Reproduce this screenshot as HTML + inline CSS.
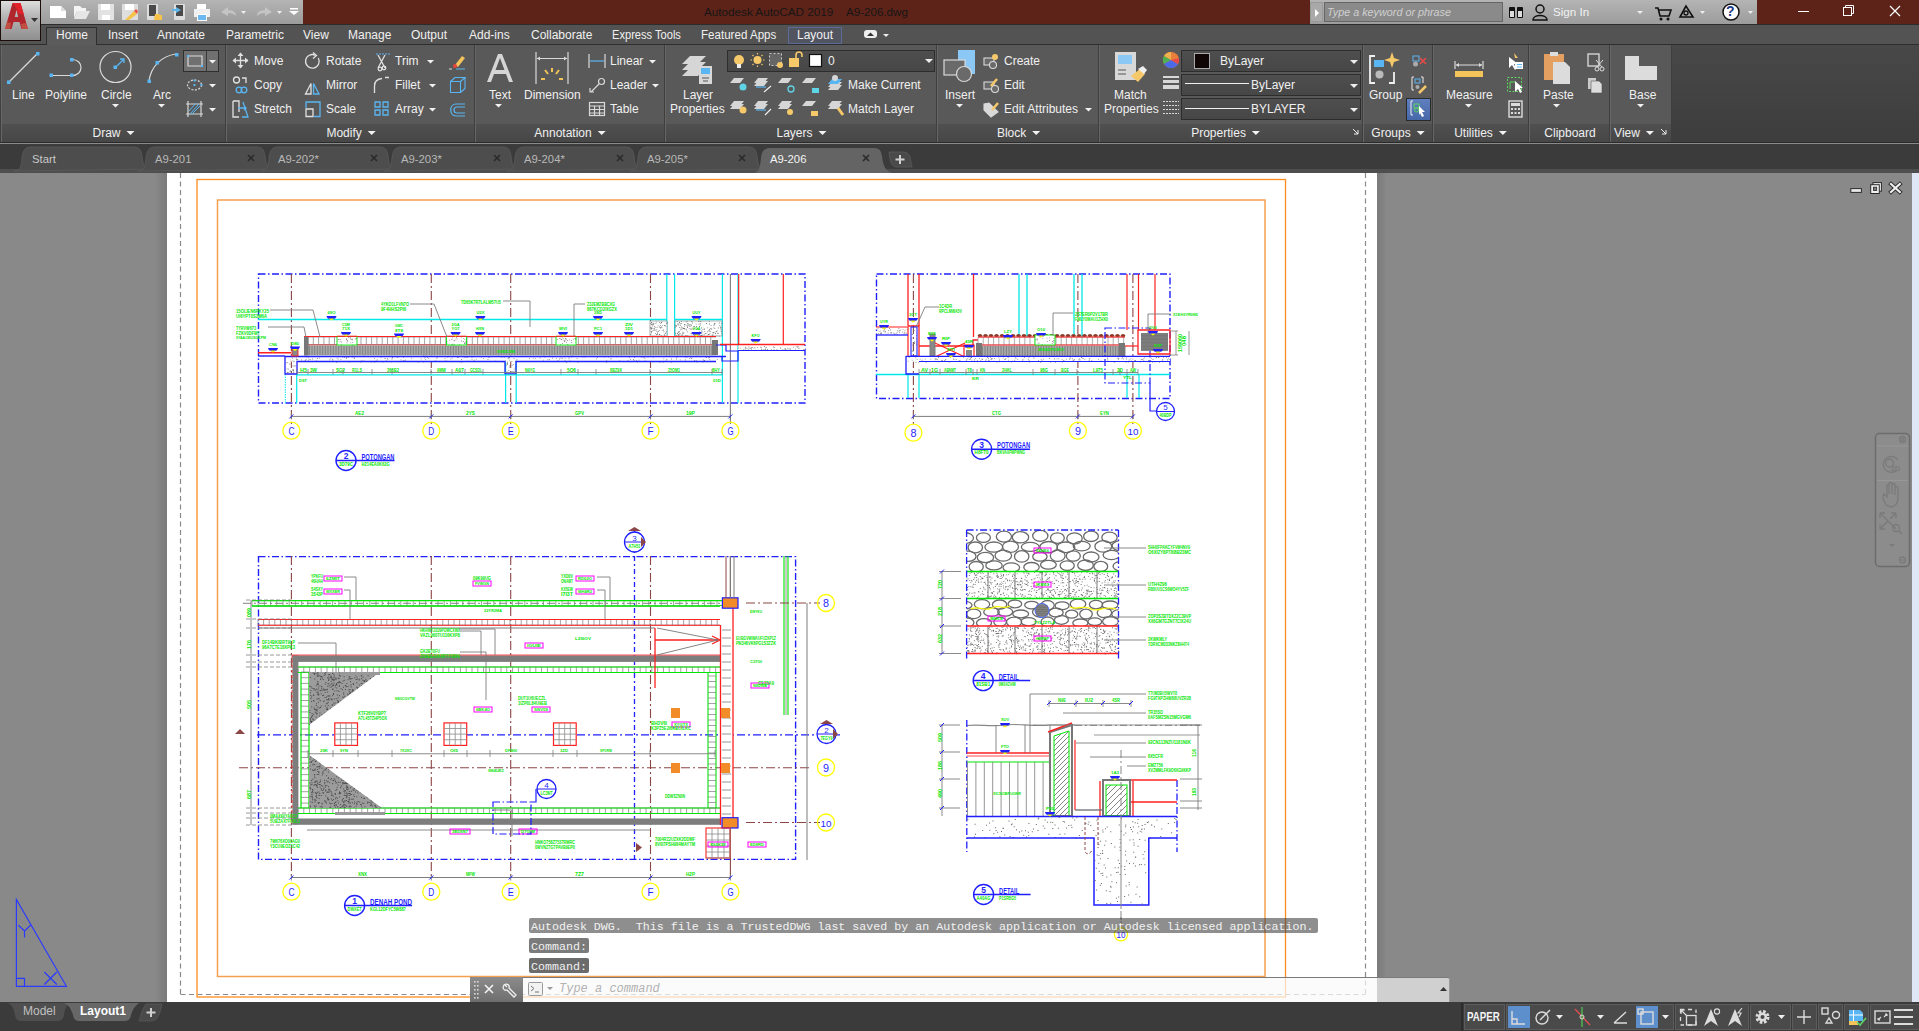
<!DOCTYPE html>
<html><head><meta charset="utf-8">
<style>
*{margin:0;padding:0;box-sizing:border-box}
html,body{width:1919px;height:1031px;overflow:hidden;background:#898989;font-family:"Liberation Sans",sans-serif}
.a{position:absolute}
.t{position:absolute;white-space:nowrap;color:#f0f0f0;font-size:12.5px;line-height:14px}
#logo{z-index:5}
#title{left:0;top:0;width:1919px;height:24px;background:#5e2318}
#qat{left:41px;top:0;width:262px;height:24px;background:linear-gradient(#b4b4b4,#9c9c9c)}
#srch{left:1310px;top:0;width:447px;height:24px;background:linear-gradient(#b4b4b4,#9c9c9c)}
#tabbar{left:0;top:24px;width:1919px;height:21px;background:#535353;border-top:1px solid #2c2c2c}
#ribbon{left:0;top:45px;width:1919px;height:99px;background:linear-gradient(#484848,#3d3d3d)}
#ribline{left:0;top:142px;width:1919px;height:2px;background:#8a8a8a;border-top:1px solid #2a2a2a}
.pnl{position:absolute;top:45px;height:97px;background:#595959;border-right:1px solid #3e3e3e;border-left:1px solid #666}
.pt{position:absolute;left:0;right:0;bottom:0;height:18px;background:linear-gradient(#505050,#474747);text-align:center;color:#f0f0f0;font-size:12.5px;line-height:18px}
#ftabs{left:0;top:144px;width:1919px;height:29px;background:#3b3b3b}
#draw{left:0;top:173px;width:1919px;height:830px;background:#898989}
#paper{left:167px;top:173px;width:1210px;height:829px;background:#fff}
#status{left:0;top:1002px;width:1919px;height:29px;background:#3b3b3b}
</style></head><body>

<div class="a" id="title"></div>
<div class="a" id="qat"></div>
<div class="a" id="srch"></div>
<!-- logo -->
<div class="a" style="left:0;top:0;width:41px;height:41px;background:#1a0d0b;z-index:5"></div>
<div class="a" style="left:1px;top:1px;width:39px;height:39px;background:linear-gradient(#dedede,#b5b5b5 40%,#8f8f8f);z-index:5"></div>
<svg class="a" style="left:0;top:0;z-index:6" width="42" height="42">
<path d="M5 29 L12.5 3 H20.5 L28 29 H21.5 L19.5 22 H13.5 L11.5 29 Z M14.8 17 H18.2 L16.5 10 Z" fill="#b0262c"/>
<path d="M12.5 3 H20.5 L24 15 L18 13 L16.5 8 Z" fill="#e3232b"/>
<path d="M5 29 L7 22 L11 23 L10 29 Z M21 24 L26 23 L28 29 H22 Z" fill="#c8604a" opacity="0.7"/>
<path d="M31 18 L38 18 L34.5 22 Z" fill="#333"/>
</svg>
<svg class="a" style="left:41px;top:0" width="262" height="24">
<!-- new -->
<path d="M9 6 H20 L25 11 V18 H9 Z" fill="#fff"/><path d="M20 6 L25 11 H20 Z" fill="#ddd"/>
<!-- open -->
<path d="M33 6 H39 L41 8 H45 V11 H36 L33 18 Z" fill="#f4f4f4"/><path d="M36 11 H49 L45 19 H33 Z" fill="#e6e6e6"/>
<!-- save -->
<path d="M57 4 H73 V20 H57 Z" fill="#e2e2e2"/><rect x="60" y="4" width="9" height="6" fill="#fff"/><rect x="61" y="15" width="8" height="5" fill="#fff"/>
<!-- saveas -->
<path d="M81 4 H97 V20 H81 Z" fill="#dedede"/><rect x="84" y="4" width="9" height="6" fill="#fff"/><path d="M84 20 L93 11 L96 14 L88 20 Z" fill="#f5c24a"/><path d="M93 11 L95 9 L97 11 L96 14 Z" fill="#e8534a"/>
<!-- web open -->
<rect x="106" y="4" width="11" height="16" rx="1" fill="#dcdcdc"/><rect x="108" y="5" width="7" height="11" fill="#4a4a4a"/><path d="M114 14 H118 L119 15 H121 V20 H113 Z" fill="#f5c24a"/>
<!-- web save -->
<rect x="133" y="4" width="11" height="16" rx="1" fill="#dcdcdc"/><rect x="135" y="5" width="7" height="11" fill="#4a4a4a"/><path d="M131 9 H135 V7 L140 10 L135 13 V11 H131 Z" fill="#5fb4e8"/>
<!-- print -->
<rect x="156" y="4" width="9" height="6" fill="#fff"/><rect x="153" y="9" width="16" height="8" fill="#f0f0f0"/><rect x="156" y="14" width="10" height="7" fill="#fff"/><rect x="157" y="15" width="8" height="5" fill="#6cb8f0"/>
<!-- undo redo -->
<path d="M180 12 L187 7 V10 C193 10 195 13 195 16 C193 14 191 13 187 13 V16 Z" fill="#c4c4c4"/>
<path d="M200 11 H205 L202.5 14 Z" fill="#eee"/>
<path d="M231 12 L224 7 V10 C218 10 216 13 216 16 C218 14 220 13 224 13 V16 Z" fill="#c4c4c4"/>
<path d="M236 11 H241 L238.5 14 Z" fill="#eee"/>
<rect x="249" y="8" width="8" height="1.5" fill="#fff"/><path d="M248 11 H258 L253 15 Z" fill="#fff"/>
</svg>
<div class="t" style="left:704px;top:5px;color:#161616;font-size:11.7px">Autodesk AutoCAD 2019</div>
<div class="t" style="left:846px;top:5px;color:#161616;font-size:11.6px">A9-206.dwg</div>
<!-- search -->
<div class="a" style="left:1310px;top:2px;width:13px;height:20px;background:#a9a9a9;border:1px solid #999"></div>
<svg class="a" style="left:1313px;top:8px" width="8" height="10"><path d="M2 1 L6 5 L2 9 Z" fill="#fff"/></svg>
<div class="a" style="left:1324px;top:2px;width:179px;height:20px;background:#8a8a8a;border:1px solid #666"></div>
<div class="t" style="left:1327px;top:5px;font-style:italic;color:#d0d0d0;font-size:10.8px">Type a keyword or phrase</div>
<svg class="a" style="left:1506px;top:2px" width="260" height="22">
<!-- binoculars -->
<rect x="3" y="5" width="6" height="11" rx="1" fill="#111"/><rect x="11" y="5" width="6" height="11" rx="1" fill="#111"/><rect x="4" y="9" width="4" height="6" fill="#ddd"/><rect x="12" y="9" width="4" height="6" fill="#ddd"/>
<!-- user -->
<circle cx="34" cy="7" r="4" fill="none" stroke="#111" stroke-width="1.5"/><path d="M27 18 C27 12 41 12 41 18 Z" fill="none" stroke="#111" stroke-width="1.5"/>
<path d="M131 9 H137 L134 12 Z" fill="#eee"/>
<!-- cart -->
<path d="M149 6 H152 L154 14 H163 L165 8 H153" fill="none" stroke="#111" stroke-width="1.6"/><circle cx="155" cy="17" r="1.5" fill="#111"/><circle cx="162" cy="17" r="1.5" fill="#111"/>
<!-- a360 -->
<path d="M180 4 L174 15 H187 Z" fill="none" stroke="#111" stroke-width="1.6"/><circle cx="180" cy="11" r="2" fill="none" stroke="#111" stroke-width="1.3"/>
<path d="M194 9 H199 L196.5 12 Z" fill="#eee"/>
<!-- help -->
<circle cx="225" cy="10" r="8" fill="#fff" stroke="#111" stroke-width="1.5"/>
<path d="M242 9 H247 L244.5 12 Z" fill="#eee"/>
</svg>
<div class="t" style="left:1553px;top:5px;color:#f2f2f2;font-size:11.6px">Sign In</div>
<div class="t" style="left:1726px;top:4px;color:#1a3a8c;font-size:14px;font-weight:bold">?</div>
<!-- window controls -->
<svg class="a" style="left:1780px;top:0" width="139" height="24">
<rect x="18" y="11" width="11" height="1" fill="#fff"/>
<rect x="63.5" y="7.5" width="8" height="8" fill="none" stroke="#fff"/><path d="M65.5 7.5 V5.5 H73.5 V13.5 H71.5" fill="none" stroke="#fff"/>
<path d="M110 6 L120 16 M120 6 L110 16" stroke="#fff" stroke-width="1.2"/>
</svg>

<div class="a" id="tabbar"></div>
<div class="a" style="left:0;top:44px;width:1919px;height:1px;background:#2e2e2e"></div>
<div class="a" style="left:46px;top:27px;width:51px;height:19px;background:#5b5b5b;border:1px solid #2e2e2e;border-bottom:none"></div>
<div class="a" style="left:788px;top:27px;width:54px;height:17px;background:#525560;border:1px solid #5b6a96"></div>
<div class="t" style="left:56px;top:28px;font-size:12px">Home</div>
<div class="t" style="left:108px;top:28px;font-size:12px">Insert</div>
<div class="t" style="left:157px;top:28px;font-size:12px">Annotate</div>
<div class="t" style="left:226px;top:28px;font-size:12px">Parametric</div>
<div class="t" style="left:303px;top:28px;font-size:12px">View</div>
<div class="t" style="left:348px;top:28px;font-size:12px">Manage</div>
<div class="t" style="left:411px;top:28px;font-size:12px">Output</div>
<div class="t" style="left:469px;top:28px;font-size:12px">Add-ins</div>
<div class="t" style="left:531px;top:28px;font-size:12px">Collaborate</div>
<div class="t" style="left:612px;top:28px;font-size:12px;transform:scaleX(0.925);transform-origin:0 0">Express Tools</div>
<div class="t" style="left:701px;top:28px;font-size:12px;transform:scaleX(0.965);transform-origin:0 0">Featured Apps</div>
<div class="t" style="left:797px;top:28px;font-size:12px">Layout</div>
<svg class="a" style="left:862px;top:28px;font-size:12px" width="30" height="14"><rect x="2" y="2" width="13" height="8" rx="3" fill="#eee"/><path d="M5 8 L8.5 4.5 L12 8 Z" fill="#333"/><path d="M21 6 H27 L24 9 Z" fill="#eee"/></svg>
<div class="a" id="ribbon"></div>
<div class="pnl" style="left:1px;width:225px"><div class="pt"></div></div>
<div class="pnl" style="left:226px;width:249px"><div class="pt"></div></div>
<div class="pnl" style="left:475px;width:190px"><div class="pt"></div></div>
<div class="pnl" style="left:665px;width:272px"><div class="pt"></div></div>
<div class="pnl" style="left:937px;width:162px"><div class="pt"></div></div>
<div class="pnl" style="left:1099px;width:264px"><div class="pt"></div></div>
<div class="pnl" style="left:1363px;width:70px"><div class="pt"></div></div>
<div class="pnl" style="left:1433px;width:96px"><div class="pt"></div></div>
<div class="pnl" style="left:1529px;width:81px"><div class="pt"></div></div>
<div class="pnl" style="left:1610px;width:62px"><div class="pt"></div></div>
<div class="a" id="ribline"></div>
<!-- dropdown boxes -->
<div class="a" style="left:183px;top:50px;width:36px;height:22px;background:#707070;border:1px solid #2f2f2f"></div>
<div class="a" style="left:206px;top:51px;width:1px;height:20px;background:#3a3a3a"></div>
<div class="a" style="left:727px;top:50px;width:208px;height:22px;background:linear-gradient(#4e4e4e,#474747);border:1px solid #2d2d2d"></div>
<div class="a" style="left:1181px;top:50px;width:180px;height:22px;background:linear-gradient(#4e4e4e,#474747);border:1px solid #2d2d2d"></div>
<div class="a" style="left:1181px;top:74px;width:180px;height:22px;background:linear-gradient(#4e4e4e,#474747);border:1px solid #2d2d2d"></div>
<div class="a" style="left:1181px;top:98px;width:180px;height:22px;background:linear-gradient(#4e4e4e,#474747);border:1px solid #2d2d2d"></div>
<div class="a" style="left:1406px;top:98px;width:25px;height:23px;background:linear-gradient(#5f7fbf,#4768a8);border:1px solid #2a2a2a"></div>
<svg class="a" style="left:0;top:0" width="1919" height="150">
<g fill="none" stroke="#d9d9d9" stroke-width="1.2">
<!-- Draw: line -->
<path d="M9 82 L37 54"/>
<!-- polyline -->
<path d="M51 75.5 H71 M72 59.5 C84 59.5 84 75.5 72 75.5"/>
<!-- circle -->
<circle cx="115.5" cy="67" r="15.5"/>
<!-- arc -->
<path d="M149 81 C151 66 162 56 176 54"/>
<!-- rect -->
<path d="M188 56 H202 V66 H188 Z"/>
<!-- ellipse -->
<ellipse cx="194.5" cy="85" rx="7" ry="5" stroke-dasharray="2 1.5"/>
<!-- hatch -->
<path d="M188 101 V117 M201 101 V117 M186 104 H203 M186 114 H203"/>
</g>
<g fill="#5ab6f2">
<rect x="7" y="80.5" width="3.5" height="3.5"/><rect x="36" y="52" width="3.5" height="3.5"/>
<rect x="49.5" y="73.5" width="3.5" height="3.5"/><rect x="70" y="73.5" width="3.5" height="3.5"/><rect x="70" y="58" width="3.5" height="3.5"/>
<rect x="113.5" y="65.5" width="3.5" height="3.5"/>
<rect x="147.5" y="79.5" width="3.5" height="3.5"/><rect x="155.5" y="61" width="3.5" height="3.5"/><rect x="175" y="53" width="3.5" height="3.5"/>
<rect x="187" y="55" width="2" height="2"/><rect x="201" y="65" width="2" height="2"/>
<rect x="193.5" y="84" width="2" height="2"/><rect x="200.5" y="84" width="2" height="2"/><rect x="193.5" y="79.5" width="2" height="2"/>
</g>
<path d="M117 66 L124 59 M120 59 H124 V63" stroke="#5ab6f2" stroke-width="1.3" fill="none"/>
<path d="M190 114 L199 104 M192 114 L200 106 M189 111 L196 103" stroke="#5ab6f2" stroke-width="1"/>
<!-- Modify -->
<g fill="none" stroke="#e0e0e0" stroke-width="1.3">
<path d="M240.5 53 V68 M233 60.5 H248"/>
<path d="M315.5 55.3 A6.8 6.8 0 1 0 318.3 58" /><path d="M313 52.5 L316.5 55.5 L313 58.5" />
<circle cx="236.5" cy="80" r="3"/><path d="M242 78 H246 V83"/>
<path d="M233 101 V117 H239 M233 101 H239 V112"/>
<path d="M305.5 94 L311 83.5 V94 Z"/>
<path d="M306 109 H313 V116.5 H306 Z"/>
<path d="M378 55 L385 68 M385 55 L378 68"/><circle cx="380" cy="69" r="1.8"/><circle cx="384" cy="68" r="1.8"/>
<path d="M374.5 93 V86 C374.5 81 377 79 382 78.5 M385 77.5 H389"/>
</g>
<path d="M376 54 H390" stroke="#5ab6f2" stroke-dasharray="2 1" stroke-width="1"/>
<g fill="none" stroke="#e0e0e0" stroke-width="1.3">
<path d="M240.5 52.5 L237.5 56 H243.5 Z M240.5 68.5 L237.5 65 H243.5 Z M232.5 60.5 L236 57.5 V63.5 Z M248.5 60.5 L245 57.5 V63.5 Z" fill="#e0e0e0" stroke="none"/>
</g>
<g fill="none" stroke="#5ab6f2" stroke-width="1.3">
<circle cx="239" cy="90" r="2.8"/><circle cx="244" cy="90" r="2.8"/>
<path d="M238 108 H246 M244 106 L246 108 L244 110 M243 102 L248 117 H242"/>
<path d="M313.5 83.5 L319 94 H313.5 Z"/>
<path d="M306 108 V102 H320 V116.5 H314"/>
<path d="M375 102 h5 v5 h-5 z M383 102 h5 v5 h-5 z M375 110 h5 v5 h-5 z M383 110 h5 v5 h-5 z"/>
<path d="M450.5 81.5 H460.5 V92.5 H450.5 Z M450.5 81.5 L455 77.5 H465 L460.5 81.5 M465 77.5 V88.5 L460.5 92.5" stroke-width="1.1"/>
<path d="M465 104 H456 C449 104 449 116 456 116 H465 M465 107 H457 C453 107 453 113 457 113 H465" stroke-width="1.2"/>
<path d="M456 69 H465" stroke-width="1"/><path d="M449 69 H452" stroke="#ddd" stroke-width="1"/>
</g>
<path d="M455 65 L462 56 L465 58 L458 67 Z" fill="#f2c45a"/><circle cx="455" cy="66" r="2" fill="#e8443a"/>
<!-- Annotation -->
<path d="M487 82 L498 54 H502 L513 82 H509 L506 74 H494 L491 82 Z M495.5 70 H504.5 L500 58 Z" fill="#d5d5d5"/>
<g stroke="#d9d9d9" stroke-width="1.2" fill="none">
<path d="M536 52 V84 M568 52 V84 M537 58.5 H567"/>
<path d="M589 54 V68 M605 54 V68"/>
<circle cx="601.5" cy="81.5" r="3"/><path d="M599 84 L591 92 M590 88 V92 H594"/>
<rect x="589.5" y="102.5" width="15" height="13"/><path d="M589.5 106 H604.5 M589.5 109.5 H604.5 M589.5 113 H604.5 M594.5 106 V115.5 M599.5 106 V115.5"/>
</g>
<path d="M537 58.5 L540 56.5 V60.5 Z M567 58.5 L564 56.5 V60.5 Z" fill="#d9d9d9"/>
<path d="M590 61 H604" stroke="#5ab6f2" stroke-width="1.2"/>
<g stroke="#f2c45a" stroke-width="2">
<path d="M552 68 V72 M545 70 L548 74 M559 70 L556 74 M541 79 H545 M559 79 H563"/>
</g>
<!-- Layers big icon -->
<g fill="#d6d6d6">
<path d="M690 56 H706 L698 64 H682 Z"/><path d="M690 62 H706 L698 70 H682 Z"/><path d="M690 68 H704 L698 76 H682 Z"/>
</g>
<rect x="699" y="66" width="13" height="18" fill="#d8d8d8"/><rect x="701" y="68" width="9" height="6" fill="#5ab6f2"/>
<path d="M702 78 H709 M703 81 H708" stroke="#555" stroke-width="1"/>
<!-- layer dropdown icons -->
<circle cx="739" cy="60" r="5" fill="#f5c96a"/><rect x="737" y="64" width="4" height="4" fill="#eee"/>
<circle cx="757.5" cy="60" r="4" fill="#f5c96a"/><path d="M757.5 53 V54.5 M757.5 65.5 V67 M750.5 60 H752 M763 60 H764.5 M752.5 55 L753.5 56 M762.5 55 L761.5 56 M752.5 65 L753.5 64 M762.5 65 L761.5 64" stroke="#f5c96a" stroke-width="1.2"/>
<rect x="769.5" y="53.5" width="12" height="12" fill="#666" stroke="#ccc" stroke-dasharray="2 2"/><circle cx="780" cy="65" r="3" fill="#f5c96a"/>
<rect x="789" y="58" width="10" height="9" fill="#f5c96a"/><path d="M796 58 V55 C796 51 802 51 802 55 V57" fill="none" stroke="#f5c96a" stroke-width="1.6"/>
<rect x="809.5" y="54.5" width="12" height="12" fill="#fff" stroke="#111" stroke-width="1.2"/>
<path d="M925 59 H933 L929 63 Z" fill="#eee"/>
<!-- layer row icons -->
<g fill="#d6d6d6">
<path d="M734 78 H744 L740 83 H730 Z"/><path d="M758 78 H768 L764 83 H754 Z"/><path d="M758 81 H768 L764 86 H754 Z"/>
<path d="M782 78 H792 L788 83 H778 Z"/><path d="M806 78 H816 L812 83 H802 Z"/>
<path d="M832 82 H842 L838 87 H828 Z"/><path d="M832 85 H842 L838 90 H828 Z"/>
<path d="M734 101 H744 L740 106 H730 Z"/><path d="M734 104 H744 L740 109 H730 Z"/>
<path d="M758 101 H768 L764 106 H754 Z"/><path d="M758 104 H768 L764 109 H754 Z"/>
<path d="M782 101 H792 L788 106 H778 Z"/><path d="M782 104 H792 L788 109 H778 Z"/>
<path d="M806 101 H816 L812 106 H802 Z"/>
<path d="M832 101 H842 L838 106 H828 Z"/><path d="M832 104 H842 L838 109 H828 Z"/>
</g>
<path d="M832 79 H842 L838 84 H828 Z" fill="#5ab6f2"/><circle cx="835" cy="78" r="3" fill="#d6d6d6"/>
<path d="M756 87 H766" stroke="#5ab6f2" stroke-width="1.2"/><path d="M756 110 H766" stroke="#5ab6f2" stroke-width="1.2"/>
<circle cx="743" cy="87" r="3.5" fill="#5fd4e6"/><circle cx="791" cy="89" r="3" fill="none" stroke="#5fd4e6" stroke-width="1.3"/>
<rect x="812" y="88" width="7" height="5" fill="#5fd4e6"/>
<circle cx="743" cy="110" r="3.5" fill="#f5c96a"/><circle cx="790" cy="112" r="3" fill="#f5c96a"/><rect x="811" y="111" width="7" height="5" fill="#f5c96a"/>
<path d="M838 108 L843 115" stroke="#f5c96a" stroke-width="3"/>
<path d="M764 92 L771 86 M765 115 L771 109" stroke="#eee" stroke-width="1.2"/>
<!-- Block -->
<rect x="958" y="50" width="17" height="24" fill="#8cc8f5"/>
<rect x="944" y="60" width="21" height="15" fill="#6a6a6a" stroke="#d9d9d9" stroke-width="1.2"/>
<circle cx="964" cy="74" r="7.5" fill="#6a6a6a" stroke="#d9d9d9" stroke-width="1.2"/>
<g stroke="#d9d9d9" stroke-width="1.1" fill="#6a6a6a">
<rect x="984" y="58" width="10" height="7"/><circle cx="993" cy="65" r="3.5"/>
<rect x="984" y="82" width="10" height="7"/><circle cx="995" cy="89" r="3.5"/>
<path d="M984 104 L989 103 L998 112 L991 117 L984 110 Z" fill="#d9d9d9"/>
</g>
<circle cx="995" cy="57" r="3" fill="#f5c96a"/>
<path d="M991 86 L997 79" stroke="#f5c96a" stroke-width="2.5"/><path d="M992 110 L998 103" stroke="#f5c96a" stroke-width="2.5"/>
<!-- Properties -->
<rect x="1115" y="52" width="21" height="28" fill="#d8d8d8"/><rect x="1118" y="55" width="14" height="9" fill="#8cc8f5"/>
<path d="M1118 70 H1126 M1118 74 H1126" stroke="#555" stroke-width="1"/>
<path d="M1131 76 L1140 69 L1145 74 L1138 82 Z" fill="#f5c96a"/><path d="M1138 69 L1143 66 L1147 70 L1144 74 Z" fill="#eee"/>
<circle cx="1171" cy="60" r="8" fill="#e8803a"/><path d="M1171 60 L1171 52 A8 8 0 0 0 1164 56 Z" fill="#f0b050"/><path d="M1171 60 L1164 56 A8 8 0 0 0 1164 64 Z" fill="#50b050"/><path d="M1171 60 L1164 64 A8 8 0 0 0 1178 64 Z" fill="#4a6ae8"/><path d="M1171 60 L1178 64 A8 8 0 0 0 1179 58 Z" fill="#e84a4a"/>
<g fill="#d8d8d8"><rect x="1163" y="76" width="16" height="2"/><rect x="1163" y="80" width="16" height="3"/><rect x="1163" y="85" width="16" height="4"/></g>
<g stroke="#d8d8d8" stroke-width="1.2" stroke-dasharray="2 1"><path d="M1163 101.5 H1179 M1163 105.5 H1179 M1163 109.5 H1179 M1163 113.5 H1179"/></g>
<rect x="1194.5" y="53.5" width="15" height="15" fill="#110606" stroke="#aaa" stroke-width="1"/>
<path d="M1185 83.5 H1249 M1185 108.5 H1249" stroke="#f0f0f0" stroke-width="1.2"/>
<path d="M1350 60 H1358 L1354 64 Z M1350 84 H1358 L1354 88 Z M1350 108 H1358 L1354 112 Z" fill="#eee"/>
<!-- Groups -->
<path d="M1375 56 H1370 V83 H1375 M1389 83 H1394 V72" fill="none" stroke="#f0f0f0" stroke-width="1.8"/>
<rect x="1374" y="60" width="10" height="7" fill="#5ab6f2"/><circle cx="1379.5" cy="74.5" r="4" fill="#bbb"/>
<path d="M1392 52 L1394 58 L1400 60 L1394 62 L1392 68 L1390 62 L1384 60 L1390 58 Z" fill="#f5c96a"/>
<rect x="1413" y="56" width="6" height="5" fill="none" stroke="#5ab6f2"/><circle cx="1415.5" cy="64" r="2.5" fill="#aaa"/><path d="M1420 58 L1426 64 M1426 58 L1420 64" stroke="#e84a4a" stroke-width="1.6"/>
<path d="M1414 77 H1412 V90 H1414 M1421 77 H1423 V83" fill="none" stroke="#eee"/><rect x="1415" y="79" width="5" height="4" fill="none" stroke="#5ab6f2"/><circle cx="1417.5" cy="87" r="2" fill="#aaa"/><path d="M1419 93 L1426 86" stroke="#f5c96a" stroke-width="2.5"/>
<path d="M1413 101 H1411 V115 H1413" fill="none" stroke="#eee"/><rect x="1414" y="104" width="5" height="4" fill="none" stroke="#5fd45f"/><circle cx="1416.5" cy="110" r="2" fill="none" stroke="#5fd45f"/><path d="M1419 106 L1425 112 L1422 112 L1424 116 L1422 117 L1420 113 L1419 115 Z" fill="#fff"/>
<!-- Utilities -->
<path d="M1455 61 V69 M1483 61 V69 M1456 65 H1482" stroke="#ddd" stroke-width="1.2"/><path d="M1456 65 L1459 63 V67 Z M1482 65 L1479 63 V67 Z" fill="#ddd"/>
<rect x="1455" y="71" width="28" height="6" fill="#f2c45a"/>
<path d="M1509 57 L1509 68 L1512 65 L1515 70 L1516 69 L1514 64 L1518 64 Z" fill="#fff"/><rect x="1515" y="62" width="8" height="7" fill="#fff"/><path d="M1517 64.5 H1522 M1517 67 H1522" stroke="#5ab6f2"/><path d="M1514 53 L1518 58 L1515 58 Z" fill="#f5c96a"/>
<rect x="1507.5" y="77.5" width="14" height="14" fill="none" stroke="#5fd45f" stroke-dasharray="2 1.5"/><path d="M1510 89 V82 H1516" stroke="#5fd45f" fill="none"/><path d="M1515 81 L1515 92 L1518 89 L1520 93 L1522 92 L1520 88 L1523 88 Z" fill="#fff"/>
<rect x="1509" y="101" width="13" height="16" fill="none" stroke="#ddd" stroke-width="1.4"/><rect x="1511" y="103" width="9" height="3" fill="#ddd"/>
<g fill="#ddd"><rect x="1511" y="108" width="2" height="2"/><rect x="1514.5" y="108" width="2" height="2"/><rect x="1518" y="108" width="2" height="2"/><rect x="1511" y="112" width="2" height="2"/><rect x="1514.5" y="112" width="2" height="2"/><rect x="1518" y="112" width="2" height="2"/></g>
<!-- Clipboard -->
<rect x="1544" y="54" width="20" height="26" fill="#e3a060"/><rect x="1550" y="52" width="8" height="4" fill="#ddd"/>
<path d="M1553 62 H1565 L1570 67 V84 H1553 Z" fill="#dcdcdc"/>
<rect x="1588" y="54" width="11" height="12" fill="none" stroke="#ddd" stroke-width="1.3"/><circle cx="1597" cy="69" r="2" fill="none" stroke="#ddd"/><circle cx="1602" cy="69" r="2" fill="none" stroke="#ddd"/><path d="M1596 60 L1602 67 M1603 60 L1597 67" stroke="#ddd"/>
<rect x="1588" y="78" width="8" height="11" fill="#ccc"/><path d="M1591 81 H1599 L1602 84 V93 H1591 Z" fill="#ddd" stroke="#555" stroke-width="0.6"/>
<!-- View base -->
<path d="M1625 56 H1639 V66 H1657 V80 H1625 Z" fill="#dcdcdc"/>
<!-- dropdown triangles -->
<g fill="#f2f2f2">
<path d="M112 104 H119 L115.5 107.5 Z"/><path d="M158 104 H165 L161.5 107.5 Z"/>
<path d="M209 60 H216 L212.5 63.5 Z"/><path d="M209 84 H216 L212.5 87.5 Z"/><path d="M209 108 H216 L212.5 111.5 Z"/>
<path d="M427 60 H434 L430.5 63.5 Z"/><path d="M429 84 H436 L432.5 87.5 Z"/><path d="M429 108 H436 L432.5 111.5 Z"/>
<path d="M495 104 H502 L498.5 107.5 Z"/><path d="M649 60 H656 L652.5 63.5 Z"/><path d="M652 84 H659 L655.5 87.5 Z"/>
<path d="M956 104 H963 L959.5 107.5 Z"/><path d="M1085 108 H1092 L1088.5 111.5 Z"/>
<path d="M1465 104 H1472 L1468.5 107.5 Z"/><path d="M1553 104 H1560 L1556.5 107.5 Z"/><path d="M1637 104 H1644 L1640.5 107.5 Z"/>
<!-- title arrows -->
<path d="M126.5 131 H134.5 L130.5 135 Z"/><path d="M367.7 131 H375.7 L371.7 135 Z"/><path d="M597.7 131 H605.7 L601.7 135 Z"/><path d="M818.5 131 H826.5 L822.5 135 Z"/><path d="M1032.2 131 H1040.2 L1036.2 135 Z"/><path d="M1251.9 131 H1259.9 L1255.9 135 Z"/><path d="M1416.7 131 H1424.7 L1420.7 135 Z"/><path d="M1498.9 131 H1506.9 L1502.9 135 Z"/><path d="M1645.9 131 H1653.9 L1649.9 135 Z"/>
</g>
<path d="M1353 129 L1358 134 M1358 130 V134 H1354 M1661 129 L1666 134 M1666 130 V134 H1662" stroke="#eee" stroke-width="1" fill="none"/>
</svg>
<!-- ribbon labels -->
<div class="t" style="left:12px;top:88px;font-size:12px">Line</div>
<div class="t" style="left:45px;top:88px;font-size:12px">Polyline</div>
<div class="t" style="left:101px;top:88px;font-size:12px">Circle</div>
<div class="t" style="left:153px;top:88px;font-size:12px">Arc</div>
<div class="t" style="left:254px;top:54px;font-size:12px">Move</div>
<div class="t" style="left:254px;top:78px;font-size:12px">Copy</div>
<div class="t" style="left:254px;top:102px;font-size:12px">Stretch</div>
<div class="t" style="left:326px;top:54px;font-size:12px">Rotate</div>
<div class="t" style="left:326px;top:78px;font-size:12px">Mirror</div>
<div class="t" style="left:326px;top:102px;font-size:12px">Scale</div>
<div class="t" style="left:395px;top:54px;font-size:12px">Trim</div>
<div class="t" style="left:395px;top:78px;font-size:12px">Fillet</div>
<div class="t" style="left:395px;top:102px;font-size:12px">Array</div>
<div class="t" style="left:489px;top:88px;font-size:12px">Text</div>
<div class="t" style="left:524px;top:88px;font-size:12px">Dimension</div>
<div class="t" style="left:610px;top:54px;font-size:12px">Linear</div>
<div class="t" style="left:610px;top:78px;font-size:12px">Leader</div>
<div class="t" style="left:610px;top:102px;font-size:12px">Table</div>
<div class="t" style="left:683px;top:88px;font-size:12px">Layer</div>
<div class="t" style="left:670px;top:102px;font-size:12px">Properties</div>
<div class="t" style="left:828px;top:54px;font-size:12px;color:#eee">0</div>
<div class="t" style="left:848px;top:78px;font-size:12px">Make Current</div>
<div class="t" style="left:848px;top:102px;font-size:12px">Match Layer</div>
<div class="t" style="left:945px;top:88px;font-size:12px">Insert</div>
<div class="t" style="left:1004px;top:54px;font-size:12px">Create</div>
<div class="t" style="left:1004px;top:78px;font-size:12px">Edit</div>
<div class="t" style="left:1004px;top:102px;font-size:12px">Edit Attributes</div>
<div class="t" style="left:1114px;top:88px;font-size:12px">Match</div>
<div class="t" style="left:1104px;top:102px;font-size:12px">Properties</div>
<div class="t" style="left:1220px;top:54px;font-size:12px">ByLayer</div>
<div class="t" style="left:1251px;top:78px;font-size:12px">ByLayer</div>
<div class="t" style="left:1251px;top:102px;font-size:12px">BYLAYER</div>
<div class="t" style="left:1369px;top:88px;font-size:12px">Group</div>
<div class="t" style="left:1446px;top:88px;font-size:12px">Measure</div>
<div class="t" style="left:1543px;top:88px;font-size:12px">Paste</div>
<div class="t" style="left:1629px;top:88px;font-size:12px">Base</div>
<div class="t" style="left:92.5px;top:126px;font-size:12px">Draw</div>
<div class="t" style="left:326.4px;top:126px;font-size:12px">Modify</div>
<div class="t" style="left:534.3px;top:126px;font-size:12px">Annotation</div>
<div class="t" style="left:776.5px;top:126px;font-size:12px">Layers</div>
<div class="t" style="left:996.9px;top:126px;font-size:12px">Block</div>
<div class="t" style="left:1191.2px;top:126px;font-size:12px">Properties</div>
<div class="t" style="left:1371.3px;top:126px;font-size:12px">Groups</div>
<div class="t" style="left:1454.2px;top:126px;font-size:12px">Utilities</div>
<div class="t" style="left:1544.3px;top:126px;font-size:12px">Clipboard</div>
<div class="t" style="left:1614.1px;top:126px;font-size:12px">View</div>
<div class="a" id="ftabs"></div>
<svg class="a" style="left:0;top:144px" width="1919" height="29">
<rect x="0" y="25" width="1919" height="4" fill="#4e4e4e"/>
<g fill="#4d4d4d" stroke="#5a5a5a" stroke-width="0.8">
<path d="M14 27 C20 27 21 24 22 14 C23 5 26 3 32 3 H133 C139 3 141 5 142 12 C143 22 145 25 150 25 Z"/>
<path d="M138 27 C144 27 145 24 146 14 C147 5 150 3 156 3 H256 C262 3 264 5 265 12 C266 22 268 25 273 25 Z"/>
<path d="M261 27 C267 27 268 24 269 14 C270 5 273 3 279 3 H379 C385 3 387 5 388 12 C389 22 391 25 396 25 Z"/>
<path d="M384 27 C390 27 391 24 392 14 C393 5 396 3 402 3 H502 C508 3 510 5 511 12 C512 22 514 25 519 25 Z"/>
<path d="M507 27 C513 27 514 24 515 14 C516 5 519 3 525 3 H625 C631 3 633 5 634 12 C635 22 637 25 642 25 Z"/>
<path d="M630 27 C636 27 637 24 638 14 C639 5 642 3 648 3 H748 C754 3 756 5 757 12 C758 22 760 25 765 25 Z"/>
</g>
<path d="M753 29 C759 29 760 24 761 14 C762 6 765 4 771 4 H873 C879 4 881 6 882 12 C883 22 886 28 893 29 Z" fill="#646464"/>
<path d="M889 8 H903 C907 8 909 10 910 13 C911 18 912 22 912 23 H897 C893 23 891 20 890 15 Z" fill="#4a4a4a" stroke="#5a5a5a" stroke-width="0.8"/>
<path d="M900 11 V20 M895.5 15.5 H904.5" stroke="#d0d0d0" stroke-width="2"/>
<g stroke="#2a2a2a" stroke-width="1.6">
<path d="M248 11 L254 17 M254 11 L248 17"/><path d="M371 11 L377 17 M377 11 L371 17"/><path d="M494 11 L500 17 M500 11 L494 17"/>
<path d="M617 11 L623 17 M623 11 L617 17"/><path d="M739 11 L745 17 M745 11 L739 17"/><path d="M863 11 L869 17 M869 11 L863 17"/>
</g>
</svg>
<div class="t" style="left:32px;top:152px;font-size:11.3px;color:#c8c8c8">Start</div>
<div class="t" style="left:155px;top:152px;font-size:11.3px;color:#b8b8b8">A9-201</div>
<div class="t" style="left:278px;top:152px;font-size:11.3px;color:#b8b8b8">A9-202*</div>
<div class="t" style="left:401px;top:152px;font-size:11.3px;color:#b8b8b8">A9-203*</div>
<div class="t" style="left:524px;top:152px;font-size:11.3px;color:#b8b8b8">A9-204*</div>
<div class="t" style="left:647px;top:152px;font-size:11.3px;color:#b8b8b8">A9-205*</div>
<div class="t" style="left:770px;top:152px;font-size:11.3px;color:#f4f4f4">A9-206</div>
<div class="a" id="draw"></div>
<div class="a" style="left:155px;top:173px;width:12px;height:830px;background:linear-gradient(90deg,#898989,#7a7a7a)"></div>
<div class="a" id="paper"></div>
<div class="a" style="left:1377px;top:173px;width:10px;height:830px;background:linear-gradient(90deg,#7a7a7a,#898989)"></div>
<div class="a" style="left:1912px;top:173px;width:7px;height:830px;background:#dfe6f5"></div>
<svg class="a" style="left:0;top:0" width="1919" height="1031">
<line x1="180.5" y1="173" x2="180.5" y2="994.5" stroke="#8a8a8a" stroke-width="1.2" stroke-dasharray="5 3.5"/>
<line x1="180.5" y1="994.5" x2="1365.5" y2="994.5" stroke="#8a8a8a" stroke-width="1.2" stroke-dasharray="5 3.5"/>
<line x1="1365.5" y1="173" x2="1365.5" y2="994.5" stroke="#8a8a8a" stroke-width="1.2" stroke-dasharray="5 3.5"/>
<rect x="197" y="179.5" width="1088.5" height="817.5" stroke="#ff8c1e" stroke-width="1.3" fill="none"/>
<rect x="217.5" y="200" width="1047.5" height="776.5" stroke="#f5a050" stroke-width="1.5" fill="none"/>
<rect x="258.5" y="274" width="546.5" height="129" stroke="#1f1fff" stroke-width="1.4" fill="none" stroke-dasharray="7 2.5 1.5 2.5"/>
<line x1="291.4" y1="274" x2="291.4" y2="424" stroke="#8c4646" stroke-width="1.1" stroke-dasharray="9 3 2 3"/>
<line x1="431.3" y1="274" x2="431.3" y2="424" stroke="#8c4646" stroke-width="1.1" stroke-dasharray="9 3 2 3"/>
<line x1="510.7" y1="274" x2="510.7" y2="424" stroke="#8c4646" stroke-width="1.1" stroke-dasharray="9 3 2 3"/>
<line x1="650.5" y1="274" x2="650.5" y2="424" stroke="#8c4646" stroke-width="1.1" stroke-dasharray="9 3 2 3"/>
<line x1="730.4" y1="274" x2="730.4" y2="424" stroke="#7d7d7d" stroke-width="1.1"/>
<line x1="258" y1="319.5" x2="667" y2="319.5" stroke="#00e8e8" stroke-width="1.6"/>
<line x1="675" y1="319.5" x2="722" y2="319.5" stroke="#00e8e8" stroke-width="1.6"/>
<line x1="666.8" y1="274" x2="666.8" y2="337" stroke="#00e8e8" stroke-width="1.2"/>
<line x1="674.6" y1="274" x2="674.6" y2="337" stroke="#00e8e8" stroke-width="1.2"/>
<line x1="722.4" y1="274" x2="722.4" y2="403" stroke="#00e8e8" stroke-width="1.2"/>
<line x1="738" y1="274" x2="738" y2="403" stroke="#00e8e8" stroke-width="1.2"/>
<line x1="285.3" y1="374" x2="285.3" y2="403" stroke="#00e8e8" stroke-width="1" stroke-dasharray="1.5 1"/>
<line x1="296.7" y1="374" x2="296.7" y2="403" stroke="#00e8e8" stroke-width="1.2"/>
<line x1="505.6" y1="362" x2="505.6" y2="403" stroke="#00e8e8" stroke-width="1.2"/>
<line x1="516.2" y1="362" x2="516.2" y2="403" stroke="#00e8e8" stroke-width="1.2"/>
<rect x="650" y="321" width="17" height="15" fill="#fff"/>
<path d="M655.5 323.3h0.8v0.8h-0.8z M661.1 322.1h0.8v0.8h-0.8z M659.1 326.5h0.8v0.8h-0.8z M651.0 328.6h0.8v0.8h-0.8z M650.6 327.5h0.8v0.8h-0.8z M651.2 322.4h0.8v0.8h-0.8z M657.2 333.4h0.8v0.8h-0.8z M652.1 324.3h0.8v0.8h-0.8z M660.7 335.2h0.8v0.8h-0.8z M659.8 327.0h0.8v0.8h-0.8z M666.6 321.7h0.8v0.8h-0.8z M664.6 325.3h0.8v0.8h-0.8z M652.5 322.8h0.8v0.8h-0.8z M655.2 333.2h0.8v0.8h-0.8z M653.1 329.7h0.8v0.8h-0.8z M660.9 326.6h0.8v0.8h-0.8z M659.3 321.9h0.8v0.8h-0.8z M651.0 324.1h0.8v0.8h-0.8z M661.6 327.4h0.8v0.8h-0.8z M655.3 329.8h0.8v0.8h-0.8z M657.7 325.5h0.8v0.8h-0.8z M663.5 331.5h0.8v0.8h-0.8z M654.1 329.6h0.8v0.8h-0.8z M658.9 334.1h0.8v0.8h-0.8z M662.4 325.3h0.8v0.8h-0.8z M666.7 322.8h0.8v0.8h-0.8z M657.1 332.4h0.8v0.8h-0.8z M652.6 328.3h0.8v0.8h-0.8z M650.7 331.0h0.8v0.8h-0.8z M663.0 329.6h0.8v0.8h-0.8z M664.9 325.7h0.8v0.8h-0.8z M661.8 329.9h0.8v0.8h-0.8z M659.9 327.8h0.8v0.8h-0.8z M664.3 335.2h0.8v0.8h-0.8z M658.1 331.0h0.8v0.8h-0.8z M651.0 331.5h0.8v0.8h-0.8z M661.0 335.9h0.8v0.8h-0.8z M664.0 325.3h0.8v0.8h-0.8z M656.6 331.0h0.8v0.8h-0.8z M650.4 327.9h0.8v0.8h-0.8z M652.9 322.8h0.8v0.8h-0.8z M651.0 332.5h0.8v0.8h-0.8z M652.2 324.7h0.8v0.8h-0.8z M656.6 334.1h0.8v0.8h-0.8z M651.4 327.7h0.8v0.8h-0.8z M659.3 334.3h0.8v0.8h-0.8z M663.9 334.0h0.8v0.8h-0.8z M654.7 327.2h0.8v0.8h-0.8z M656.1 334.3h0.8v0.8h-0.8z M666.3 323.3h0.8v0.8h-0.8z M653.0 324.5h0.8v0.8h-0.8z M654.0 328.3h0.8v0.8h-0.8z M660.0 324.9h0.8v0.8h-0.8z M650.1 327.3h0.8v0.8h-0.8z M656.3 329.5h0.8v0.8h-0.8z M666.2 331.4h0.8v0.8h-0.8z M658.8 330.3h0.8v0.8h-0.8z M661.5 321.8h0.8v0.8h-0.8z M665.3 332.7h0.8v0.8h-0.8z M664.9 333.0h0.8v0.8h-0.8z M656.7 327.0h0.8v0.8h-0.8z M651.8 330.5h0.8v0.8h-0.8z M651.1 322.0h0.8v0.8h-0.8z M653.5 323.4h0.8v0.8h-0.8z M655.8 321.8h0.8v0.8h-0.8z M650.0 323.3h0.8v0.8h-0.8z M651.7 326.5h0.8v0.8h-0.8z M650.4 334.1h0.8v0.8h-0.8z M660.4 323.2h0.8v0.8h-0.8z M654.3 326.2h0.8v0.8h-0.8z" fill="#666"/>
<rect x="650" y="321" width="17" height="15" stroke="#7d7d7d" stroke-width="0.6" fill="none"/>
<path d="M692.1 322.8h0.8v0.8h-0.8z M714.9 335.9h0.8v0.8h-0.8z M696.9 328.3h0.8v0.8h-0.8z M679.0 322.5h0.8v0.8h-0.8z M691.1 325.0h0.8v0.8h-0.8z M714.0 323.4h0.8v0.8h-0.8z M676.1 335.3h0.8v0.8h-0.8z M699.8 323.2h0.8v0.8h-0.8z M700.5 321.4h0.8v0.8h-0.8z M699.8 335.7h0.8v0.8h-0.8z M715.6 331.4h0.8v0.8h-0.8z M687.3 326.5h0.8v0.8h-0.8z M682.9 332.6h0.8v0.8h-0.8z M700.0 332.7h0.8v0.8h-0.8z M690.5 324.3h0.8v0.8h-0.8z M713.1 335.8h0.8v0.8h-0.8z M715.1 333.1h0.8v0.8h-0.8z M713.5 332.1h0.8v0.8h-0.8z M685.7 328.8h0.8v0.8h-0.8z M691.7 321.4h0.8v0.8h-0.8z M676.3 325.2h0.8v0.8h-0.8z M687.2 331.4h0.8v0.8h-0.8z M720.0 327.7h0.8v0.8h-0.8z M719.0 335.8h0.8v0.8h-0.8z M719.9 326.5h0.8v0.8h-0.8z M685.4 324.4h0.8v0.8h-0.8z M684.2 324.1h0.8v0.8h-0.8z M704.3 334.5h0.8v0.8h-0.8z M714.5 328.2h0.8v0.8h-0.8z M705.7 333.0h0.8v0.8h-0.8z M679.0 330.9h0.8v0.8h-0.8z M717.8 332.7h0.8v0.8h-0.8z M710.3 328.2h0.8v0.8h-0.8z M683.4 332.8h0.8v0.8h-0.8z M690.6 333.0h0.8v0.8h-0.8z M720.7 326.9h0.8v0.8h-0.8z M693.9 335.2h0.8v0.8h-0.8z M709.1 323.6h0.8v0.8h-0.8z M681.0 323.3h0.8v0.8h-0.8z M717.5 333.1h0.8v0.8h-0.8z M681.9 333.4h0.8v0.8h-0.8z M721.1 330.9h0.8v0.8h-0.8z M691.5 329.2h0.8v0.8h-0.8z M681.2 321.2h0.8v0.8h-0.8z M720.6 330.7h0.8v0.8h-0.8z M699.7 335.0h0.8v0.8h-0.8z M695.4 334.1h0.8v0.8h-0.8z M713.8 324.2h0.8v0.8h-0.8z M686.8 325.4h0.8v0.8h-0.8z M686.3 329.8h0.8v0.8h-0.8z M687.2 327.3h0.8v0.8h-0.8z M681.2 334.7h0.8v0.8h-0.8z M691.6 327.9h0.8v0.8h-0.8z M702.4 334.6h0.8v0.8h-0.8z M694.8 334.8h0.8v0.8h-0.8z M698.6 329.0h0.8v0.8h-0.8z M699.6 321.3h0.8v0.8h-0.8z M695.7 323.7h0.8v0.8h-0.8z M675.2 333.0h0.8v0.8h-0.8z M683.1 328.1h0.8v0.8h-0.8z M709.1 329.3h0.8v0.8h-0.8z M690.3 328.8h0.8v0.8h-0.8z M701.1 332.8h0.8v0.8h-0.8z M680.0 329.4h0.8v0.8h-0.8z M686.7 325.2h0.8v0.8h-0.8z M711.3 328.6h0.8v0.8h-0.8z M701.4 332.4h0.8v0.8h-0.8z M717.9 327.6h0.8v0.8h-0.8z M703.8 328.6h0.8v0.8h-0.8z M699.1 331.4h0.8v0.8h-0.8z M696.3 329.0h0.8v0.8h-0.8z M697.5 335.1h0.8v0.8h-0.8z M707.9 334.1h0.8v0.8h-0.8z M719.3 324.9h0.8v0.8h-0.8z M701.3 335.1h0.8v0.8h-0.8z M714.5 323.1h0.8v0.8h-0.8z M680.7 327.6h0.8v0.8h-0.8z M678.4 324.6h0.8v0.8h-0.8z M678.4 331.0h0.8v0.8h-0.8z M711.8 334.5h0.8v0.8h-0.8z M682.3 331.7h0.8v0.8h-0.8z M706.0 323.1h0.8v0.8h-0.8z M716.5 335.5h0.8v0.8h-0.8z M685.3 335.3h0.8v0.8h-0.8z M693.7 328.3h0.8v0.8h-0.8z M721.5 333.5h0.8v0.8h-0.8z M682.6 327.5h0.8v0.8h-0.8z M699.2 326.1h0.8v0.8h-0.8z M684.2 325.8h0.8v0.8h-0.8z M708.9 321.3h0.8v0.8h-0.8z M701.0 327.6h0.8v0.8h-0.8z M675.8 326.0h0.8v0.8h-0.8z M704.3 328.7h0.8v0.8h-0.8z M678.0 335.8h0.8v0.8h-0.8z M712.1 335.6h0.8v0.8h-0.8z M679.9 325.0h0.8v0.8h-0.8z M676.9 332.7h0.8v0.8h-0.8z M687.7 322.9h0.8v0.8h-0.8z M694.8 334.7h0.8v0.8h-0.8z M713.5 324.9h0.8v0.8h-0.8z M682.0 334.8h0.8v0.8h-0.8z M701.8 331.5h0.8v0.8h-0.8z M679.2 321.9h0.8v0.8h-0.8z M707.3 327.4h0.8v0.8h-0.8z M678.4 335.1h0.8v0.8h-0.8z M704.8 333.0h0.8v0.8h-0.8z M678.9 333.8h0.8v0.8h-0.8z M678.1 333.9h0.8v0.8h-0.8z M696.3 326.1h0.8v0.8h-0.8z M701.0 334.9h0.8v0.8h-0.8z M687.6 322.9h0.8v0.8h-0.8z M699.8 324.6h0.8v0.8h-0.8z M680.1 323.4h0.8v0.8h-0.8z M677.4 324.0h0.8v0.8h-0.8z M689.7 325.6h0.8v0.8h-0.8z M710.7 325.3h0.8v0.8h-0.8z M698.5 323.7h0.8v0.8h-0.8z M691.3 321.3h0.8v0.8h-0.8z M686.8 321.2h0.8v0.8h-0.8z M709.5 329.3h0.8v0.8h-0.8z M683.9 328.1h0.8v0.8h-0.8z M718.9 322.6h0.8v0.8h-0.8z M713.5 327.5h0.8v0.8h-0.8z M698.3 333.5h0.8v0.8h-0.8z M693.5 328.6h0.8v0.8h-0.8z M707.3 335.7h0.8v0.8h-0.8z M691.1 333.5h0.8v0.8h-0.8z M708.2 330.5h0.8v0.8h-0.8z M694.0 326.2h0.8v0.8h-0.8z M677.6 322.9h0.8v0.8h-0.8z M678.3 332.1h0.8v0.8h-0.8z M687.0 323.4h0.8v0.8h-0.8z M679.0 333.6h0.8v0.8h-0.8z M715.9 331.1h0.8v0.8h-0.8z M688.3 324.6h0.8v0.8h-0.8z M688.8 327.9h0.8v0.8h-0.8z M682.4 327.7h0.8v0.8h-0.8z M687.4 335.4h0.8v0.8h-0.8z M720.7 329.2h0.8v0.8h-0.8z M686.5 335.5h0.8v0.8h-0.8z M689.5 326.3h0.8v0.8h-0.8z M675.1 326.7h0.8v0.8h-0.8z M697.3 328.5h0.8v0.8h-0.8z M684.4 328.6h0.8v0.8h-0.8z M675.2 325.0h0.8v0.8h-0.8z M679.2 327.0h0.8v0.8h-0.8z M677.0 321.3h0.8v0.8h-0.8z M689.3 324.5h0.8v0.8h-0.8z M702.5 328.9h0.8v0.8h-0.8z M710.3 330.9h0.8v0.8h-0.8z M708.7 334.2h0.8v0.8h-0.8z M693.3 325.9h0.8v0.8h-0.8z M721.3 323.2h0.8v0.8h-0.8z M709.0 330.6h0.8v0.8h-0.8z M677.1 333.5h0.8v0.8h-0.8z M716.9 330.4h0.8v0.8h-0.8z M709.5 333.2h0.8v0.8h-0.8z M681.5 328.9h0.8v0.8h-0.8z M698.7 333.5h0.8v0.8h-0.8z M712.8 333.4h0.8v0.8h-0.8z M702.5 334.4h0.8v0.8h-0.8z M707.1 331.4h0.8v0.8h-0.8z M685.8 321.5h0.8v0.8h-0.8z M681.3 326.4h0.8v0.8h-0.8z M679.9 333.5h0.8v0.8h-0.8z M701.3 330.4h0.8v0.8h-0.8z M704.4 331.2h0.8v0.8h-0.8z M698.0 321.0h0.8v0.8h-0.8z M712.5 332.2h0.8v0.8h-0.8z M698.6 329.0h0.8v0.8h-0.8z" fill="#666"/>
<rect x="675" y="321" width="47" height="15" stroke="#7d7d7d" stroke-width="0.6" fill="none"/>
<rect x="304" y="336.5" width="412" height="9" fill="#fff"/>
<path d="M308 337H716M308 344.5H716M308.0 337V344.5M313.3 337V344.5M318.6 337V344.5M323.9 337V344.5M329.2 337V344.5M334.5 337V344.5M339.8 337V344.5M345.1 337V344.5M350.4 337V344.5M355.7 337V344.5M361.0 337V344.5M366.3 337V344.5M371.6 337V344.5M376.9 337V344.5M382.2 337V344.5M387.5 337V344.5M392.8 337V344.5M398.1 337V344.5M403.4 337V344.5M408.7 337V344.5M414.0 337V344.5M419.3 337V344.5M424.6 337V344.5M429.9 337V344.5M435.2 337V344.5M440.5 337V344.5M445.8 337V344.5M451.1 337V344.5M456.4 337V344.5M461.7 337V344.5M467.0 337V344.5M472.3 337V344.5M477.6 337V344.5M482.9 337V344.5M488.2 337V344.5M493.5 337V344.5M498.8 337V344.5M504.1 337V344.5M509.4 337V344.5M514.7 337V344.5M520.0 337V344.5M525.3 337V344.5M530.6 337V344.5M535.9 337V344.5M541.2 337V344.5M546.5 337V344.5M551.8 337V344.5M557.1 337V344.5M562.4 337V344.5M567.7 337V344.5M573.0 337V344.5M578.3 337V344.5M583.6 337V344.5M588.9 337V344.5M594.2 337V344.5M599.5 337V344.5M604.8 337V344.5M610.1 337V344.5M615.4 337V344.5M620.7 337V344.5M626.0 337V344.5M631.3 337V344.5M636.6 337V344.5M641.9 337V344.5M647.2 337V344.5M652.5 337V344.5M657.8 337V344.5M663.1 337V344.5M668.4 337V344.5M673.7 337V344.5M679.0 337V344.5M684.3 337V344.5M689.6 337V344.5M694.9 337V344.5M700.2 337V344.5M705.5 337V344.5M710.8 337V344.5" stroke="#9a9a9a" stroke-width="0.9" fill="none"/>
<line x1="304" y1="336.5" x2="716" y2="336.5" stroke="#ff2020" stroke-width="1.1"/>
<line x1="304" y1="345" x2="716" y2="345" stroke="#ff2020" stroke-width="0.9"/>
<rect x="304" y="345.5" width="412" height="10" fill="#c6c6c6"/>
<path d="M308.0 345.5V355.5 M309.6 345.5V355.5 M311.2 345.5V355.5 M312.8 345.5V355.5 M314.4 345.5V355.5 M316.0 345.5V355.5 M317.6 345.5V355.5 M319.2 345.5V355.5 M320.8 345.5V355.5 M322.4 345.5V355.5 M324.0 345.5V355.5 M325.6 345.5V355.5 M327.2 345.5V355.5 M328.8 345.5V355.5 M330.4 345.5V355.5 M332.0 345.5V355.5 M333.6 345.5V355.5 M335.2 345.5V355.5 M336.8 345.5V355.5 M338.4 345.5V355.5 M340.0 345.5V355.5 M341.6 345.5V355.5 M343.2 345.5V355.5 M344.8 345.5V355.5 M346.4 345.5V355.5 M348.0 345.5V355.5 M349.6 345.5V355.5 M351.2 345.5V355.5 M352.8 345.5V355.5 M354.4 345.5V355.5 M356.0 345.5V355.5 M357.6 345.5V355.5 M359.2 345.5V355.5 M360.8 345.5V355.5 M362.4 345.5V355.5 M364.0 345.5V355.5 M365.6 345.5V355.5 M367.2 345.5V355.5 M368.8 345.5V355.5 M370.4 345.5V355.5 M372.0 345.5V355.5 M373.6 345.5V355.5 M375.2 345.5V355.5 M376.8 345.5V355.5 M378.4 345.5V355.5 M380.0 345.5V355.5 M381.6 345.5V355.5 M383.2 345.5V355.5 M384.8 345.5V355.5 M386.4 345.5V355.5 M388.0 345.5V355.5 M389.6 345.5V355.5 M391.2 345.5V355.5 M392.8 345.5V355.5 M394.4 345.5V355.5 M396.0 345.5V355.5 M397.6 345.5V355.5 M399.2 345.5V355.5 M400.8 345.5V355.5 M402.4 345.5V355.5 M404.0 345.5V355.5 M405.6 345.5V355.5 M407.2 345.5V355.5 M408.8 345.5V355.5 M410.4 345.5V355.5 M412.0 345.5V355.5 M413.6 345.5V355.5 M415.2 345.5V355.5 M416.8 345.5V355.5 M418.4 345.5V355.5 M420.0 345.5V355.5 M421.6 345.5V355.5 M423.2 345.5V355.5 M424.8 345.5V355.5 M426.4 345.5V355.5 M428.0 345.5V355.5 M429.6 345.5V355.5 M431.2 345.5V355.5 M432.8 345.5V355.5 M434.4 345.5V355.5 M436.0 345.5V355.5 M437.6 345.5V355.5 M439.2 345.5V355.5 M440.8 345.5V355.5 M442.4 345.5V355.5 M444.0 345.5V355.5 M445.6 345.5V355.5 M447.2 345.5V355.5 M448.8 345.5V355.5 M450.4 345.5V355.5 M452.0 345.5V355.5 M453.6 345.5V355.5 M455.2 345.5V355.5 M456.8 345.5V355.5 M458.4 345.5V355.5 M460.0 345.5V355.5 M461.6 345.5V355.5 M463.2 345.5V355.5 M464.8 345.5V355.5 M466.4 345.5V355.5 M468.0 345.5V355.5 M469.6 345.5V355.5 M471.2 345.5V355.5 M472.8 345.5V355.5 M474.4 345.5V355.5 M476.0 345.5V355.5 M477.6 345.5V355.5 M479.2 345.5V355.5 M480.8 345.5V355.5 M482.4 345.5V355.5 M484.0 345.5V355.5 M485.6 345.5V355.5 M487.2 345.5V355.5 M488.8 345.5V355.5 M490.4 345.5V355.5 M492.0 345.5V355.5 M493.6 345.5V355.5 M495.2 345.5V355.5 M496.8 345.5V355.5 M498.4 345.5V355.5 M500.0 345.5V355.5 M501.6 345.5V355.5 M503.2 345.5V355.5 M504.8 345.5V355.5 M506.4 345.5V355.5 M508.0 345.5V355.5 M509.6 345.5V355.5 M511.2 345.5V355.5 M512.8 345.5V355.5 M514.4 345.5V355.5 M516.0 345.5V355.5 M517.6 345.5V355.5 M519.2 345.5V355.5 M520.8 345.5V355.5 M522.4 345.5V355.5 M524.0 345.5V355.5 M525.6 345.5V355.5 M527.2 345.5V355.5 M528.8 345.5V355.5 M530.4 345.5V355.5 M532.0 345.5V355.5 M533.6 345.5V355.5 M535.2 345.5V355.5 M536.8 345.5V355.5 M538.4 345.5V355.5 M540.0 345.5V355.5 M541.6 345.5V355.5 M543.2 345.5V355.5 M544.8 345.5V355.5 M546.4 345.5V355.5 M548.0 345.5V355.5 M549.6 345.5V355.5 M551.2 345.5V355.5 M552.8 345.5V355.5 M554.4 345.5V355.5 M556.0 345.5V355.5 M557.6 345.5V355.5 M559.2 345.5V355.5 M560.8 345.5V355.5 M562.4 345.5V355.5 M564.0 345.5V355.5 M565.6 345.5V355.5 M567.2 345.5V355.5 M568.8 345.5V355.5 M570.4 345.5V355.5 M572.0 345.5V355.5 M573.6 345.5V355.5 M575.2 345.5V355.5 M576.8 345.5V355.5 M578.4 345.5V355.5 M580.0 345.5V355.5 M581.6 345.5V355.5 M583.2 345.5V355.5 M584.8 345.5V355.5 M586.4 345.5V355.5 M588.0 345.5V355.5 M589.6 345.5V355.5 M591.2 345.5V355.5 M592.8 345.5V355.5 M594.4 345.5V355.5 M596.0 345.5V355.5 M597.6 345.5V355.5 M599.2 345.5V355.5 M600.8 345.5V355.5 M602.4 345.5V355.5 M604.0 345.5V355.5 M605.6 345.5V355.5 M607.2 345.5V355.5 M608.8 345.5V355.5 M610.4 345.5V355.5 M612.0 345.5V355.5 M613.6 345.5V355.5 M615.2 345.5V355.5 M616.8 345.5V355.5 M618.4 345.5V355.5 M620.0 345.5V355.5 M621.6 345.5V355.5 M623.2 345.5V355.5 M624.8 345.5V355.5 M626.4 345.5V355.5 M628.0 345.5V355.5 M629.6 345.5V355.5 M631.2 345.5V355.5 M632.8 345.5V355.5 M634.4 345.5V355.5 M636.0 345.5V355.5 M637.6 345.5V355.5 M639.2 345.5V355.5 M640.8 345.5V355.5 M642.4 345.5V355.5 M644.0 345.5V355.5 M645.6 345.5V355.5 M647.2 345.5V355.5 M648.8 345.5V355.5 M650.4 345.5V355.5 M652.0 345.5V355.5 M653.6 345.5V355.5 M655.2 345.5V355.5 M656.8 345.5V355.5 M658.4 345.5V355.5 M660.0 345.5V355.5 M661.6 345.5V355.5 M663.2 345.5V355.5 M664.8 345.5V355.5 M666.4 345.5V355.5 M668.0 345.5V355.5 M669.6 345.5V355.5 M671.2 345.5V355.5 M672.8 345.5V355.5 M674.4 345.5V355.5 M676.0 345.5V355.5 M677.6 345.5V355.5 M679.2 345.5V355.5 M680.8 345.5V355.5 M682.4 345.5V355.5 M684.0 345.5V355.5 M685.6 345.5V355.5 M687.2 345.5V355.5 M688.8 345.5V355.5 M690.4 345.5V355.5 M692.0 345.5V355.5 M693.6 345.5V355.5 M695.2 345.5V355.5 M696.8 345.5V355.5 M698.4 345.5V355.5 M700.0 345.5V355.5 M701.6 345.5V355.5 M703.2 345.5V355.5 M704.8 345.5V355.5 M706.4 345.5V355.5 M708.0 345.5V355.5 M709.6 345.5V355.5 M711.2 345.5V355.5 M712.8 345.5V355.5 M714.4 345.5V355.5 M716.0 345.5V355.5" stroke="#6f6f6f" stroke-width="0.8"/>
<rect x="304" y="337" width="4.5" height="19" fill="#777"/>
<rect x="337" y="336.5" width="20" height="9" fill="#fff"/>
<path d="M350.2 337.5h0.8v0.8h-0.8z M351.7 339.0h0.8v0.8h-0.8z M338.5 339.1h0.8v0.8h-0.8z M351.6 338.6h0.8v0.8h-0.8z M351.8 344.8h0.8v0.8h-0.8z M346.9 340.1h0.8v0.8h-0.8z M346.6 342.5h0.8v0.8h-0.8z M352.3 341.9h0.8v0.8h-0.8z M349.9 337.6h0.8v0.8h-0.8z M339.9 339.0h0.8v0.8h-0.8z M351.9 339.4h0.8v0.8h-0.8z M348.4 337.1h0.8v0.8h-0.8z M338.2 339.2h0.8v0.8h-0.8z M350.4 342.5h0.8v0.8h-0.8z M350.5 339.3h0.8v0.8h-0.8z M347.3 340.7h0.8v0.8h-0.8z M346.3 337.9h0.8v0.8h-0.8z M354.9 338.6h0.8v0.8h-0.8z M356.6 344.5h0.8v0.8h-0.8z M337.4 340.7h0.8v0.8h-0.8z M353.4 344.7h0.8v0.8h-0.8z M346.0 339.1h0.8v0.8h-0.8z M341.2 344.6h0.8v0.8h-0.8z M341.2 341.7h0.8v0.8h-0.8z M339.8 341.2h0.8v0.8h-0.8z M356.1 338.1h0.8v0.8h-0.8z" fill="#777"/>
<rect x="337" y="336.5" width="20" height="8.5" stroke="#00e600" stroke-width="0.9" fill="none"/>
<line x1="337" y1="336.3" x2="357" y2="336.3" stroke="#ff2020" stroke-width="1.2"/>
<rect x="446.5" y="336.5" width="20" height="9" fill="#fff"/>
<path d="M462.9 341.1h0.8v0.8h-0.8z M464.2 342.6h0.8v0.8h-0.8z M451.1 344.2h0.8v0.8h-0.8z M456.2 337.2h0.8v0.8h-0.8z M446.6 340.9h0.8v0.8h-0.8z M455.5 339.4h0.8v0.8h-0.8z M449.3 339.8h0.8v0.8h-0.8z M452.8 343.7h0.8v0.8h-0.8z M446.5 343.0h0.8v0.8h-0.8z M463.3 338.0h0.8v0.8h-0.8z M465.0 342.7h0.8v0.8h-0.8z M464.5 339.3h0.8v0.8h-0.8z M453.9 340.1h0.8v0.8h-0.8z M466.5 341.7h0.8v0.8h-0.8z M453.7 340.4h0.8v0.8h-0.8z M452.0 337.4h0.8v0.8h-0.8z M448.5 343.7h0.8v0.8h-0.8z M452.2 344.5h0.8v0.8h-0.8z M451.5 339.1h0.8v0.8h-0.8z M456.7 338.5h0.8v0.8h-0.8z M454.0 344.6h0.8v0.8h-0.8z M464.2 343.5h0.8v0.8h-0.8z M459.1 344.3h0.8v0.8h-0.8z M465.3 341.4h0.8v0.8h-0.8z M460.9 337.4h0.8v0.8h-0.8z M461.1 340.6h0.8v0.8h-0.8z" fill="#777"/>
<rect x="446.5" y="336.5" width="20" height="8.5" stroke="#00e600" stroke-width="0.9" fill="none"/>
<line x1="446.5" y1="336.3" x2="466.5" y2="336.3" stroke="#ff2020" stroke-width="1.2"/>
<rect x="556" y="336.5" width="20" height="9" fill="#fff"/>
<path d="M571.1 342.2h0.8v0.8h-0.8z M561.7 337.4h0.8v0.8h-0.8z M574.5 338.0h0.8v0.8h-0.8z M565.4 339.7h0.8v0.8h-0.8z M562.0 342.9h0.8v0.8h-0.8z M575.5 339.1h0.8v0.8h-0.8z M569.1 339.4h0.8v0.8h-0.8z M567.1 340.2h0.8v0.8h-0.8z M559.3 338.3h0.8v0.8h-0.8z M560.2 344.2h0.8v0.8h-0.8z M565.9 338.8h0.8v0.8h-0.8z M574.1 345.0h0.8v0.8h-0.8z M565.0 338.1h0.8v0.8h-0.8z M559.8 337.7h0.8v0.8h-0.8z M562.8 337.7h0.8v0.8h-0.8z M560.8 339.1h0.8v0.8h-0.8z M567.4 344.1h0.8v0.8h-0.8z M571.0 340.3h0.8v0.8h-0.8z M564.3 341.2h0.8v0.8h-0.8z M563.5 339.7h0.8v0.8h-0.8z M557.2 339.2h0.8v0.8h-0.8z M575.4 338.0h0.8v0.8h-0.8z M566.1 342.0h0.8v0.8h-0.8z M573.3 338.7h0.8v0.8h-0.8z M561.4 339.0h0.8v0.8h-0.8z M564.0 340.6h0.8v0.8h-0.8z" fill="#777"/>
<rect x="556" y="336.5" width="20" height="8.5" stroke="#00e600" stroke-width="0.9" fill="none"/>
<line x1="556" y1="336.3" x2="576" y2="336.3" stroke="#ff2020" stroke-width="1.2"/>
<line x1="258" y1="352.7" x2="291" y2="352.7" stroke="#ff2020" stroke-width="1.4"/>
<line x1="258" y1="356" x2="285" y2="356" stroke="#1f1fff" stroke-width="1.4"/>
<rect x="291" y="355.5" width="430" height="6" fill="#fff"/>
<path d="M701.2 361.0h0.8v0.8h-0.8z M666.3 355.6h0.8v0.8h-0.8z M304.9 360.1h0.8v0.8h-0.8z M676.1 358.6h0.8v0.8h-0.8z M543.5 355.5h0.8v0.8h-0.8z M459.4 361.5h0.8v0.8h-0.8z M646.0 361.1h0.8v0.8h-0.8z M709.1 357.1h0.8v0.8h-0.8z M337.9 356.5h0.8v0.8h-0.8z M515.6 359.9h0.8v0.8h-0.8z M695.8 360.2h0.8v0.8h-0.8z M569.4 360.5h0.8v0.8h-0.8z M487.6 359.1h0.8v0.8h-0.8z M308.0 360.6h0.8v0.8h-0.8z M391.0 361.5h0.8v0.8h-0.8z M568.6 357.5h0.8v0.8h-0.8z M346.0 357.1h0.8v0.8h-0.8z M564.6 360.0h0.8v0.8h-0.8z M339.2 356.0h0.8v0.8h-0.8z M516.5 359.3h0.8v0.8h-0.8z M457.9 357.0h0.8v0.8h-0.8z M549.5 355.6h0.8v0.8h-0.8z M420.7 358.5h0.8v0.8h-0.8z M703.3 359.7h0.8v0.8h-0.8z M671.0 358.6h0.8v0.8h-0.8z M392.0 357.1h0.8v0.8h-0.8z M704.1 360.1h0.8v0.8h-0.8z M423.2 355.6h0.8v0.8h-0.8z M505.3 359.9h0.8v0.8h-0.8z M471.6 357.2h0.8v0.8h-0.8z M578.0 361.5h0.8v0.8h-0.8z M388.5 355.7h0.8v0.8h-0.8z M436.4 358.2h0.8v0.8h-0.8z M584.5 356.8h0.8v0.8h-0.8z M633.7 360.3h0.8v0.8h-0.8z M508.1 356.8h0.8v0.8h-0.8z M708.0 357.5h0.8v0.8h-0.8z M643.6 357.0h0.8v0.8h-0.8z M386.2 360.4h0.8v0.8h-0.8z M417.8 361.7h0.8v0.8h-0.8z M504.2 356.7h0.8v0.8h-0.8z M387.0 358.2h0.8v0.8h-0.8z M577.1 361.7h0.8v0.8h-0.8z M353.9 358.1h0.8v0.8h-0.8z M382.6 361.8h0.8v0.8h-0.8z M352.0 355.8h0.8v0.8h-0.8z M316.9 358.1h0.8v0.8h-0.8z M677.2 361.2h0.8v0.8h-0.8z M606.1 362.0h0.8v0.8h-0.8z M691.6 357.6h0.8v0.8h-0.8z M370.8 361.6h0.8v0.8h-0.8z M611.9 355.7h0.8v0.8h-0.8z M576.7 358.0h0.8v0.8h-0.8z M451.8 357.7h0.8v0.8h-0.8z M363.8 355.5h0.8v0.8h-0.8z M411.3 357.8h0.8v0.8h-0.8z M701.9 356.3h0.8v0.8h-0.8z M705.6 356.8h0.8v0.8h-0.8z M444.4 360.8h0.8v0.8h-0.8z M644.5 358.3h0.8v0.8h-0.8z M312.2 358.6h0.8v0.8h-0.8z M451.3 361.5h0.8v0.8h-0.8z M374.0 357.9h0.8v0.8h-0.8z M676.7 355.7h0.8v0.8h-0.8z M467.6 360.8h0.8v0.8h-0.8z M620.7 355.8h0.8v0.8h-0.8z M306.0 355.9h0.8v0.8h-0.8z M686.6 357.2h0.8v0.8h-0.8z M612.3 361.3h0.8v0.8h-0.8z M436.8 357.3h0.8v0.8h-0.8z M702.8 359.5h0.8v0.8h-0.8z M403.7 360.2h0.8v0.8h-0.8z M427.1 357.3h0.8v0.8h-0.8z M292.6 360.4h0.8v0.8h-0.8z M685.1 359.6h0.8v0.8h-0.8z M696.6 355.7h0.8v0.8h-0.8z M391.6 358.6h0.8v0.8h-0.8z M702.4 361.7h0.8v0.8h-0.8z M457.2 357.1h0.8v0.8h-0.8z M475.9 358.7h0.8v0.8h-0.8z M690.1 356.7h0.8v0.8h-0.8z M636.1 360.3h0.8v0.8h-0.8z M644.8 360.5h0.8v0.8h-0.8z M552.1 357.6h0.8v0.8h-0.8z M428.4 357.9h0.8v0.8h-0.8z M627.4 356.0h0.8v0.8h-0.8z M375.8 360.4h0.8v0.8h-0.8z M397.3 355.9h0.8v0.8h-0.8z M305.6 359.1h0.8v0.8h-0.8z M431.1 361.9h0.8v0.8h-0.8z M670.9 361.9h0.8v0.8h-0.8z M404.9 356.0h0.8v0.8h-0.8z M332.5 358.7h0.8v0.8h-0.8z M596.2 358.4h0.8v0.8h-0.8z M391.7 358.2h0.8v0.8h-0.8z M557.7 359.9h0.8v0.8h-0.8z M612.6 361.0h0.8v0.8h-0.8z M576.7 356.3h0.8v0.8h-0.8z M652.6 357.4h0.8v0.8h-0.8z M534.8 357.9h0.8v0.8h-0.8z M608.4 356.8h0.8v0.8h-0.8z M397.4 357.1h0.8v0.8h-0.8z M356.9 361.2h0.8v0.8h-0.8z M539.7 357.6h0.8v0.8h-0.8z M461.3 362.0h0.8v0.8h-0.8z M509.1 357.0h0.8v0.8h-0.8z M638.6 359.7h0.8v0.8h-0.8z M717.1 356.2h0.8v0.8h-0.8z M495.1 360.8h0.8v0.8h-0.8z M652.4 361.4h0.8v0.8h-0.8z M308.4 357.4h0.8v0.8h-0.8z M342.3 356.7h0.8v0.8h-0.8z M709.4 359.3h0.8v0.8h-0.8z M691.0 357.9h0.8v0.8h-0.8z M663.4 358.4h0.8v0.8h-0.8z M402.8 360.6h0.8v0.8h-0.8z M697.7 356.2h0.8v0.8h-0.8z M547.3 359.5h0.8v0.8h-0.8z M384.6 357.9h0.8v0.8h-0.8z M351.8 356.8h0.8v0.8h-0.8z M400.6 359.4h0.8v0.8h-0.8z M571.2 356.8h0.8v0.8h-0.8z M295.9 357.6h0.8v0.8h-0.8z M582.7 356.7h0.8v0.8h-0.8z M425.2 356.8h0.8v0.8h-0.8z M633.0 359.1h0.8v0.8h-0.8z M318.2 356.2h0.8v0.8h-0.8z M461.0 359.1h0.8v0.8h-0.8z M565.8 356.1h0.8v0.8h-0.8z M361.4 360.0h0.8v0.8h-0.8z M467.2 357.3h0.8v0.8h-0.8z M423.3 361.7h0.8v0.8h-0.8z M425.3 359.2h0.8v0.8h-0.8z M444.6 358.2h0.8v0.8h-0.8z M662.6 362.0h0.8v0.8h-0.8z M447.4 356.8h0.8v0.8h-0.8z M604.1 356.8h0.8v0.8h-0.8z M293.5 361.4h0.8v0.8h-0.8z M473.2 360.8h0.8v0.8h-0.8z M465.7 361.2h0.8v0.8h-0.8z M489.2 356.6h0.8v0.8h-0.8z M297.4 359.1h0.8v0.8h-0.8z M566.5 361.4h0.8v0.8h-0.8z M329.3 359.5h0.8v0.8h-0.8z M450.5 358.8h0.8v0.8h-0.8z M353.7 357.3h0.8v0.8h-0.8z M515.1 361.5h0.8v0.8h-0.8z M337.8 358.7h0.8v0.8h-0.8z M637.1 361.8h0.8v0.8h-0.8z M375.9 356.3h0.8v0.8h-0.8z M696.5 361.8h0.8v0.8h-0.8z M498.6 355.8h0.8v0.8h-0.8z M689.3 358.0h0.8v0.8h-0.8z M679.8 359.5h0.8v0.8h-0.8z M645.6 356.5h0.8v0.8h-0.8z M628.9 356.9h0.8v0.8h-0.8z M464.9 361.0h0.8v0.8h-0.8z M647.6 356.7h0.8v0.8h-0.8z M384.8 358.1h0.8v0.8h-0.8z M513.7 358.0h0.8v0.8h-0.8z M343.9 357.1h0.8v0.8h-0.8z M602.7 361.3h0.8v0.8h-0.8z M308.7 359.2h0.8v0.8h-0.8z M616.7 355.7h0.8v0.8h-0.8z M651.4 356.3h0.8v0.8h-0.8z M548.8 359.1h0.8v0.8h-0.8z M560.6 357.5h0.8v0.8h-0.8z M471.6 359.3h0.8v0.8h-0.8z M474.1 359.8h0.8v0.8h-0.8z M483.1 358.3h0.8v0.8h-0.8z M301.1 359.5h0.8v0.8h-0.8z M501.5 357.0h0.8v0.8h-0.8z M619.3 360.6h0.8v0.8h-0.8z M488.1 356.7h0.8v0.8h-0.8z M494.5 356.2h0.8v0.8h-0.8z M346.2 358.3h0.8v0.8h-0.8z M330.4 358.4h0.8v0.8h-0.8z M510.4 355.8h0.8v0.8h-0.8z M564.7 356.0h0.8v0.8h-0.8z M606.4 360.6h0.8v0.8h-0.8z M510.9 355.9h0.8v0.8h-0.8z M507.7 358.0h0.8v0.8h-0.8z M699.9 356.4h0.8v0.8h-0.8z M659.5 362.0h0.8v0.8h-0.8z M605.8 360.8h0.8v0.8h-0.8z M374.3 361.9h0.8v0.8h-0.8z M502.5 361.7h0.8v0.8h-0.8z M684.9 356.6h0.8v0.8h-0.8z M630.0 361.5h0.8v0.8h-0.8z M319.2 357.8h0.8v0.8h-0.8z M616.2 356.5h0.8v0.8h-0.8z M676.5 357.3h0.8v0.8h-0.8z M641.7 356.4h0.8v0.8h-0.8z M507.0 361.5h0.8v0.8h-0.8z M380.6 357.2h0.8v0.8h-0.8z M508.6 357.6h0.8v0.8h-0.8z M306.8 356.7h0.8v0.8h-0.8z M360.3 361.6h0.8v0.8h-0.8z M583.3 361.3h0.8v0.8h-0.8z M363.6 360.6h0.8v0.8h-0.8z M340.5 358.9h0.8v0.8h-0.8z M564.6 357.8h0.8v0.8h-0.8z M666.4 359.1h0.8v0.8h-0.8z M540.4 361.2h0.8v0.8h-0.8z M336.0 362.0h0.8v0.8h-0.8z M561.8 358.1h0.8v0.8h-0.8z M634.0 357.2h0.8v0.8h-0.8z M716.9 359.3h0.8v0.8h-0.8z M445.9 360.5h0.8v0.8h-0.8z M481.2 356.6h0.8v0.8h-0.8z M610.7 355.8h0.8v0.8h-0.8z M643.5 357.1h0.8v0.8h-0.8z M565.9 361.9h0.8v0.8h-0.8z M542.9 359.8h0.8v0.8h-0.8z M425.4 355.5h0.8v0.8h-0.8z M305.5 356.5h0.8v0.8h-0.8z M555.9 358.3h0.8v0.8h-0.8z M511.5 361.3h0.8v0.8h-0.8z M347.8 357.0h0.8v0.8h-0.8z M571.8 355.6h0.8v0.8h-0.8z M292.1 357.8h0.8v0.8h-0.8z M336.7 357.8h0.8v0.8h-0.8z M387.4 359.3h0.8v0.8h-0.8z M544.3 356.8h0.8v0.8h-0.8z M559.3 358.6h0.8v0.8h-0.8z M348.9 361.6h0.8v0.8h-0.8z M395.7 356.5h0.8v0.8h-0.8z M332.2 359.6h0.8v0.8h-0.8z M665.7 360.6h0.8v0.8h-0.8z M463.8 357.2h0.8v0.8h-0.8z M295.9 359.7h0.8v0.8h-0.8z M532.8 357.8h0.8v0.8h-0.8z M568.6 358.4h0.8v0.8h-0.8z M694.0 360.3h0.8v0.8h-0.8z M397.9 361.4h0.8v0.8h-0.8z M309.9 359.0h0.8v0.8h-0.8z M465.6 357.0h0.8v0.8h-0.8z M316.1 360.6h0.8v0.8h-0.8z M296.3 359.1h0.8v0.8h-0.8z M695.6 356.4h0.8v0.8h-0.8z M376.8 359.5h0.8v0.8h-0.8z M509.0 359.7h0.8v0.8h-0.8z M640.8 356.6h0.8v0.8h-0.8z M424.0 357.5h0.8v0.8h-0.8z M311.9 361.3h0.8v0.8h-0.8z M627.7 360.2h0.8v0.8h-0.8z M293.7 361.0h0.8v0.8h-0.8z M611.4 358.5h0.8v0.8h-0.8z M610.0 358.4h0.8v0.8h-0.8z M388.2 356.2h0.8v0.8h-0.8z M390.9 355.8h0.8v0.8h-0.8z M435.3 360.4h0.8v0.8h-0.8z M589.9 361.0h0.8v0.8h-0.8z M597.0 357.2h0.8v0.8h-0.8z M529.1 358.3h0.8v0.8h-0.8z M630.0 358.9h0.8v0.8h-0.8z M405.1 359.7h0.8v0.8h-0.8z M706.0 356.9h0.8v0.8h-0.8z M669.4 355.6h0.8v0.8h-0.8z M403.0 357.0h0.8v0.8h-0.8z" fill="#777"/>
<line x1="285" y1="356.5" x2="726" y2="356.5" stroke="#1f1fff" stroke-width="1.3"/>
<line x1="297" y1="361.5" x2="505" y2="361.5" stroke="#1f1fff" stroke-width="1.3"/>
<line x1="516" y1="361.5" x2="716" y2="361.5" stroke="#1f1fff" stroke-width="1.3"/>
<path d="M285 356 V374 H297 V361" stroke="#1f1fff" stroke-width="1.3" fill="none"/>
<path d="M505 361 V374 H516 V361" stroke="#1f1fff" stroke-width="1.3" fill="none"/>
<path d="M293.4 372.4h0.8v0.8h-0.8z M293.5 365.6h0.8v0.8h-0.8z M294.8 365.6h0.8v0.8h-0.8z M288.4 372.0h0.8v0.8h-0.8z M292.3 369.6h0.8v0.8h-0.8z M292.7 372.8h0.8v0.8h-0.8z M290.7 371.2h0.8v0.8h-0.8z M293.0 371.4h0.8v0.8h-0.8z M290.4 370.0h0.8v0.8h-0.8z M291.7 365.4h0.8v0.8h-0.8z M288.1 368.8h0.8v0.8h-0.8z M286.8 372.0h0.8v0.8h-0.8z M287.4 362.3h0.8v0.8h-0.8z M287.1 372.2h0.8v0.8h-0.8z M289.4 363.6h0.8v0.8h-0.8z M286.3 362.5h0.8v0.8h-0.8z M292.9 369.0h0.8v0.8h-0.8z M293.0 370.1h0.8v0.8h-0.8z M286.7 368.5h0.8v0.8h-0.8z M289.6 371.0h0.8v0.8h-0.8z" fill="#666"/>
<path d="M513.4 371.8h0.8v0.8h-0.8z M506.6 371.5h0.8v0.8h-0.8z M514.2 372.4h0.8v0.8h-0.8z M507.0 364.3h0.8v0.8h-0.8z M507.0 362.4h0.8v0.8h-0.8z M513.6 370.9h0.8v0.8h-0.8z M511.7 371.1h0.8v0.8h-0.8z M511.7 365.2h0.8v0.8h-0.8z M506.9 363.1h0.8v0.8h-0.8z M512.8 364.3h0.8v0.8h-0.8z M508.9 366.7h0.8v0.8h-0.8z M506.2 364.8h0.8v0.8h-0.8z M508.5 369.9h0.8v0.8h-0.8z M509.3 365.5h0.8v0.8h-0.8z M514.7 367.5h0.8v0.8h-0.8z M513.7 368.8h0.8v0.8h-0.8z" fill="#666"/>
<rect x="292" y="349" width="6" height="7" stroke="#ff2020" stroke-width="0.9" fill="#888"/>
<rect x="712" y="340" width="6" height="15" fill="#777"/>
<path d="M716 345 H726 V351 H738 V361 H722 V356" stroke="#1f1fff" stroke-width="1.2" fill="none"/>
<line x1="720" y1="344.5" x2="805" y2="344.5" stroke="#ff2020" stroke-width="1.5"/>
<line x1="738.7" y1="274" x2="738.7" y2="344" stroke="#ff2020" stroke-width="1.2"/>
<line x1="783.3" y1="274" x2="783.3" y2="344" stroke="#ff2020" stroke-width="1.2"/>
<rect x="738" y="346" width="67" height="4" fill="#fff"/>
<path d="M740.1 347.7h0.8v0.8h-0.8z M767.2 349.1h0.8v0.8h-0.8z M761.2 348.8h0.8v0.8h-0.8z M774.0 346.9h0.8v0.8h-0.8z M795.8 346.4h0.8v0.8h-0.8z M792.9 346.7h0.8v0.8h-0.8z M738.1 346.8h0.8v0.8h-0.8z M789.1 349.9h0.8v0.8h-0.8z M738.3 348.0h0.8v0.8h-0.8z M770.9 349.2h0.8v0.8h-0.8z M750.4 348.0h0.8v0.8h-0.8z M761.3 349.3h0.8v0.8h-0.8z M755.5 349.8h0.8v0.8h-0.8z M757.0 346.9h0.8v0.8h-0.8z M784.9 348.0h0.8v0.8h-0.8z M745.4 348.5h0.8v0.8h-0.8z M743.4 349.2h0.8v0.8h-0.8z M784.7 349.1h0.8v0.8h-0.8z M780.1 347.4h0.8v0.8h-0.8z M764.9 347.6h0.8v0.8h-0.8z M797.7 346.3h0.8v0.8h-0.8z M797.5 346.1h0.8v0.8h-0.8z M751.8 347.1h0.8v0.8h-0.8z M798.4 348.0h0.8v0.8h-0.8z M763.4 349.5h0.8v0.8h-0.8z M753.6 347.8h0.8v0.8h-0.8z M773.6 349.0h0.8v0.8h-0.8z M788.5 348.6h0.8v0.8h-0.8z M761.3 347.3h0.8v0.8h-0.8z M748.4 349.4h0.8v0.8h-0.8z M782.4 349.0h0.8v0.8h-0.8z M749.4 347.8h0.8v0.8h-0.8z M789.8 348.3h0.8v0.8h-0.8z M746.4 347.8h0.8v0.8h-0.8z M797.3 347.0h0.8v0.8h-0.8z M750.8 347.2h0.8v0.8h-0.8z M785.1 349.4h0.8v0.8h-0.8z M748.4 346.6h0.8v0.8h-0.8z M754.6 347.3h0.8v0.8h-0.8z M773.0 346.6h0.8v0.8h-0.8z M760.0 346.8h0.8v0.8h-0.8z M803.3 348.9h0.8v0.8h-0.8z M744.8 349.8h0.8v0.8h-0.8z M744.8 347.5h0.8v0.8h-0.8z M803.9 349.2h0.8v0.8h-0.8z M787.1 347.7h0.8v0.8h-0.8z M751.1 348.6h0.8v0.8h-0.8z M745.2 346.8h0.8v0.8h-0.8z M764.0 346.1h0.8v0.8h-0.8z M764.7 349.2h0.8v0.8h-0.8z M784.5 348.0h0.8v0.8h-0.8z M780.4 347.9h0.8v0.8h-0.8z M747.5 348.4h0.8v0.8h-0.8z M765.1 349.0h0.8v0.8h-0.8z M798.8 347.7h0.8v0.8h-0.8z M776.5 349.0h0.8v0.8h-0.8z M766.2 346.9h0.8v0.8h-0.8z M786.4 349.5h0.8v0.8h-0.8z M789.9 348.8h0.8v0.8h-0.8z M795.1 348.7h0.8v0.8h-0.8z" fill="#777"/>
<line x1="738" y1="350.5" x2="805" y2="350.5" stroke="#1f1fff" stroke-width="1.2"/>
<line x1="297" y1="372.5" x2="722" y2="372.5" stroke="#7d7d7d" stroke-width="0.9"/>
<line x1="297" y1="369" x2="297" y2="375" stroke="#7d7d7d" stroke-width="0.8"/>
<line x1="308" y1="369" x2="308" y2="375" stroke="#7d7d7d" stroke-width="0.8"/>
<line x1="333" y1="369" x2="333" y2="375" stroke="#7d7d7d" stroke-width="0.8"/>
<line x1="343" y1="369" x2="343" y2="375" stroke="#7d7d7d" stroke-width="0.8"/>
<line x1="372" y1="369" x2="372" y2="375" stroke="#7d7d7d" stroke-width="0.8"/>
<line x1="392" y1="369" x2="392" y2="375" stroke="#7d7d7d" stroke-width="0.8"/>
<line x1="431" y1="369" x2="431" y2="375" stroke="#7d7d7d" stroke-width="0.8"/>
<line x1="452" y1="369" x2="452" y2="375" stroke="#7d7d7d" stroke-width="0.8"/>
<line x1="465" y1="369" x2="465" y2="375" stroke="#7d7d7d" stroke-width="0.8"/>
<line x1="483" y1="369" x2="483" y2="375" stroke="#7d7d7d" stroke-width="0.8"/>
<line x1="516" y1="369" x2="516" y2="375" stroke="#7d7d7d" stroke-width="0.8"/>
<line x1="561" y1="369" x2="561" y2="375" stroke="#7d7d7d" stroke-width="0.8"/>
<line x1="578" y1="369" x2="578" y2="375" stroke="#7d7d7d" stroke-width="0.8"/>
<line x1="596" y1="369" x2="596" y2="375" stroke="#7d7d7d" stroke-width="0.8"/>
<line x1="650" y1="369" x2="650" y2="375" stroke="#7d7d7d" stroke-width="0.8"/>
<line x1="712" y1="369" x2="712" y2="375" stroke="#7d7d7d" stroke-width="0.8"/>
<line x1="722" y1="369" x2="722" y2="375" stroke="#7d7d7d" stroke-width="0.8"/>
<line x1="297" y1="374.8" x2="722" y2="374.8" stroke="#00e8e8" stroke-width="1.2"/>
<text x="300" y="372.2" font-size="4.5" fill="#00e600" font-family="Liberation Sans" font-weight="bold" textLength="7" lengthAdjust="spacingAndGlyphs">H5</text>
<text x="310" y="372.2" font-size="4.5" fill="#00e600" font-family="Liberation Sans" font-weight="bold" textLength="7" lengthAdjust="spacingAndGlyphs">3W</text>
<text x="336" y="372.2" font-size="4.5" fill="#00e600" font-family="Liberation Sans" font-weight="bold" textLength="9" lengthAdjust="spacingAndGlyphs">SG2</text>
<text x="352" y="372.2" font-size="4.5" fill="#00e600" font-family="Liberation Sans" font-weight="bold" textLength="10" lengthAdjust="spacingAndGlyphs">R1LS</text>
<text x="387" y="372.2" font-size="4.5" fill="#00e600" font-family="Liberation Sans" font-weight="bold" textLength="12" lengthAdjust="spacingAndGlyphs">365B2</text>
<text x="437" y="372.2" font-size="4.5" fill="#00e600" font-family="Liberation Sans" font-weight="bold" textLength="9" lengthAdjust="spacingAndGlyphs">9MW</text>
<text x="455" y="372.2" font-size="4.5" fill="#00e600" font-family="Liberation Sans" font-weight="bold" textLength="9" lengthAdjust="spacingAndGlyphs">A07</text>
<text x="470" y="372.2" font-size="4.5" fill="#00e600" font-family="Liberation Sans" font-weight="bold" textLength="12" lengthAdjust="spacingAndGlyphs">GCSOL</text>
<text x="525" y="372.2" font-size="4.5" fill="#00e600" font-family="Liberation Sans" font-weight="bold" textLength="10" lengthAdjust="spacingAndGlyphs">N9YG</text>
<text x="567" y="372.2" font-size="4.5" fill="#00e600" font-family="Liberation Sans" font-weight="bold" textLength="9" lengthAdjust="spacingAndGlyphs">5O6</text>
<text x="610" y="372.2" font-size="4.5" fill="#00e600" font-family="Liberation Sans" font-weight="bold" textLength="12" lengthAdjust="spacingAndGlyphs">8BZ9X</text>
<text x="668" y="372.2" font-size="4.5" fill="#00e600" font-family="Liberation Sans" font-weight="bold" textLength="12" lengthAdjust="spacingAndGlyphs">25OM1</text>
<text x="712" y="372.2" font-size="4.5" fill="#00e600" font-family="Liberation Sans" font-weight="bold" textLength="8" lengthAdjust="spacingAndGlyphs">8HY</text>
<text x="299" y="382.1" font-size="4.4" fill="#00e600" font-family="Liberation Sans" font-weight="bold" textLength="8" lengthAdjust="spacingAndGlyphs">DST</text>
<text x="713" y="382.1" font-size="4.4" fill="#00e600" font-family="Liberation Sans" font-weight="bold" textLength="8" lengthAdjust="spacingAndGlyphs">01D</text>
<line x1="291.4" y1="416.4" x2="730.4" y2="416.4" stroke="#7d7d7d" stroke-width="1"/>
<line x1="291.4" y1="413.4" x2="291.4" y2="419.4" stroke="#7d7d7d" stroke-width="0.9"/>
<path d="M289.4 418.4 L293.4 414.4" stroke="#1f1fff" stroke-width="1"/>
<line x1="431.3" y1="413.4" x2="431.3" y2="419.4" stroke="#7d7d7d" stroke-width="0.9"/>
<path d="M429.3 418.4 L433.3 414.4" stroke="#1f1fff" stroke-width="1"/>
<line x1="510.7" y1="413.4" x2="510.7" y2="419.4" stroke="#7d7d7d" stroke-width="0.9"/>
<path d="M508.7 418.4 L512.7 414.4" stroke="#1f1fff" stroke-width="1"/>
<line x1="650.5" y1="413.4" x2="650.5" y2="419.4" stroke="#7d7d7d" stroke-width="0.9"/>
<path d="M648.5 418.4 L652.5 414.4" stroke="#1f1fff" stroke-width="1"/>
<line x1="730.4" y1="413.4" x2="730.4" y2="419.4" stroke="#7d7d7d" stroke-width="0.9"/>
<path d="M728.4 418.4 L732.4 414.4" stroke="#1f1fff" stroke-width="1"/>
<text x="355" y="414.7" font-size="4.5" fill="#00e600" font-family="Liberation Sans" font-weight="bold" textLength="9" lengthAdjust="spacingAndGlyphs">AE2</text>
<text x="466" y="414.7" font-size="4.5" fill="#00e600" font-family="Liberation Sans" font-weight="bold" textLength="9" lengthAdjust="spacingAndGlyphs">2YS</text>
<text x="575" y="414.7" font-size="4.5" fill="#00e600" font-family="Liberation Sans" font-weight="bold" textLength="9" lengthAdjust="spacingAndGlyphs">GPV</text>
<text x="686" y="414.7" font-size="4.5" fill="#00e600" font-family="Liberation Sans" font-weight="bold" textLength="9" lengthAdjust="spacingAndGlyphs">19P</text>
<circle cx="291.4" cy="430.7" r="8.5" fill="none" stroke="#ffff00" stroke-width="1.3"/>
<text x="291.4" y="434.7" font-size="11" fill="#1f1fff" text-anchor="middle" font-family="Liberation Sans" textLength="6" lengthAdjust="spacingAndGlyphs">C</text>
<circle cx="431.3" cy="430.7" r="8.5" fill="none" stroke="#ffff00" stroke-width="1.3"/>
<text x="431.3" y="434.7" font-size="11" fill="#1f1fff" text-anchor="middle" font-family="Liberation Sans" textLength="6" lengthAdjust="spacingAndGlyphs">D</text>
<circle cx="510.7" cy="430.7" r="8.5" fill="none" stroke="#ffff00" stroke-width="1.3"/>
<text x="510.7" y="434.7" font-size="11" fill="#1f1fff" text-anchor="middle" font-family="Liberation Sans" textLength="6" lengthAdjust="spacingAndGlyphs">E</text>
<circle cx="650.5" cy="430.7" r="8.5" fill="none" stroke="#ffff00" stroke-width="1.3"/>
<text x="650.5" y="434.7" font-size="11" fill="#1f1fff" text-anchor="middle" font-family="Liberation Sans" textLength="6" lengthAdjust="spacingAndGlyphs">F</text>
<circle cx="730.4" cy="430.7" r="8.5" fill="none" stroke="#ffff00" stroke-width="1.3"/>
<text x="730.4" y="434.7" font-size="11" fill="#1f1fff" text-anchor="middle" font-family="Liberation Sans" textLength="6" lengthAdjust="spacingAndGlyphs">G</text>
<text x="236" y="313.2" font-size="4.5" fill="#00e600" font-family="Liberation Sans" font-weight="bold" textLength="33" lengthAdjust="spacingAndGlyphs">15OLIEN6PKY25</text>
<text x="236" y="317.7" font-size="4.5" fill="#00e600" font-family="Liberation Sans" font-weight="bold" textLength="31" lengthAdjust="spacingAndGlyphs">UI6YPT0S3M6A</text>
<path d="M270 310 L313 310 L320 337" stroke="#7d7d7d" stroke-width="0.9" fill="none"/>
<text x="236" y="330.2" font-size="4.5" fill="#00e600" font-family="Liberation Sans" font-weight="bold" textLength="20" lengthAdjust="spacingAndGlyphs">TYRVW673</text>
<text x="236" y="334.7" font-size="4.5" fill="#00e600" font-family="Liberation Sans" font-weight="bold" textLength="23" lengthAdjust="spacingAndGlyphs">FZKV0DFWI</text>
<text x="236" y="339.1" font-size="4.4" fill="#00e600" font-family="Liberation Sans" font-weight="bold" textLength="30" lengthAdjust="spacingAndGlyphs">9YAAOEUSGKPM</text>
<path d="M268 327 L304 327 L306 337" stroke="#7d7d7d" stroke-width="0.9" fill="none"/>
<text x="381" y="306.2" font-size="4.5" fill="#00e600" font-family="Liberation Sans" font-weight="bold" textLength="28" lengthAdjust="spacingAndGlyphs">4YKO1LFVN7O</text>
<text x="381" y="310.7" font-size="4.5" fill="#00e600" font-family="Liberation Sans" font-weight="bold" textLength="25" lengthAdjust="spacingAndGlyphs">9F4HHS2PI6</text>
<path d="M410 304 L434 304 L447 337" stroke="#7d7d7d" stroke-width="0.9" fill="none"/>
<text x="461" y="304.2" font-size="4.5" fill="#00e600" font-family="Liberation Sans" font-weight="bold" textLength="40" lengthAdjust="spacingAndGlyphs">7D65K7R7LALW57U5</text>
<path d="M503 301 L530 301 L530 327" stroke="#7d7d7d" stroke-width="0.9" fill="none"/>
<text x="587" y="306.2" font-size="4.5" fill="#00e600" font-family="Liberation Sans" font-weight="bold" textLength="28" lengthAdjust="spacingAndGlyphs">Z32EMZBBCXG</text>
<text x="587" y="310.7" font-size="4.5" fill="#00e600" font-family="Liberation Sans" font-weight="bold" textLength="30" lengthAdjust="spacingAndGlyphs">867KCO2IXGZX</text>
<path d="M585 304 L574 304 L574 336" stroke="#7d7d7d" stroke-width="0.9" fill="none"/>
<path d="M326.5 316 A5 3.5 0 0 0 336.5 316 Z" fill="#1f1fff"/>
<path d="M328.5 318.5 L331.5 320.5 L334.5 318.5 Z" fill="#ffff00"/>
<text x="327.5" y="314.0" font-size="4.2" fill="#00e600" font-family="Liberation Sans" font-weight="bold" textLength="8" lengthAdjust="spacingAndGlyphs">69O</text>
<path d="M475.4 316 A5 3.5 0 0 0 485.4 316 Z" fill="#1f1fff"/>
<path d="M477.4 318.5 L480.4 320.5 L483.4 318.5 Z" fill="#ffff00"/>
<text x="476.4" y="314.0" font-size="4.2" fill="#00e600" font-family="Liberation Sans" font-weight="bold" textLength="8" lengthAdjust="spacingAndGlyphs">U3X</text>
<path d="M593 316 A5 3.5 0 0 0 603 316 Z" fill="#1f1fff"/>
<path d="M595 318.5 L598 320.5 L601 318.5 Z" fill="#ffff00"/>
<text x="594" y="314.0" font-size="4.2" fill="#00e600" font-family="Liberation Sans" font-weight="bold" textLength="8" lengthAdjust="spacingAndGlyphs">3SD</text>
<path d="M691.5 316 A5 3.5 0 0 0 701.5 316 Z" fill="#1f1fff"/>
<path d="M693.5 318.5 L696.5 320.5 L699.5 318.5 Z" fill="#ffff00"/>
<text x="692.5" y="314.0" font-size="4.2" fill="#00e600" font-family="Liberation Sans" font-weight="bold" textLength="8" lengthAdjust="spacingAndGlyphs">UUY</text>
<path d="M341 332 A5 3.5 0 0 0 351 332 Z" fill="#1f1fff"/>
<path d="M343 334.5 L346 336.5 L349 334.5 Z" fill="#ffff00"/>
<text x="342" y="330.0" font-size="4.2" fill="#00e600" font-family="Liberation Sans" font-weight="bold" textLength="8" lengthAdjust="spacingAndGlyphs">71X</text>
<path d="M394 333.5 A5 3.5 0 0 0 404 333.5 Z" fill="#1f1fff"/>
<path d="M396 336.0 L399 338.0 L402 336.0 Z" fill="#ffff00"/>
<text x="395" y="331.5" font-size="4.2" fill="#00e600" font-family="Liberation Sans" font-weight="bold" textLength="8" lengthAdjust="spacingAndGlyphs">8T8</text>
<path d="M450.6 332 A5 3.5 0 0 0 460.6 332 Z" fill="#1f1fff"/>
<path d="M452.6 334.5 L455.6 336.5 L458.6 334.5 Z" fill="#ffff00"/>
<text x="451.6" y="330.0" font-size="4.2" fill="#00e600" font-family="Liberation Sans" font-weight="bold" textLength="8" lengthAdjust="spacingAndGlyphs">YO7</text>
<path d="M475 332 A5 3.5 0 0 0 485 332 Z" fill="#1f1fff"/>
<path d="M477 334.5 L480 336.5 L483 334.5 Z" fill="#ffff00"/>
<text x="476" y="330.0" font-size="4.2" fill="#00e600" font-family="Liberation Sans" font-weight="bold" textLength="8" lengthAdjust="spacingAndGlyphs">HXN</text>
<path d="M558 332 A5 3.5 0 0 0 568 332 Z" fill="#1f1fff"/>
<path d="M560 334.5 L563 336.5 L566 334.5 Z" fill="#ffff00"/>
<text x="559" y="330.0" font-size="4.2" fill="#00e600" font-family="Liberation Sans" font-weight="bold" textLength="8" lengthAdjust="spacingAndGlyphs">WVI</text>
<path d="M593 332 A5 3.5 0 0 0 603 332 Z" fill="#1f1fff"/>
<path d="M595 334.5 L598 336.5 L601 334.5 Z" fill="#ffff00"/>
<text x="594" y="330.0" font-size="4.2" fill="#00e600" font-family="Liberation Sans" font-weight="bold" textLength="8" lengthAdjust="spacingAndGlyphs">FC1</text>
<path d="M624 332 A5 3.5 0 0 0 634 332 Z" fill="#1f1fff"/>
<path d="M626 334.5 L629 336.5 L632 334.5 Z" fill="#ffff00"/>
<text x="625" y="330.0" font-size="4.2" fill="#00e600" font-family="Liberation Sans" font-weight="bold" textLength="8" lengthAdjust="spacingAndGlyphs">1D1</text>
<path d="M691.5 332 A5 3.5 0 0 0 701.5 332 Z" fill="#1f1fff"/>
<path d="M693.5 334.5 L696.5 336.5 L699.5 334.5 Z" fill="#ffff00"/>
<text x="692.5" y="330.0" font-size="4.2" fill="#00e600" font-family="Liberation Sans" font-weight="bold" textLength="8" lengthAdjust="spacingAndGlyphs">VGA</text>
<path d="M268 348 A5 3.5 0 0 0 278 348 Z" fill="#1f1fff"/>
<path d="M270 350.5 L273 352.5 L276 350.5 Z" fill="#ffff00"/>
<text x="269" y="346.0" font-size="4.2" fill="#00e600" font-family="Liberation Sans" font-weight="bold" textLength="8" lengthAdjust="spacingAndGlyphs">CN6</text>
<path d="M290 346.5 A5 3.5 0 0 0 300 346.5 Z" fill="#1f1fff"/>
<path d="M292 349.0 L295 351.0 L298 349.0 Z" fill="#ffff00"/>
<text x="291" y="344.5" font-size="4.2" fill="#00e600" font-family="Liberation Sans" font-weight="bold" textLength="8" lengthAdjust="spacingAndGlyphs">D80</text>
<path d="M750.6 339 A5 3.5 0 0 0 760.6 339 Z" fill="#1f1fff"/>
<path d="M752.6 341.5 L755.6 343.5 L758.6 341.5 Z" fill="#ffff00"/>
<text x="751.6" y="337.0" font-size="4.2" fill="#00e600" font-family="Liberation Sans" font-weight="bold" textLength="8" lengthAdjust="spacingAndGlyphs">KFO</text>
<text x="342" y="325.5" font-size="4.2" fill="#00e600" font-family="Liberation Sans" font-weight="bold" textLength="8" lengthAdjust="spacingAndGlyphs">C5M</text>
<text x="395" y="327.0" font-size="4.2" fill="#00e600" font-family="Liberation Sans" font-weight="bold" textLength="8" lengthAdjust="spacingAndGlyphs">GMC</text>
<text x="451.6" y="325.5" font-size="4.2" fill="#00e600" font-family="Liberation Sans" font-weight="bold" textLength="8" lengthAdjust="spacingAndGlyphs">2GA</text>
<text x="625" y="325.5" font-size="4.2" fill="#00e600" font-family="Liberation Sans" font-weight="bold" textLength="8" lengthAdjust="spacingAndGlyphs">ZIV</text>
<text x="497" y="353.1" font-size="4.4" fill="#00e600" font-family="Liberation Sans" font-weight="bold" textLength="18" lengthAdjust="spacingAndGlyphs">SVM2CWB</text>
<circle cx="346" cy="460.5" r="10" fill="#fff" stroke="#1f1fff" stroke-width="1.4"/>
<line x1="336" y1="460.5" x2="394.5" y2="460.5" stroke="#1f1fff" stroke-width="1.5"/>
<text x="346" y="459.3" font-size="8.5" fill="#1f1fff" text-anchor="middle" font-family="Liberation Sans" font-weight="bold">2</text>
<text x="339" y="465.7" font-size="5.2" fill="#00e600" font-family="Liberation Sans" font-weight="bold" textLength="14" lengthAdjust="spacingAndGlyphs">3D79C</text>
<text x="361.5" y="459.5" font-size="9" fill="#1f1fff" font-family="Liberation Sans" font-weight="bold" textLength="33" lengthAdjust="spacingAndGlyphs">POTONGAN</text>
<text x="361.5" y="465.7" font-size="4.9" fill="#00e600" font-family="Liberation Sans" font-weight="bold" textLength="28.05" lengthAdjust="spacingAndGlyphs">H214EA0K62G</text>
<rect x="876.5" y="274" width="293.5" height="124.5" stroke="#1f1fff" stroke-width="1.4" fill="none" stroke-dasharray="7 2.5 1.5 2.5"/>
<line x1="913.4" y1="274" x2="913.4" y2="424" stroke="#8c4646" stroke-width="1.1" stroke-dasharray="9 3 2 3"/>
<line x1="1077.9" y1="274" x2="1077.9" y2="424" stroke="#8c4646" stroke-width="1.1" stroke-dasharray="9 3 2 3"/>
<line x1="1132.9" y1="274" x2="1132.9" y2="424" stroke="#8c4646" stroke-width="1.1" stroke-dasharray="9 3 2 3"/>
<line x1="908" y1="274" x2="908" y2="326" stroke="#ff2020" stroke-width="1.3"/>
<line x1="919" y1="274" x2="919" y2="326" stroke="#ff2020" stroke-width="1.3"/>
<line x1="973.5" y1="274" x2="973.5" y2="337" stroke="#ff2020" stroke-width="1.3"/>
<line x1="1127" y1="274" x2="1127" y2="330" stroke="#ff2020" stroke-width="1.2"/>
<line x1="1138.5" y1="274" x2="1138.5" y2="330" stroke="#ff2020" stroke-width="1.2"/>
<line x1="1155" y1="274" x2="1155" y2="330" stroke="#ff2020" stroke-width="1.2"/>
<line x1="1019" y1="274" x2="1019" y2="337" stroke="#00e8e8" stroke-width="1.3"/>
<line x1="1027" y1="274" x2="1027" y2="337" stroke="#00e8e8" stroke-width="1.3"/>
<line x1="1074" y1="274" x2="1074" y2="337" stroke="#00e8e8" stroke-width="1.3"/>
<line x1="1082" y1="274" x2="1082" y2="337" stroke="#00e8e8" stroke-width="1.3"/>
<line x1="908" y1="374" x2="908" y2="398" stroke="#00e8e8" stroke-width="1.2"/>
<line x1="919" y1="374" x2="919" y2="398" stroke="#00e8e8" stroke-width="1.2"/>
<line x1="1127" y1="374" x2="1127" y2="398" stroke="#00e8e8" stroke-width="1.2"/>
<line x1="1139" y1="374" x2="1139" y2="398" stroke="#00e8e8" stroke-width="1.2"/>
<line x1="876" y1="374.5" x2="1170" y2="374.5" stroke="#00e8e8" stroke-width="1.3"/>
<path d="M876 327 H908 V359" stroke="#ff2020" stroke-width="1.2" fill="none"/>
<path d="M878.6 330.8h0.8v0.8h-0.8z M903.8 331.8h0.8v0.8h-0.8z M889.2 328.1h0.8v0.8h-0.8z M896.8 333.9h0.8v0.8h-0.8z M902.6 329.3h0.8v0.8h-0.8z M879.8 330.8h0.8v0.8h-0.8z M884.5 331.4h0.8v0.8h-0.8z M890.0 332.5h0.8v0.8h-0.8z M904.6 330.2h0.8v0.8h-0.8z M899.2 332.2h0.8v0.8h-0.8z M880.5 332.6h0.8v0.8h-0.8z M885.1 331.3h0.8v0.8h-0.8z M891.4 332.0h0.8v0.8h-0.8z M903.6 333.5h0.8v0.8h-0.8z M877.6 328.2h0.8v0.8h-0.8z M877.9 333.3h0.8v0.8h-0.8z M897.3 331.7h0.8v0.8h-0.8z M888.1 329.9h0.8v0.8h-0.8z M894.6 333.7h0.8v0.8h-0.8z M901.9 331.7h0.8v0.8h-0.8z M885.8 333.7h0.8v0.8h-0.8z M898.6 330.8h0.8v0.8h-0.8z M881.2 333.8h0.8v0.8h-0.8z M879.6 333.7h0.8v0.8h-0.8z M881.1 332.8h0.8v0.8h-0.8z M890.8 332.7h0.8v0.8h-0.8z M890.0 329.6h0.8v0.8h-0.8z M899.4 330.0h0.8v0.8h-0.8z M884.7 331.7h0.8v0.8h-0.8z M896.2 332.8h0.8v0.8h-0.8z M894.6 333.2h0.8v0.8h-0.8z M898.5 328.1h0.8v0.8h-0.8z M880.7 333.0h0.8v0.8h-0.8z M894.1 333.9h0.8v0.8h-0.8z M883.6 330.3h0.8v0.8h-0.8z M887.7 332.6h0.8v0.8h-0.8z M883.3 330.7h0.8v0.8h-0.8z M897.3 329.9h0.8v0.8h-0.8z M884.3 328.9h0.8v0.8h-0.8z M904.5 332.6h0.8v0.8h-0.8z M900.3 329.7h0.8v0.8h-0.8z M880.4 333.3h0.8v0.8h-0.8z M906.8 328.9h0.8v0.8h-0.8z M906.2 332.8h0.8v0.8h-0.8z M893.0 332.7h0.8v0.8h-0.8z" fill="#777"/>
<line x1="876" y1="335" x2="908" y2="335" stroke="#1f1fff" stroke-width="1.3"/>
<path d="M908 326 H919 V356" stroke="#ff2020" stroke-width="1.3" fill="none"/>
<rect x="911" y="327" width="6" height="29" stroke="#1f1fff" stroke-width="1.1" fill="none"/>
<path d="M914.0 343.0h0.8v0.8h-0.8z M914.2 341.6h0.8v0.8h-0.8z M913.3 350.1h0.8v0.8h-0.8z M915.3 355.5h0.8v0.8h-0.8z M912.9 329.6h0.8v0.8h-0.8z M913.4 347.8h0.8v0.8h-0.8z M916.6 344.4h0.8v0.8h-0.8z M911.1 338.8h0.8v0.8h-0.8z M914.2 343.0h0.8v0.8h-0.8z M913.1 329.8h0.8v0.8h-0.8z M913.4 342.6h0.8v0.8h-0.8z M912.6 351.3h0.8v0.8h-0.8z M912.9 342.2h0.8v0.8h-0.8z M912.2 334.0h0.8v0.8h-0.8z M911.6 350.6h0.8v0.8h-0.8z M912.7 344.2h0.8v0.8h-0.8z M913.2 349.8h0.8v0.8h-0.8z M916.1 334.9h0.8v0.8h-0.8z M916.5 341.8h0.8v0.8h-0.8z M916.2 338.4h0.8v0.8h-0.8z M913.8 330.3h0.8v0.8h-0.8z M912.9 328.9h0.8v0.8h-0.8z M912.7 345.0h0.8v0.8h-0.8z M911.6 333.7h0.8v0.8h-0.8z M916.2 343.8h0.8v0.8h-0.8z" fill="#666"/>
<path d="M919 346 H973 V340 H990" stroke="#ff2020" stroke-width="1.3" fill="none"/>
<rect x="930" y="334" width="5" height="22" stroke="#7d7d7d" stroke-width="1" fill="#888"/>
<path d="M935 343 L965 357 M935 357 L965 343" stroke="#ff2020" stroke-width="1.2"/>
<rect x="964" y="345" width="10" height="12" stroke="#ff2020" stroke-width="1.2" fill="none"/>
<rect x="966" y="350" width="6" height="7" fill="#888"/>
<rect x="978" y="337" width="147" height="9" fill="#fff"/>
<path d="M978 337H1125M978 345H1125M978.0 337V345M983.2 337V345M988.4 337V345M993.6 337V345M998.8 337V345M1004.0 337V345M1009.2 337V345M1014.4 337V345M1019.6 337V345M1024.8 337V345M1030.0 337V345M1035.2 337V345M1040.4 337V345M1045.6 337V345M1050.8 337V345M1056.0 337V345M1061.2 337V345M1066.4 337V345M1071.6 337V345M1076.8 337V345M1082.0 337V345M1087.2 337V345M1092.4 337V345M1097.6 337V345M1102.8 337V345M1108.0 337V345M1113.2 337V345M1118.4 337V345M1123.6 337V345" stroke="#999" stroke-width="0.8" fill="none"/>
<g fill="#8a3a2a"><ellipse cx="980.0" cy="335.5" rx="2.2" ry="1.6"/><ellipse cx="985.5" cy="335.5" rx="2.2" ry="1.6"/><ellipse cx="991.0" cy="335.5" rx="2.2" ry="1.6"/><ellipse cx="996.5" cy="335.5" rx="2.2" ry="1.6"/><ellipse cx="1002.0" cy="335.5" rx="2.2" ry="1.6"/><ellipse cx="1007.5" cy="335.5" rx="2.2" ry="1.6"/><ellipse cx="1013.0" cy="335.5" rx="2.2" ry="1.6"/><ellipse cx="1018.5" cy="335.5" rx="2.2" ry="1.6"/><ellipse cx="1024.0" cy="335.5" rx="2.2" ry="1.6"/><ellipse cx="1029.5" cy="335.5" rx="2.2" ry="1.6"/><ellipse cx="1035.0" cy="335.5" rx="2.2" ry="1.6"/><ellipse cx="1040.5" cy="335.5" rx="2.2" ry="1.6"/><ellipse cx="1046.0" cy="335.5" rx="2.2" ry="1.6"/><ellipse cx="1051.5" cy="335.5" rx="2.2" ry="1.6"/><ellipse cx="1057.0" cy="335.5" rx="2.2" ry="1.6"/><ellipse cx="1062.5" cy="335.5" rx="2.2" ry="1.6"/><ellipse cx="1068.0" cy="335.5" rx="2.2" ry="1.6"/><ellipse cx="1073.5" cy="335.5" rx="2.2" ry="1.6"/><ellipse cx="1079.0" cy="335.5" rx="2.2" ry="1.6"/><ellipse cx="1084.5" cy="335.5" rx="2.2" ry="1.6"/><ellipse cx="1090.0" cy="335.5" rx="2.2" ry="1.6"/><ellipse cx="1095.5" cy="335.5" rx="2.2" ry="1.6"/><ellipse cx="1101.0" cy="335.5" rx="2.2" ry="1.6"/><ellipse cx="1106.5" cy="335.5" rx="2.2" ry="1.6"/><ellipse cx="1112.0" cy="335.5" rx="2.2" ry="1.6"/><ellipse cx="1117.5" cy="335.5" rx="2.2" ry="1.6"/><ellipse cx="1123.0" cy="335.5" rx="2.2" ry="1.6"/></g>
<line x1="978" y1="337" x2="1125" y2="337" stroke="#ff2020" stroke-width="1.2"/>
<line x1="978" y1="345" x2="1125" y2="345" stroke="#ff2020" stroke-width="1"/>
<rect x="1035" y="335" width="20" height="10" fill="#fff"/>
<path d="M1046.7 337.7h0.8v0.8h-0.8z M1053.5 338.2h0.8v0.8h-0.8z M1036.9 339.6h0.8v0.8h-0.8z M1046.9 340.9h0.8v0.8h-0.8z M1037.6 342.7h0.8v0.8h-0.8z M1041.8 344.0h0.8v0.8h-0.8z M1042.6 336.2h0.8v0.8h-0.8z M1035.7 339.0h0.8v0.8h-0.8z M1049.1 339.9h0.8v0.8h-0.8z M1051.9 343.2h0.8v0.8h-0.8z M1052.3 341.1h0.8v0.8h-0.8z M1053.4 341.7h0.8v0.8h-0.8z M1036.8 338.5h0.8v0.8h-0.8z M1039.7 336.7h0.8v0.8h-0.8z M1053.4 340.1h0.8v0.8h-0.8z M1038.7 342.8h0.8v0.8h-0.8z M1042.4 337.9h0.8v0.8h-0.8z M1049.4 337.4h0.8v0.8h-0.8z" fill="#777"/>
<rect x="1035" y="335" width="20" height="10" stroke="#00e600" stroke-width="0.9" fill="none"/>
<rect x="981" y="346" width="144" height="10" fill="#c8c8c8"/>
<path d="M981.0 346V356 M982.6 346V356 M984.2 346V356 M985.8 346V356 M987.4 346V356 M989.0 346V356 M990.6 346V356 M992.2 346V356 M993.8 346V356 M995.4 346V356 M997.0 346V356 M998.6 346V356 M1000.2 346V356 M1001.8 346V356 M1003.4 346V356 M1005.0 346V356 M1006.6 346V356 M1008.2 346V356 M1009.8 346V356 M1011.4 346V356 M1013.0 346V356 M1014.6 346V356 M1016.2 346V356 M1017.8 346V356 M1019.4 346V356 M1021.0 346V356 M1022.6 346V356 M1024.2 346V356 M1025.8 346V356 M1027.4 346V356 M1029.0 346V356 M1030.6 346V356 M1032.2 346V356 M1033.8 346V356 M1035.4 346V356 M1037.0 346V356 M1038.6 346V356 M1040.2 346V356 M1041.8 346V356 M1043.4 346V356 M1045.0 346V356 M1046.6 346V356 M1048.2 346V356 M1049.8 346V356 M1051.4 346V356 M1053.0 346V356 M1054.6 346V356 M1056.2 346V356 M1057.8 346V356 M1059.4 346V356 M1061.0 346V356 M1062.6 346V356 M1064.2 346V356 M1065.8 346V356 M1067.4 346V356 M1069.0 346V356 M1070.6 346V356 M1072.2 346V356 M1073.8 346V356 M1075.4 346V356 M1077.0 346V356 M1078.6 346V356 M1080.2 346V356 M1081.8 346V356 M1083.4 346V356 M1085.0 346V356 M1086.6 346V356 M1088.2 346V356 M1089.8 346V356 M1091.4 346V356 M1093.0 346V356 M1094.6 346V356 M1096.2 346V356 M1097.8 346V356 M1099.4 346V356 M1101.0 346V356 M1102.6 346V356 M1104.2 346V356 M1105.8 346V356 M1107.4 346V356 M1109.0 346V356 M1110.6 346V356 M1112.2 346V356 M1113.8 346V356 M1115.4 346V356 M1117.0 346V356 M1118.6 346V356 M1120.2 346V356 M1121.8 346V356 M1123.4 346V356 M1125.0 346V356" stroke="#6c6c6c" stroke-width="0.8"/>
<rect x="976" y="343" width="6" height="14" fill="#777"/>
<rect x="1119" y="343" width="6" height="14" fill="#777"/>
<line x1="906" y1="356.5" x2="1170" y2="356.5" stroke="#1f1fff" stroke-width="1.3"/>
<rect x="906" y="357" width="264" height="5" fill="#fff"/>
<path d="M1154.6 361.7h0.8v0.8h-0.8z M921.6 359.8h0.8v0.8h-0.8z M913.3 361.6h0.8v0.8h-0.8z M974.1 359.6h0.8v0.8h-0.8z M1101.2 360.8h0.8v0.8h-0.8z M1033.6 357.5h0.8v0.8h-0.8z M989.9 357.0h0.8v0.8h-0.8z M958.5 360.7h0.8v0.8h-0.8z M1061.7 359.2h0.8v0.8h-0.8z M1078.3 359.4h0.8v0.8h-0.8z M1004.1 359.0h0.8v0.8h-0.8z M1005.0 358.9h0.8v0.8h-0.8z M1022.5 361.0h0.8v0.8h-0.8z M1147.4 361.5h0.8v0.8h-0.8z M1029.5 361.6h0.8v0.8h-0.8z M1116.9 357.8h0.8v0.8h-0.8z M1125.9 357.4h0.8v0.8h-0.8z M1069.3 358.9h0.8v0.8h-0.8z M1103.8 360.9h0.8v0.8h-0.8z M1158.9 361.6h0.8v0.8h-0.8z M1007.7 357.1h0.8v0.8h-0.8z M925.8 361.9h0.8v0.8h-0.8z M991.2 358.2h0.8v0.8h-0.8z M936.5 358.8h0.8v0.8h-0.8z M993.6 360.7h0.8v0.8h-0.8z M953.6 359.3h0.8v0.8h-0.8z M1140.8 359.2h0.8v0.8h-0.8z M945.4 359.1h0.8v0.8h-0.8z M971.1 357.1h0.8v0.8h-0.8z M1056.7 358.5h0.8v0.8h-0.8z M1118.3 358.3h0.8v0.8h-0.8z M934.8 359.3h0.8v0.8h-0.8z M1033.4 357.8h0.8v0.8h-0.8z M1041.6 360.2h0.8v0.8h-0.8z M1113.9 361.6h0.8v0.8h-0.8z M1053.8 361.2h0.8v0.8h-0.8z M937.5 360.8h0.8v0.8h-0.8z M1162.3 359.2h0.8v0.8h-0.8z M975.0 358.2h0.8v0.8h-0.8z M968.9 359.0h0.8v0.8h-0.8z M1015.7 357.8h0.8v0.8h-0.8z M1125.7 361.9h0.8v0.8h-0.8z M944.1 360.2h0.8v0.8h-0.8z M1022.7 359.5h0.8v0.8h-0.8z M1040.8 359.2h0.8v0.8h-0.8z M1114.4 361.7h0.8v0.8h-0.8z M981.6 358.8h0.8v0.8h-0.8z M916.7 359.0h0.8v0.8h-0.8z M979.1 357.9h0.8v0.8h-0.8z M1128.7 359.6h0.8v0.8h-0.8z M966.8 357.9h0.8v0.8h-0.8z M1064.6 361.1h0.8v0.8h-0.8z M1140.8 360.7h0.8v0.8h-0.8z M1107.0 357.9h0.8v0.8h-0.8z M942.2 360.3h0.8v0.8h-0.8z M1071.9 358.0h0.8v0.8h-0.8z M987.3 357.1h0.8v0.8h-0.8z M1088.8 359.6h0.8v0.8h-0.8z M1128.0 361.6h0.8v0.8h-0.8z M1042.9 358.7h0.8v0.8h-0.8z M980.4 360.2h0.8v0.8h-0.8z M1155.6 357.5h0.8v0.8h-0.8z M1014.1 360.8h0.8v0.8h-0.8z M941.2 360.3h0.8v0.8h-0.8z M971.6 359.8h0.8v0.8h-0.8z M1166.2 357.2h0.8v0.8h-0.8z M1091.4 359.9h0.8v0.8h-0.8z M1132.5 358.8h0.8v0.8h-0.8z M1152.1 361.8h0.8v0.8h-0.8z M924.8 358.8h0.8v0.8h-0.8z M970.6 361.2h0.8v0.8h-0.8z M1146.9 360.9h0.8v0.8h-0.8z M1135.2 359.9h0.8v0.8h-0.8z M1143.1 358.5h0.8v0.8h-0.8z M934.4 360.7h0.8v0.8h-0.8z M1023.9 357.1h0.8v0.8h-0.8z M1118.4 357.7h0.8v0.8h-0.8z M970.3 357.4h0.8v0.8h-0.8z M1069.4 357.8h0.8v0.8h-0.8z M988.3 359.8h0.8v0.8h-0.8z M1158.2 357.1h0.8v0.8h-0.8z M1150.5 360.7h0.8v0.8h-0.8z M975.0 361.2h0.8v0.8h-0.8z M1074.1 359.3h0.8v0.8h-0.8z M968.9 359.2h0.8v0.8h-0.8z M998.6 357.5h0.8v0.8h-0.8z M953.2 358.4h0.8v0.8h-0.8z M1028.7 359.9h0.8v0.8h-0.8z M1107.0 357.6h0.8v0.8h-0.8z M938.1 361.4h0.8v0.8h-0.8z M1049.0 358.1h0.8v0.8h-0.8z M965.9 360.3h0.8v0.8h-0.8z M1028.0 359.0h0.8v0.8h-0.8z M1156.3 357.1h0.8v0.8h-0.8z M1073.6 360.5h0.8v0.8h-0.8z M1063.6 360.0h0.8v0.8h-0.8z M915.6 361.9h0.8v0.8h-0.8z M919.7 358.8h0.8v0.8h-0.8z M1011.8 361.2h0.8v0.8h-0.8z M1094.9 361.2h0.8v0.8h-0.8z M1055.0 361.9h0.8v0.8h-0.8z M990.6 359.0h0.8v0.8h-0.8z M1054.1 358.6h0.8v0.8h-0.8z M944.7 360.4h0.8v0.8h-0.8z M999.3 361.4h0.8v0.8h-0.8z M1081.1 357.1h0.8v0.8h-0.8z M934.8 357.9h0.8v0.8h-0.8z M991.6 358.0h0.8v0.8h-0.8z M1082.7 358.1h0.8v0.8h-0.8z M1017.1 359.0h0.8v0.8h-0.8z M1169.3 359.3h0.8v0.8h-0.8z M918.3 361.9h0.8v0.8h-0.8z M1162.9 357.2h0.8v0.8h-0.8z M1134.5 360.1h0.8v0.8h-0.8z M1148.3 360.1h0.8v0.8h-0.8z M1071.9 361.0h0.8v0.8h-0.8z M915.4 357.5h0.8v0.8h-0.8z M938.1 357.1h0.8v0.8h-0.8z M968.5 357.2h0.8v0.8h-0.8z M935.8 358.7h0.8v0.8h-0.8z M950.1 357.3h0.8v0.8h-0.8z M1159.2 361.6h0.8v0.8h-0.8z M1144.0 357.4h0.8v0.8h-0.8z M1061.8 361.7h0.8v0.8h-0.8z M1022.2 359.6h0.8v0.8h-0.8z M1139.7 361.6h0.8v0.8h-0.8z M1058.4 358.4h0.8v0.8h-0.8z M1100.3 360.7h0.8v0.8h-0.8z M981.8 359.3h0.8v0.8h-0.8z M1089.4 358.1h0.8v0.8h-0.8z M1008.1 359.7h0.8v0.8h-0.8z M1002.8 361.5h0.8v0.8h-0.8z M986.2 359.4h0.8v0.8h-0.8z M1122.2 357.2h0.8v0.8h-0.8z M994.1 357.9h0.8v0.8h-0.8z M1050.1 361.8h0.8v0.8h-0.8z M1010.7 361.6h0.8v0.8h-0.8z M948.8 361.8h0.8v0.8h-0.8z M991.5 358.6h0.8v0.8h-0.8z M977.3 361.4h0.8v0.8h-0.8z M963.1 357.3h0.8v0.8h-0.8z M911.8 359.8h0.8v0.8h-0.8z M1066.0 358.7h0.8v0.8h-0.8z M1079.6 359.6h0.8v0.8h-0.8z M1126.3 358.8h0.8v0.8h-0.8z M1107.4 359.6h0.8v0.8h-0.8z M1167.2 360.4h0.8v0.8h-0.8z M1152.6 359.1h0.8v0.8h-0.8z M1082.4 357.7h0.8v0.8h-0.8z M959.5 360.1h0.8v0.8h-0.8z M979.1 361.2h0.8v0.8h-0.8z M931.1 361.3h0.8v0.8h-0.8z M1149.4 362.0h0.8v0.8h-0.8z M976.9 360.2h0.8v0.8h-0.8z M1072.9 360.5h0.8v0.8h-0.8z M1015.0 357.5h0.8v0.8h-0.8z M1014.4 359.7h0.8v0.8h-0.8z M937.0 359.0h0.8v0.8h-0.8z M1168.1 357.7h0.8v0.8h-0.8z M1130.4 358.4h0.8v0.8h-0.8z M1070.0 357.6h0.8v0.8h-0.8z M1130.8 360.5h0.8v0.8h-0.8z M982.0 358.8h0.8v0.8h-0.8z M999.2 359.6h0.8v0.8h-0.8z M1063.2 360.2h0.8v0.8h-0.8z M907.8 360.7h0.8v0.8h-0.8z M1167.3 358.9h0.8v0.8h-0.8z M985.2 359.7h0.8v0.8h-0.8z M1118.0 359.2h0.8v0.8h-0.8z M1005.5 358.2h0.8v0.8h-0.8z M1122.9 358.7h0.8v0.8h-0.8z M1161.8 360.0h0.8v0.8h-0.8z M970.1 358.6h0.8v0.8h-0.8z M1162.6 361.5h0.8v0.8h-0.8z M1158.4 357.1h0.8v0.8h-0.8z M973.7 361.5h0.8v0.8h-0.8z M985.2 359.7h0.8v0.8h-0.8z M988.5 360.1h0.8v0.8h-0.8z M1021.4 361.1h0.8v0.8h-0.8z M1098.0 359.2h0.8v0.8h-0.8z M1028.6 357.2h0.8v0.8h-0.8z M1084.5 359.3h0.8v0.8h-0.8z M908.7 357.3h0.8v0.8h-0.8z M966.5 359.0h0.8v0.8h-0.8z M1038.2 360.2h0.8v0.8h-0.8z M1151.1 357.8h0.8v0.8h-0.8z M955.7 359.1h0.8v0.8h-0.8z M1012.0 360.8h0.8v0.8h-0.8z M1143.4 359.9h0.8v0.8h-0.8z M1088.6 360.7h0.8v0.8h-0.8z M930.4 358.8h0.8v0.8h-0.8z M1002.8 357.4h0.8v0.8h-0.8z M988.0 357.9h0.8v0.8h-0.8z M1079.2 358.5h0.8v0.8h-0.8z M996.6 361.7h0.8v0.8h-0.8z M1040.3 361.9h0.8v0.8h-0.8z M1072.6 359.6h0.8v0.8h-0.8z M1121.5 358.0h0.8v0.8h-0.8z M1141.8 359.1h0.8v0.8h-0.8z M921.9 359.8h0.8v0.8h-0.8z" fill="#777"/>
<line x1="919" y1="361.5" x2="1170" y2="361.5" stroke="#1f1fff" stroke-width="1.2"/>
<path d="M906 356 V374 H919" stroke="#1f1fff" stroke-width="1.3" fill="none"/>
<rect x="1105" y="328" width="45" height="55" stroke="#1f1fff" stroke-width="1.2" fill="none" stroke-dasharray="7 2.5 1.5 2.5"/>
<path d="M1150 383 V411 H1156" stroke="#1f1fff" stroke-width="1.2" fill="none"/>
<path d="M1138 330 H1170 V354 H1138 Z" stroke="#ff2020" stroke-width="1.3" fill="none"/>
<rect x="1141" y="333" width="27" height="18" fill="#8a8a8a"/>
<path d="M1141 334.0H1168 M1141 335.4H1168 M1141 336.8H1168 M1141 338.2H1168 M1141 339.6H1168 M1141 341.0H1168 M1141 342.4H1168 M1141 343.8H1168 M1141 345.2H1168 M1141 346.6H1168 M1141 348.0H1168 M1141 349.4H1168" stroke="#6a6a6a" stroke-width="0.7"/>
<line x1="1125" y1="346" x2="1138" y2="346" stroke="#ff2020" stroke-width="1.2"/>
<line x1="1170" y1="331" x2="1178" y2="331" stroke="#7d7d7d" stroke-width="0.8"/>
<line x1="1170" y1="355" x2="1178" y2="355" stroke="#7d7d7d" stroke-width="0.8"/>
<line x1="1176" y1="331" x2="1176" y2="355" stroke="#7d7d7d" stroke-width="0.8"/>
<line x1="1189" y1="331" x2="1189" y2="355" stroke="#7d7d7d" stroke-width="0.8"/>
<text transform="translate(1182.0 343.0) rotate(-90)" font-size="5.2" fill="#00e600" font-family="Liberation Sans" font-weight="bold" text-anchor="middle" textLength="18" lengthAdjust="spacingAndGlyphs">159060</text>
<text transform="translate(1186.0 341.0) rotate(-90)" font-size="5.2" fill="#00e600" font-family="Liberation Sans" font-weight="bold" text-anchor="middle" textLength="10" lengthAdjust="spacingAndGlyphs">048</text>
<line x1="919" y1="372.5" x2="1138" y2="372.5" stroke="#7d7d7d" stroke-width="0.9"/>
<line x1="919" y1="369" x2="919" y2="375" stroke="#7d7d7d" stroke-width="0.8"/>
<line x1="930" y1="369" x2="930" y2="375" stroke="#7d7d7d" stroke-width="0.8"/>
<line x1="940" y1="369" x2="940" y2="375" stroke="#7d7d7d" stroke-width="0.8"/>
<line x1="966" y1="369" x2="966" y2="375" stroke="#7d7d7d" stroke-width="0.8"/>
<line x1="973" y1="369" x2="973" y2="375" stroke="#7d7d7d" stroke-width="0.8"/>
<line x1="977" y1="369" x2="977" y2="375" stroke="#7d7d7d" stroke-width="0.8"/>
<line x1="1033" y1="369" x2="1033" y2="375" stroke="#7d7d7d" stroke-width="0.8"/>
<line x1="1055" y1="369" x2="1055" y2="375" stroke="#7d7d7d" stroke-width="0.8"/>
<line x1="1077" y1="369" x2="1077" y2="375" stroke="#7d7d7d" stroke-width="0.8"/>
<line x1="1113" y1="369" x2="1113" y2="375" stroke="#7d7d7d" stroke-width="0.8"/>
<line x1="1120" y1="369" x2="1120" y2="375" stroke="#7d7d7d" stroke-width="0.8"/>
<line x1="1127" y1="369" x2="1127" y2="375" stroke="#7d7d7d" stroke-width="0.8"/>
<line x1="1138" y1="369" x2="1138" y2="375" stroke="#7d7d7d" stroke-width="0.8"/>
<text x="921" y="372.2" font-size="4.5" fill="#00e600" font-family="Liberation Sans" font-weight="bold" textLength="7" lengthAdjust="spacingAndGlyphs">AV</text>
<text x="931" y="372.2" font-size="4.5" fill="#00e600" font-family="Liberation Sans" font-weight="bold" textLength="7" lengthAdjust="spacingAndGlyphs">1G</text>
<text x="944" y="372.2" font-size="4.5" fill="#00e600" font-family="Liberation Sans" font-weight="bold" textLength="12" lengthAdjust="spacingAndGlyphs">ABNM7</text>
<text x="967" y="372.2" font-size="4.5" fill="#00e600" font-family="Liberation Sans" font-weight="bold" textLength="5" lengthAdjust="spacingAndGlyphs">T8</text>
<text x="980" y="372.2" font-size="4.5" fill="#00e600" font-family="Liberation Sans" font-weight="bold" textLength="5" lengthAdjust="spacingAndGlyphs">KN</text>
<text x="1002" y="372.2" font-size="4.5" fill="#00e600" font-family="Liberation Sans" font-weight="bold" textLength="10" lengthAdjust="spacingAndGlyphs">2HKL</text>
<text x="1040" y="372.2" font-size="4.5" fill="#00e600" font-family="Liberation Sans" font-weight="bold" textLength="8" lengthAdjust="spacingAndGlyphs">98G</text>
<text x="1061" y="372.2" font-size="4.5" fill="#00e600" font-family="Liberation Sans" font-weight="bold" textLength="8" lengthAdjust="spacingAndGlyphs">BGE</text>
<text x="1093" y="372.2" font-size="4.5" fill="#00e600" font-family="Liberation Sans" font-weight="bold" textLength="10" lengthAdjust="spacingAndGlyphs">L975</text>
<text x="1117" y="372.2" font-size="4.5" fill="#00e600" font-family="Liberation Sans" font-weight="bold" textLength="6" lengthAdjust="spacingAndGlyphs">3D</text>
<text x="1130" y="372.2" font-size="4.5" fill="#00e600" font-family="Liberation Sans" font-weight="bold" textLength="6" lengthAdjust="spacingAndGlyphs">AW</text>
<text x="972" y="380.1" font-size="4.4" fill="#00e600" font-family="Liberation Sans" font-weight="bold" textLength="7" lengthAdjust="spacingAndGlyphs">KR</text>
<text x="1123" y="379.1" font-size="4.4" fill="#00e600" font-family="Liberation Sans" font-weight="bold" textLength="9" lengthAdjust="spacingAndGlyphs">YTL</text>
<line x1="913.4" y1="416.4" x2="1132.9" y2="416.4" stroke="#7d7d7d" stroke-width="1"/>
<line x1="913.4" y1="413.4" x2="913.4" y2="419.4" stroke="#7d7d7d" stroke-width="0.9"/>
<path d="M911.4 418.4 L915.4 414.4" stroke="#1f1fff" stroke-width="1"/>
<line x1="1077.9" y1="413.4" x2="1077.9" y2="419.4" stroke="#7d7d7d" stroke-width="0.9"/>
<path d="M1075.9 418.4 L1079.9 414.4" stroke="#1f1fff" stroke-width="1"/>
<line x1="1132.9" y1="413.4" x2="1132.9" y2="419.4" stroke="#7d7d7d" stroke-width="0.9"/>
<path d="M1130.9 418.4 L1134.9 414.4" stroke="#1f1fff" stroke-width="1"/>
<text x="992" y="414.7" font-size="4.5" fill="#00e600" font-family="Liberation Sans" font-weight="bold" textLength="9" lengthAdjust="spacingAndGlyphs">CTG</text>
<text x="1100" y="414.7" font-size="4.5" fill="#00e600" font-family="Liberation Sans" font-weight="bold" textLength="9" lengthAdjust="spacingAndGlyphs">EYN</text>
<circle cx="913.4" cy="432.7" r="8.5" fill="none" stroke="#ffff00" stroke-width="1.3"/>
<text x="913.4" y="436.7" font-size="11" fill="#1f1fff" text-anchor="middle" font-family="Liberation Sans" textLength="6" lengthAdjust="spacingAndGlyphs">8</text>
<circle cx="1077.9" cy="430.7" r="8.5" fill="none" stroke="#ffff00" stroke-width="1.3"/>
<text x="1077.9" y="434.7" font-size="11" fill="#1f1fff" text-anchor="middle" font-family="Liberation Sans" textLength="6" lengthAdjust="spacingAndGlyphs">9</text>
<circle cx="1132.9" cy="430.7" r="8.5" fill="none" stroke="#ffff00" stroke-width="1.3"/>
<text x="1132.9" y="434.7" font-size="9.5" fill="#1f1fff" text-anchor="middle" font-family="Liberation Sans" textLength="11" lengthAdjust="spacingAndGlyphs">10</text>
<circle cx="1165.5" cy="411.5" r="9" fill="#fff" stroke="#1f1fff" stroke-width="1.3"/>
<line x1="1156.5" y1="411.5" x2="1174.5" y2="411.5" stroke="#1f1fff" stroke-width="1"/>
<text x="1165.5" y="410.0" font-size="8" fill="#1f1fff" text-anchor="middle" font-family="Liberation Sans">5</text>
<text x="1159.5" y="417.1" font-size="5.2" fill="#00e600" font-family="Liberation Sans" font-weight="bold" textLength="12" lengthAdjust="spacingAndGlyphs">40BDP</text>
<text x="939" y="308.2" font-size="4.5" fill="#00e600" font-family="Liberation Sans" font-weight="bold" textLength="13" lengthAdjust="spacingAndGlyphs">1C4DR</text>
<text x="939" y="312.7" font-size="4.5" fill="#00e600" font-family="Liberation Sans" font-weight="bold" textLength="23" lengthAdjust="spacingAndGlyphs">RPCLMWA5V</text>
<path d="M939 307 L925 307 L916 327" stroke="#7d7d7d" stroke-width="0.9" fill="none"/>
<text x="1075" y="316.2" font-size="4.5" fill="#00e600" font-family="Liberation Sans" font-weight="bold" textLength="33" lengthAdjust="spacingAndGlyphs">2S7ER0P2V17BR</text>
<text x="1075" y="320.7" font-size="4.5" fill="#00e600" font-family="Liberation Sans" font-weight="bold" textLength="33" lengthAdjust="spacingAndGlyphs">FMLY0MAU1ZHX0</text>
<path d="M1073 313 L1053 313 L1053 336" stroke="#7d7d7d" stroke-width="0.9" fill="none"/>
<text x="1173" y="316.1" font-size="4.4" fill="#00e600" font-family="Liberation Sans" font-weight="bold" textLength="25" lengthAdjust="spacingAndGlyphs">X1EH3YR0N5</text>
<path d="M1171 314 L1148 314 L1148 340" stroke="#7d7d7d" stroke-width="0.9" fill="none"/>
<path d="M879 325 A5 3.5 0 0 0 889 325 Z" fill="#1f1fff"/>
<path d="M881 327.5 L884 329.5 L887 327.5 Z" fill="#ffff00"/>
<text x="880" y="323.0" font-size="4.2" fill="#00e600" font-family="Liberation Sans" font-weight="bold" textLength="8" lengthAdjust="spacingAndGlyphs">UYR</text>
<path d="M908 318 A5 3.5 0 0 0 918 318 Z" fill="#1f1fff"/>
<path d="M910 320.5 L913 322.5 L916 320.5 Z" fill="#ffff00"/>
<text x="909" y="316.0" font-size="4.2" fill="#00e600" font-family="Liberation Sans" font-weight="bold" textLength="8" lengthAdjust="spacingAndGlyphs">3CT</text>
<path d="M927 337 A5 3.5 0 0 0 937 337 Z" fill="#1f1fff"/>
<path d="M929 339.5 L932 341.5 L935 339.5 Z" fill="#ffff00"/>
<text x="928" y="335.0" font-size="4.2" fill="#00e600" font-family="Liberation Sans" font-weight="bold" textLength="8" lengthAdjust="spacingAndGlyphs">BXK</text>
<path d="M941 342 A5 3.5 0 0 0 951 342 Z" fill="#1f1fff"/>
<path d="M943 344.5 L946 346.5 L949 344.5 Z" fill="#ffff00"/>
<text x="942" y="340.0" font-size="4.2" fill="#00e600" font-family="Liberation Sans" font-weight="bold" textLength="8" lengthAdjust="spacingAndGlyphs">RIF</text>
<path d="M946 353 A5 3.5 0 0 0 956 353 Z" fill="#1f1fff"/>
<path d="M948 355.5 L951 357.5 L954 355.5 Z" fill="#ffff00"/>
<text x="947" y="351.0" font-size="4.2" fill="#00e600" font-family="Liberation Sans" font-weight="bold" textLength="8" lengthAdjust="spacingAndGlyphs">NTI</text>
<path d="M964 345 A5 3.5 0 0 0 974 345 Z" fill="#1f1fff"/>
<path d="M966 347.5 L969 349.5 L972 347.5 Z" fill="#ffff00"/>
<text x="965" y="343.0" font-size="4.2" fill="#00e600" font-family="Liberation Sans" font-weight="bold" textLength="8" lengthAdjust="spacingAndGlyphs">45R</text>
<path d="M1003 335 A5 3.5 0 0 0 1013 335 Z" fill="#1f1fff"/>
<path d="M1005 337.5 L1008 339.5 L1011 337.5 Z" fill="#ffff00"/>
<text x="1004" y="333.0" font-size="4.2" fill="#00e600" font-family="Liberation Sans" font-weight="bold" textLength="8" lengthAdjust="spacingAndGlyphs">LZY</text>
<path d="M1036 333 A5 3.5 0 0 0 1046 333 Z" fill="#1f1fff"/>
<path d="M1038 335.5 L1041 337.5 L1044 335.5 Z" fill="#ffff00"/>
<text x="1037" y="331.0" font-size="4.2" fill="#00e600" font-family="Liberation Sans" font-weight="bold" textLength="8" lengthAdjust="spacingAndGlyphs">O10</text>
<path d="M1148 331 A5 3.5 0 0 0 1158 331 Z" fill="#1f1fff"/>
<path d="M1150 333.5 L1153 335.5 L1156 333.5 Z" fill="#ffff00"/>
<text x="1149" y="329.0" font-size="4.2" fill="#00e600" font-family="Liberation Sans" font-weight="bold" textLength="8" lengthAdjust="spacingAndGlyphs">OV6</text>
<path d="M1153 349 A5 3.5 0 0 0 1163 349 Z" fill="#1f1fff"/>
<path d="M1155 351.5 L1158 353.5 L1161 351.5 Z" fill="#ffff00"/>
<text x="1154" y="347.0" font-size="4.2" fill="#00e600" font-family="Liberation Sans" font-weight="bold" textLength="8" lengthAdjust="spacingAndGlyphs">8OP</text>
<text x="1038" y="351.1" font-size="4.4" fill="#00e600" font-family="Liberation Sans" font-weight="bold" textLength="26" lengthAdjust="spacingAndGlyphs">4IS4ZR18OI</text>
<circle cx="981.6" cy="449.2" r="10" fill="#fff" stroke="#1f1fff" stroke-width="1.4"/>
<line x1="971.6" y1="449.2" x2="1030.1" y2="449.2" stroke="#1f1fff" stroke-width="1.5"/>
<text x="981.6" y="448.0" font-size="8.5" fill="#1f1fff" text-anchor="middle" font-family="Liberation Sans" font-weight="bold">3</text>
<text x="974.6" y="454.4" font-size="5.2" fill="#00e600" font-family="Liberation Sans" font-weight="bold" textLength="14" lengthAdjust="spacingAndGlyphs">H8FT0</text>
<text x="997.1" y="448.2" font-size="9" fill="#1f1fff" font-family="Liberation Sans" font-weight="bold" textLength="33" lengthAdjust="spacingAndGlyphs">POTONGAN</text>
<text x="997.1" y="454.4" font-size="4.9" fill="#00e600" font-family="Liberation Sans" font-weight="bold" textLength="28.05" lengthAdjust="spacingAndGlyphs">BKVA0FMPWNG</text>
<rect x="966.6" y="530" width="152" height="41.5" fill="#fff"/>
<clipPath id="cpd1"><rect x="966.6" y="530" width="152" height="41.5"/></clipPath><g clip-path="url(#cpd1)">
<g fill="none" stroke="#6a6a6a" stroke-width="1.3"><ellipse cx="964.9" cy="538.1" rx="8.6" ry="5.4"/><ellipse cx="983.4" cy="537.6" rx="7.0" ry="4.8"/><ellipse cx="1003.9" cy="536.6" rx="7.6" ry="5.5"/><ellipse cx="1020.5" cy="537.3" rx="8.2" ry="5.6"/><ellipse cx="1040.3" cy="535.9" rx="7.6" ry="5.5"/><ellipse cx="1057.4" cy="538.1" rx="6.9" ry="5.3"/><ellipse cx="1074.5" cy="538.4" rx="7.7" ry="5.6"/><ellipse cx="1091.0" cy="536.3" rx="7.4" ry="5.2"/><ellipse cx="1109.5" cy="537.4" rx="7.7" ry="5.2"/><ellipse cx="975.3" cy="547.4" rx="7.2" ry="5.4"/><ellipse cx="993.8" cy="547.1" rx="8.9" ry="5.1"/><ellipse cx="1010.5" cy="546.7" rx="8.0" ry="5.6"/><ellipse cx="1030.3" cy="546.9" rx="8.9" ry="4.5"/><ellipse cx="1048.7" cy="547.1" rx="8.8" ry="5.6"/><ellipse cx="1065.9" cy="547.3" rx="8.9" ry="5.3"/><ellipse cx="1081.7" cy="546.1" rx="8.5" ry="4.8"/><ellipse cx="1103.3" cy="546.4" rx="8.4" ry="5.7"/><ellipse cx="1120.1" cy="545.8" rx="8.0" ry="4.9"/><ellipse cx="968.4" cy="556.3" rx="7.6" ry="5.1"/><ellipse cx="985.4" cy="557.5" rx="8.2" ry="5.1"/><ellipse cx="1003.3" cy="555.6" rx="8.3" ry="5.5"/><ellipse cx="1021.7" cy="556.4" rx="7.2" ry="5.7"/><ellipse cx="1039.9" cy="556.6" rx="7.2" ry="4.6"/><ellipse cx="1057.7" cy="555.7" rx="7.4" ry="5.7"/><ellipse cx="1073.3" cy="556.0" rx="7.0" ry="5.2"/><ellipse cx="1091.1" cy="557.0" rx="7.9" ry="5.0"/><ellipse cx="1111.4" cy="555.0" rx="8.3" ry="4.6"/><ellipse cx="976.2" cy="566.8" rx="7.1" ry="5.3"/><ellipse cx="994.0" cy="565.4" rx="8.2" ry="4.5"/><ellipse cx="1011.3" cy="567.5" rx="8.3" ry="4.6"/><ellipse cx="1031.5" cy="567.2" rx="7.7" ry="4.7"/><ellipse cx="1048.4" cy="564.8" rx="7.9" ry="4.4"/><ellipse cx="1067.2" cy="565.6" rx="7.1" ry="4.8"/><ellipse cx="1085.5" cy="565.2" rx="7.8" ry="5.2"/><ellipse cx="1100.8" cy="566.4" rx="6.9" ry="5.0"/><ellipse cx="1121.5" cy="566.2" rx="8.5" ry="4.8"/></g>
</g>
<rect x="966.6" y="571.5" width="152" height="27" fill="#fff"/>
<path d="M1078.9 578.6h0.9v0.9h-0.9z M1064.6 597.3h0.9v0.9h-0.9z M1040.8 592.7h0.9v0.9h-0.9z M1015.5 581.2h0.9v0.9h-0.9z M980.4 579.2h0.9v0.9h-0.9z M1059.8 591.2h0.9v0.9h-0.9z M1072.8 589.1h0.9v0.9h-0.9z M978.5 591.7h0.9v0.9h-0.9z M970.4 582.2h0.9v0.9h-0.9z M988.6 581.4h0.9v0.9h-0.9z M1112.7 585.7h0.9v0.9h-0.9z M1102.6 589.9h0.9v0.9h-0.9z M982.1 590.9h0.9v0.9h-0.9z M1013.7 588.2h0.9v0.9h-0.9z M1024.2 589.0h0.9v0.9h-0.9z M1020.7 577.7h0.9v0.9h-0.9z M987.3 596.3h0.9v0.9h-0.9z M1093.9 578.3h0.9v0.9h-0.9z M975.4 574.4h0.9v0.9h-0.9z M1088.5 596.4h0.9v0.9h-0.9z M1118.5 582.4h0.9v0.9h-0.9z M974.3 577.3h0.9v0.9h-0.9z M1030.9 591.2h0.9v0.9h-0.9z M1117.8 587.8h0.9v0.9h-0.9z M1061.8 575.3h0.9v0.9h-0.9z M1001.2 575.2h0.9v0.9h-0.9z M1063.3 582.3h0.9v0.9h-0.9z M1115.3 594.5h0.9v0.9h-0.9z M1039.4 577.4h0.9v0.9h-0.9z M1023.2 572.4h0.9v0.9h-0.9z M1059.4 594.0h0.9v0.9h-0.9z M1044.3 575.4h0.9v0.9h-0.9z M977.5 573.0h0.9v0.9h-0.9z M1074.6 595.5h0.9v0.9h-0.9z M976.1 571.7h0.9v0.9h-0.9z M1111.8 576.3h0.9v0.9h-0.9z M1076.7 581.7h0.9v0.9h-0.9z M967.2 593.2h0.9v0.9h-0.9z M1069.2 586.8h0.9v0.9h-0.9z M1037.8 586.2h0.9v0.9h-0.9z M1045.1 583.1h0.9v0.9h-0.9z M1047.8 588.4h0.9v0.9h-0.9z M990.0 582.3h0.9v0.9h-0.9z M1059.1 573.7h0.9v0.9h-0.9z M1089.6 591.0h0.9v0.9h-0.9z M1017.0 589.3h0.9v0.9h-0.9z M1052.4 582.9h0.9v0.9h-0.9z M1022.6 589.2h0.9v0.9h-0.9z M987.4 594.9h0.9v0.9h-0.9z M1047.2 588.6h0.9v0.9h-0.9z M1095.4 577.5h0.9v0.9h-0.9z M1079.0 590.2h0.9v0.9h-0.9z M988.9 587.1h0.9v0.9h-0.9z M1050.9 597.0h0.9v0.9h-0.9z M1021.3 578.0h0.9v0.9h-0.9z M1033.6 578.5h0.9v0.9h-0.9z M1001.1 597.7h0.9v0.9h-0.9z M997.4 591.7h0.9v0.9h-0.9z M1000.2 594.1h0.9v0.9h-0.9z M1065.3 576.6h0.9v0.9h-0.9z M1068.4 590.6h0.9v0.9h-0.9z M1001.1 583.9h0.9v0.9h-0.9z M1048.8 590.3h0.9v0.9h-0.9z M1078.3 596.0h0.9v0.9h-0.9z M1052.7 594.5h0.9v0.9h-0.9z M1069.8 593.1h0.9v0.9h-0.9z M987.0 585.1h0.9v0.9h-0.9z M1043.6 594.1h0.9v0.9h-0.9z M1110.6 588.4h0.9v0.9h-0.9z M1112.5 585.4h0.9v0.9h-0.9z M1036.5 590.0h0.9v0.9h-0.9z M1049.3 597.6h0.9v0.9h-0.9z M995.7 584.3h0.9v0.9h-0.9z M980.7 581.6h0.9v0.9h-0.9z M1060.6 582.4h0.9v0.9h-0.9z M973.8 572.6h0.9v0.9h-0.9z M1073.2 597.3h0.9v0.9h-0.9z M1036.4 574.8h0.9v0.9h-0.9z M987.2 596.0h0.9v0.9h-0.9z M979.9 598.2h0.9v0.9h-0.9z M997.2 574.6h0.9v0.9h-0.9z M1077.2 581.1h0.9v0.9h-0.9z M1022.3 594.2h0.9v0.9h-0.9z M1088.7 591.4h0.9v0.9h-0.9z M968.4 578.4h0.9v0.9h-0.9z M1002.9 585.4h0.9v0.9h-0.9z M1046.3 581.1h0.9v0.9h-0.9z M1040.9 593.5h0.9v0.9h-0.9z M1020.3 581.1h0.9v0.9h-0.9z M1016.3 587.8h0.9v0.9h-0.9z M971.8 596.1h0.9v0.9h-0.9z M1003.4 581.1h0.9v0.9h-0.9z M1072.0 572.1h0.9v0.9h-0.9z M1116.8 583.4h0.9v0.9h-0.9z M1086.8 584.7h0.9v0.9h-0.9z M977.8 578.5h0.9v0.9h-0.9z M989.4 596.6h0.9v0.9h-0.9z M1099.3 589.6h0.9v0.9h-0.9z M1093.6 587.4h0.9v0.9h-0.9z M1004.6 598.4h0.9v0.9h-0.9z M1082.3 578.8h0.9v0.9h-0.9z M1034.1 572.2h0.9v0.9h-0.9z M1117.7 584.7h0.9v0.9h-0.9z M1040.1 572.4h0.9v0.9h-0.9z M1093.8 573.5h0.9v0.9h-0.9z M1060.8 588.9h0.9v0.9h-0.9z M1057.7 594.3h0.9v0.9h-0.9z M1113.6 590.2h0.9v0.9h-0.9z M1034.7 577.7h0.9v0.9h-0.9z M1112.1 585.5h0.9v0.9h-0.9z M1021.4 585.8h0.9v0.9h-0.9z M1013.9 575.0h0.9v0.9h-0.9z M1061.5 577.2h0.9v0.9h-0.9z M1091.0 591.1h0.9v0.9h-0.9z M1016.9 584.1h0.9v0.9h-0.9z M1109.0 580.0h0.9v0.9h-0.9z M1017.6 584.6h0.9v0.9h-0.9z M1001.0 578.2h0.9v0.9h-0.9z M1099.7 587.9h0.9v0.9h-0.9z M1062.4 591.1h0.9v0.9h-0.9z M988.4 581.9h0.9v0.9h-0.9z M976.2 598.3h0.9v0.9h-0.9z M1020.8 587.0h0.9v0.9h-0.9z M1055.4 575.3h0.9v0.9h-0.9z M1072.7 596.2h0.9v0.9h-0.9z M1103.7 574.1h0.9v0.9h-0.9z M996.9 583.0h0.9v0.9h-0.9z M1053.5 574.2h0.9v0.9h-0.9z M1086.9 592.9h0.9v0.9h-0.9z M1002.8 593.0h0.9v0.9h-0.9z M988.0 573.4h0.9v0.9h-0.9z M1112.9 580.7h0.9v0.9h-0.9z M1021.7 594.5h0.9v0.9h-0.9z M1003.8 595.1h0.9v0.9h-0.9z M1075.3 580.5h0.9v0.9h-0.9z M1073.6 589.6h0.9v0.9h-0.9z M1100.8 592.6h0.9v0.9h-0.9z M1043.1 595.6h0.9v0.9h-0.9z M1089.5 598.4h0.9v0.9h-0.9z M989.5 577.0h0.9v0.9h-0.9z M1101.6 589.6h0.9v0.9h-0.9z M1028.1 582.2h0.9v0.9h-0.9z M1083.9 596.6h0.9v0.9h-0.9z M1055.7 575.4h0.9v0.9h-0.9z M1075.9 578.3h0.9v0.9h-0.9z M1053.5 589.3h0.9v0.9h-0.9z M1113.3 573.5h0.9v0.9h-0.9z M995.5 596.5h0.9v0.9h-0.9z M1055.4 579.7h0.9v0.9h-0.9z M1020.3 584.1h0.9v0.9h-0.9z M1114.0 590.1h0.9v0.9h-0.9z M1076.2 596.4h0.9v0.9h-0.9z M1094.0 580.1h0.9v0.9h-0.9z M993.2 595.7h0.9v0.9h-0.9z M1049.6 592.0h0.9v0.9h-0.9z M1061.8 577.9h0.9v0.9h-0.9z M969.6 572.8h0.9v0.9h-0.9z M1034.6 595.6h0.9v0.9h-0.9z M1009.5 585.1h0.9v0.9h-0.9z M981.7 578.0h0.9v0.9h-0.9z M975.2 575.0h0.9v0.9h-0.9z M974.0 573.5h0.9v0.9h-0.9z M1090.6 587.0h0.9v0.9h-0.9z M1075.8 571.6h0.9v0.9h-0.9z M1007.7 588.8h0.9v0.9h-0.9z M968.9 580.2h0.9v0.9h-0.9z M970.8 580.2h0.9v0.9h-0.9z M1098.4 572.2h0.9v0.9h-0.9z M1040.5 588.0h0.9v0.9h-0.9z M1088.2 576.2h0.9v0.9h-0.9z M1097.7 593.0h0.9v0.9h-0.9z M979.8 588.0h0.9v0.9h-0.9z M1084.5 598.2h0.9v0.9h-0.9z M1027.3 596.9h0.9v0.9h-0.9z M1099.3 572.2h0.9v0.9h-0.9z M1014.7 589.2h0.9v0.9h-0.9z M1014.2 582.7h0.9v0.9h-0.9z M1074.5 594.0h0.9v0.9h-0.9z M990.4 572.0h0.9v0.9h-0.9z M998.6 585.8h0.9v0.9h-0.9z M1094.3 581.2h0.9v0.9h-0.9z M1021.5 580.8h0.9v0.9h-0.9z M1069.9 594.9h0.9v0.9h-0.9z M989.9 598.0h0.9v0.9h-0.9z M1053.9 577.7h0.9v0.9h-0.9z M1060.6 593.5h0.9v0.9h-0.9z M1039.1 572.4h0.9v0.9h-0.9z M1064.9 589.1h0.9v0.9h-0.9z M1050.1 590.6h0.9v0.9h-0.9z M1051.6 581.3h0.9v0.9h-0.9z M1047.1 578.9h0.9v0.9h-0.9z M1005.0 586.6h0.9v0.9h-0.9z M981.8 593.3h0.9v0.9h-0.9z M1115.0 575.6h0.9v0.9h-0.9z M1062.1 582.3h0.9v0.9h-0.9z M1115.3 596.8h0.9v0.9h-0.9z M1061.5 574.8h0.9v0.9h-0.9z M1049.1 577.0h0.9v0.9h-0.9z M1084.7 578.5h0.9v0.9h-0.9z M1058.7 591.4h0.9v0.9h-0.9z M1103.7 595.0h0.9v0.9h-0.9z M1096.6 592.5h0.9v0.9h-0.9z M1046.9 581.0h0.9v0.9h-0.9z M1074.4 583.4h0.9v0.9h-0.9z M1097.2 577.3h0.9v0.9h-0.9z M1105.2 595.8h0.9v0.9h-0.9z M1025.7 577.2h0.9v0.9h-0.9z M1086.6 572.2h0.9v0.9h-0.9z M1066.9 571.9h0.9v0.9h-0.9z M1089.1 596.2h0.9v0.9h-0.9z M1069.0 581.0h0.9v0.9h-0.9z M1001.3 581.7h0.9v0.9h-0.9z M1104.4 581.6h0.9v0.9h-0.9z M1066.4 594.7h0.9v0.9h-0.9z M971.3 572.1h0.9v0.9h-0.9z M1074.3 578.0h0.9v0.9h-0.9z M1020.4 580.3h0.9v0.9h-0.9z M1031.3 579.0h0.9v0.9h-0.9z M1100.2 585.0h0.9v0.9h-0.9z M1115.7 592.9h0.9v0.9h-0.9z M1039.1 596.7h0.9v0.9h-0.9z M1083.4 597.3h0.9v0.9h-0.9z M987.3 579.6h0.9v0.9h-0.9z M980.0 571.6h0.9v0.9h-0.9z M1099.1 578.2h0.9v0.9h-0.9z M1015.2 588.0h0.9v0.9h-0.9z M1111.9 577.2h0.9v0.9h-0.9z M974.5 592.6h0.9v0.9h-0.9z M1095.9 591.4h0.9v0.9h-0.9z M973.6 592.4h0.9v0.9h-0.9z M1033.3 583.2h0.9v0.9h-0.9z M987.8 596.8h0.9v0.9h-0.9z M1070.7 593.2h0.9v0.9h-0.9z M989.7 596.1h0.9v0.9h-0.9z M986.9 579.7h0.9v0.9h-0.9z M1042.9 581.0h0.9v0.9h-0.9z M1080.7 584.0h0.9v0.9h-0.9z M1026.9 582.7h0.9v0.9h-0.9z M1064.1 589.5h0.9v0.9h-0.9z M1026.9 580.6h0.9v0.9h-0.9z M1102.5 587.3h0.9v0.9h-0.9z M997.2 588.4h0.9v0.9h-0.9z M968.9 575.1h0.9v0.9h-0.9z M1057.0 587.0h0.9v0.9h-0.9z M1072.7 591.2h0.9v0.9h-0.9z M973.9 595.6h0.9v0.9h-0.9z M976.4 574.5h0.9v0.9h-0.9z M1112.0 597.7h0.9v0.9h-0.9z M1046.4 571.6h0.9v0.9h-0.9z M1000.6 586.1h0.9v0.9h-0.9z M1062.8 586.2h0.9v0.9h-0.9z M1117.5 585.8h0.9v0.9h-0.9z M1094.1 597.3h0.9v0.9h-0.9z M978.3 597.7h0.9v0.9h-0.9z M1096.2 597.7h0.9v0.9h-0.9z M1000.6 573.5h0.9v0.9h-0.9z M1073.5 571.9h0.9v0.9h-0.9z M1007.5 597.6h0.9v0.9h-0.9z M996.4 572.8h0.9v0.9h-0.9z M1086.5 597.2h0.9v0.9h-0.9z M1007.2 580.3h0.9v0.9h-0.9z M972.9 583.8h0.9v0.9h-0.9z M1009.5 580.4h0.9v0.9h-0.9z M1028.9 598.3h0.9v0.9h-0.9z M1079.8 578.8h0.9v0.9h-0.9z M1030.7 586.1h0.9v0.9h-0.9z M1024.8 575.6h0.9v0.9h-0.9z M1082.2 595.3h0.9v0.9h-0.9z M1088.7 595.7h0.9v0.9h-0.9z M1063.1 578.0h0.9v0.9h-0.9z M1042.7 598.2h0.9v0.9h-0.9z M1072.0 591.2h0.9v0.9h-0.9z M1117.1 593.8h0.9v0.9h-0.9z M1067.4 573.8h0.9v0.9h-0.9z M1060.9 572.4h0.9v0.9h-0.9z M1075.4 582.5h0.9v0.9h-0.9z M1051.4 590.0h0.9v0.9h-0.9z M1033.8 589.5h0.9v0.9h-0.9z M1035.8 587.1h0.9v0.9h-0.9z M1038.5 589.0h0.9v0.9h-0.9z M1038.1 580.7h0.9v0.9h-0.9z M1049.6 581.8h0.9v0.9h-0.9z M1091.9 592.9h0.9v0.9h-0.9z M1098.7 581.1h0.9v0.9h-0.9z M976.3 597.9h0.9v0.9h-0.9z M1007.1 589.3h0.9v0.9h-0.9z M1092.1 573.4h0.9v0.9h-0.9z M1087.7 589.4h0.9v0.9h-0.9z M1106.9 592.2h0.9v0.9h-0.9z M1006.4 594.2h0.9v0.9h-0.9z M1096.9 580.9h0.9v0.9h-0.9z M1056.1 586.9h0.9v0.9h-0.9z M1118.4 573.3h0.9v0.9h-0.9z M1081.6 581.3h0.9v0.9h-0.9z M997.7 576.1h0.9v0.9h-0.9z M1022.2 589.7h0.9v0.9h-0.9z M989.8 589.4h0.9v0.9h-0.9z M993.6 597.1h0.9v0.9h-0.9z M1096.6 589.1h0.9v0.9h-0.9z M1104.9 580.2h0.9v0.9h-0.9z M1021.6 594.8h0.9v0.9h-0.9z M1031.6 582.6h0.9v0.9h-0.9z M1073.3 581.6h0.9v0.9h-0.9z M1022.0 589.4h0.9v0.9h-0.9z M1046.0 579.7h0.9v0.9h-0.9z M1067.2 578.9h0.9v0.9h-0.9z M1010.7 583.5h0.9v0.9h-0.9z M983.6 588.6h0.9v0.9h-0.9z M1077.6 576.2h0.9v0.9h-0.9z M1045.2 571.7h0.9v0.9h-0.9z M986.4 584.7h0.9v0.9h-0.9z M1066.9 588.3h0.9v0.9h-0.9z M1046.1 593.1h0.9v0.9h-0.9z M1005.0 586.5h0.9v0.9h-0.9z M966.7 578.5h0.9v0.9h-0.9z M1056.3 579.8h0.9v0.9h-0.9z M1049.3 596.3h0.9v0.9h-0.9z M1005.4 578.7h0.9v0.9h-0.9z M1033.1 585.7h0.9v0.9h-0.9z M1041.5 573.9h0.9v0.9h-0.9z M986.1 597.4h0.9v0.9h-0.9z M1010.7 592.6h0.9v0.9h-0.9z M1106.4 590.9h0.9v0.9h-0.9z M1023.7 572.6h0.9v0.9h-0.9z M1081.0 597.7h0.9v0.9h-0.9z M1032.1 587.9h0.9v0.9h-0.9z M1005.6 577.9h0.9v0.9h-0.9z M1095.7 575.0h0.9v0.9h-0.9z M1060.6 597.9h0.9v0.9h-0.9z M1096.0 587.2h0.9v0.9h-0.9z M976.2 577.0h0.9v0.9h-0.9z M1097.3 573.7h0.9v0.9h-0.9z M1034.3 582.1h0.9v0.9h-0.9z M1029.6 596.8h0.9v0.9h-0.9z M1064.3 592.9h0.9v0.9h-0.9z M983.0 586.7h0.9v0.9h-0.9z M1108.6 590.4h0.9v0.9h-0.9z M1032.8 598.4h0.9v0.9h-0.9z M993.4 573.3h0.9v0.9h-0.9z M1027.0 575.2h0.9v0.9h-0.9z M1081.0 571.8h0.9v0.9h-0.9z M1001.9 576.9h0.9v0.9h-0.9z M1048.9 596.5h0.9v0.9h-0.9z M1011.3 580.4h0.9v0.9h-0.9z M1025.5 583.9h0.9v0.9h-0.9z M980.3 594.4h0.9v0.9h-0.9z M1053.3 571.9h0.9v0.9h-0.9z M1042.1 594.4h0.9v0.9h-0.9z M999.4 583.8h0.9v0.9h-0.9z M1091.8 576.9h0.9v0.9h-0.9z M1017.6 594.8h0.9v0.9h-0.9z M1050.2 591.7h0.9v0.9h-0.9z M1094.7 575.3h0.9v0.9h-0.9z M1028.4 572.9h0.9v0.9h-0.9z M1061.8 580.2h0.9v0.9h-0.9z M995.5 598.0h0.9v0.9h-0.9z M994.9 586.0h0.9v0.9h-0.9z M1045.6 573.8h0.9v0.9h-0.9z M1024.9 589.4h0.9v0.9h-0.9z M1012.0 582.2h0.9v0.9h-0.9z M1101.2 589.9h0.9v0.9h-0.9z M1013.2 578.2h0.9v0.9h-0.9z M1024.4 583.3h0.9v0.9h-0.9z M1048.6 579.7h0.9v0.9h-0.9z M986.6 577.1h0.9v0.9h-0.9z M1065.7 596.7h0.9v0.9h-0.9z M1066.3 590.7h0.9v0.9h-0.9z M988.1 596.6h0.9v0.9h-0.9z M1018.5 583.8h0.9v0.9h-0.9z M1074.0 589.4h0.9v0.9h-0.9z M1077.4 571.7h0.9v0.9h-0.9z M976.9 597.2h0.9v0.9h-0.9z M1091.7 572.5h0.9v0.9h-0.9z M1000.0 583.4h0.9v0.9h-0.9z M997.1 577.2h0.9v0.9h-0.9z M1114.4 588.0h0.9v0.9h-0.9z M1028.3 591.2h0.9v0.9h-0.9z M997.6 577.0h0.9v0.9h-0.9z M994.0 594.7h0.9v0.9h-0.9z M985.5 575.2h0.9v0.9h-0.9z M1100.3 593.5h0.9v0.9h-0.9z M1042.1 571.9h0.9v0.9h-0.9z M1076.2 591.4h0.9v0.9h-0.9z M991.5 577.5h0.9v0.9h-0.9z M1076.0 591.7h0.9v0.9h-0.9z M1088.4 585.9h0.9v0.9h-0.9z M990.7 592.5h0.9v0.9h-0.9z M1075.3 585.4h0.9v0.9h-0.9z M1037.3 576.9h0.9v0.9h-0.9z M980.5 572.9h0.9v0.9h-0.9z M1000.6 594.0h0.9v0.9h-0.9z M1073.9 583.4h0.9v0.9h-0.9z M1031.1 594.9h0.9v0.9h-0.9z M1106.9 575.1h0.9v0.9h-0.9z M990.9 583.6h0.9v0.9h-0.9z M1081.8 595.1h0.9v0.9h-0.9z M1087.7 590.6h0.9v0.9h-0.9z M1075.9 579.9h0.9v0.9h-0.9z M1005.8 586.3h0.9v0.9h-0.9z M999.2 597.0h0.9v0.9h-0.9z M1067.7 577.7h0.9v0.9h-0.9z M1114.6 580.3h0.9v0.9h-0.9z M990.3 579.4h0.9v0.9h-0.9z M1066.1 590.2h0.9v0.9h-0.9z M996.7 575.5h0.9v0.9h-0.9z M994.5 580.5h0.9v0.9h-0.9z M1027.6 572.5h0.9v0.9h-0.9z M1020.0 589.3h0.9v0.9h-0.9z M998.6 589.2h0.9v0.9h-0.9z M1046.2 573.5h0.9v0.9h-0.9z M1041.0 572.0h0.9v0.9h-0.9z M1085.3 595.5h0.9v0.9h-0.9z M1105.3 576.9h0.9v0.9h-0.9z M1009.1 579.7h0.9v0.9h-0.9z M1055.3 591.9h0.9v0.9h-0.9z M997.2 584.2h0.9v0.9h-0.9z M1083.2 592.2h0.9v0.9h-0.9z M1104.0 587.1h0.9v0.9h-0.9z M1012.1 587.2h0.9v0.9h-0.9z M981.9 571.5h0.9v0.9h-0.9z M996.1 575.6h0.9v0.9h-0.9z M1012.2 576.1h0.9v0.9h-0.9z M1019.8 584.5h0.9v0.9h-0.9z M1016.7 581.3h0.9v0.9h-0.9z M983.3 594.0h0.9v0.9h-0.9z M1089.5 591.0h0.9v0.9h-0.9z M1035.7 591.7h0.9v0.9h-0.9z M983.8 575.9h0.9v0.9h-0.9z M1026.3 572.5h0.9v0.9h-0.9z M972.6 587.1h0.9v0.9h-0.9z M1029.3 590.3h0.9v0.9h-0.9z M1029.7 594.1h0.9v0.9h-0.9z M978.2 591.1h0.9v0.9h-0.9z M1078.1 581.2h0.9v0.9h-0.9z M1067.3 573.9h0.9v0.9h-0.9z M967.4 588.9h0.9v0.9h-0.9z M1093.7 579.7h0.9v0.9h-0.9z M1006.3 574.4h0.9v0.9h-0.9z M1002.9 575.6h0.9v0.9h-0.9z M1007.7 586.1h0.9v0.9h-0.9z M1015.9 578.1h0.9v0.9h-0.9z M1052.9 572.6h0.9v0.9h-0.9z M1005.5 597.1h0.9v0.9h-0.9z M1009.7 586.5h0.9v0.9h-0.9z M1116.7 596.0h0.9v0.9h-0.9z M1077.0 585.9h0.9v0.9h-0.9z M1003.0 574.1h0.9v0.9h-0.9z M982.7 572.9h0.9v0.9h-0.9z M1086.9 590.4h0.9v0.9h-0.9z M998.6 591.6h0.9v0.9h-0.9z M979.8 576.1h0.9v0.9h-0.9z M1094.4 598.5h0.9v0.9h-0.9z M1031.0 588.4h0.9v0.9h-0.9z M983.3 586.9h0.9v0.9h-0.9z M984.9 589.4h0.9v0.9h-0.9z M999.7 578.1h0.9v0.9h-0.9z M1084.3 585.3h0.9v0.9h-0.9z M1091.0 593.7h0.9v0.9h-0.9z M977.7 580.6h0.9v0.9h-0.9z M981.5 577.3h0.9v0.9h-0.9z M1084.0 576.2h0.9v0.9h-0.9z M1012.7 573.8h0.9v0.9h-0.9z M1081.9 587.5h0.9v0.9h-0.9z M994.4 580.1h0.9v0.9h-0.9z M1108.1 592.7h0.9v0.9h-0.9z M971.5 592.8h0.9v0.9h-0.9z M989.1 585.3h0.9v0.9h-0.9z M992.0 593.0h0.9v0.9h-0.9z M1083.6 577.0h0.9v0.9h-0.9z M1107.1 590.0h0.9v0.9h-0.9z M1074.2 573.3h0.9v0.9h-0.9z M967.0 595.3h0.9v0.9h-0.9z M972.3 585.7h0.9v0.9h-0.9z M1016.7 573.4h0.9v0.9h-0.9z M1058.3 573.2h0.9v0.9h-0.9z M1098.2 572.9h0.9v0.9h-0.9z M1022.1 582.6h0.9v0.9h-0.9z M1065.5 597.7h0.9v0.9h-0.9z M1055.1 593.2h0.9v0.9h-0.9z M1041.4 592.3h0.9v0.9h-0.9z M1042.0 578.5h0.9v0.9h-0.9z M1072.0 579.7h0.9v0.9h-0.9z M974.6 584.1h0.9v0.9h-0.9z M1086.4 589.9h0.9v0.9h-0.9z M991.6 581.9h0.9v0.9h-0.9z M1063.8 596.8h0.9v0.9h-0.9z M1044.5 591.7h0.9v0.9h-0.9z M1056.8 589.2h0.9v0.9h-0.9z M1062.7 573.3h0.9v0.9h-0.9z M1085.6 593.2h0.9v0.9h-0.9z M1080.6 594.4h0.9v0.9h-0.9z M1003.1 587.4h0.9v0.9h-0.9z M1051.9 595.2h0.9v0.9h-0.9z M1053.9 596.7h0.9v0.9h-0.9z M1101.7 572.9h0.9v0.9h-0.9z M1067.4 582.2h0.9v0.9h-0.9z M1061.8 592.4h0.9v0.9h-0.9z M1018.6 581.7h0.9v0.9h-0.9z M1110.6 577.7h0.9v0.9h-0.9z M1068.7 592.9h0.9v0.9h-0.9z M1067.4 595.9h0.9v0.9h-0.9z M1031.4 579.7h0.9v0.9h-0.9z M1012.2 587.8h0.9v0.9h-0.9z M1111.1 595.2h0.9v0.9h-0.9z M1038.8 582.6h0.9v0.9h-0.9z M1012.1 575.4h0.9v0.9h-0.9z M1049.4 573.7h0.9v0.9h-0.9z M1026.4 584.1h0.9v0.9h-0.9z M971.5 580.6h0.9v0.9h-0.9z M1117.4 576.6h0.9v0.9h-0.9z M1101.7 582.5h0.9v0.9h-0.9z M1048.3 578.0h0.9v0.9h-0.9z M999.5 588.4h0.9v0.9h-0.9z M1023.7 595.7h0.9v0.9h-0.9z M1025.8 580.5h0.9v0.9h-0.9z M989.5 576.0h0.9v0.9h-0.9z M1020.0 593.5h0.9v0.9h-0.9z M1100.6 597.4h0.9v0.9h-0.9z M1013.5 580.1h0.9v0.9h-0.9z M1099.7 592.9h0.9v0.9h-0.9z M1058.7 594.6h0.9v0.9h-0.9z M1113.7 582.1h0.9v0.9h-0.9z M968.0 594.5h0.9v0.9h-0.9z M982.4 578.1h0.9v0.9h-0.9z M1052.5 589.2h0.9v0.9h-0.9z M1078.5 589.8h0.9v0.9h-0.9z M1116.1 591.3h0.9v0.9h-0.9z M1081.0 589.5h0.9v0.9h-0.9z M987.1 591.8h0.9v0.9h-0.9z M1005.1 582.7h0.9v0.9h-0.9z M1044.7 580.4h0.9v0.9h-0.9z M1007.1 579.5h0.9v0.9h-0.9z M1013.0 590.7h0.9v0.9h-0.9z M1070.9 596.8h0.9v0.9h-0.9z M1089.4 573.1h0.9v0.9h-0.9z M1066.0 584.8h0.9v0.9h-0.9z M1071.7 572.0h0.9v0.9h-0.9z M1099.5 595.5h0.9v0.9h-0.9z M984.7 581.7h0.9v0.9h-0.9z M1013.9 585.3h0.9v0.9h-0.9z M989.7 587.9h0.9v0.9h-0.9z M1036.3 597.1h0.9v0.9h-0.9z M1039.9 571.7h0.9v0.9h-0.9z M1108.9 578.8h0.9v0.9h-0.9z M995.1 596.3h0.9v0.9h-0.9z M1043.8 598.4h0.9v0.9h-0.9z M993.0 587.4h0.9v0.9h-0.9z M1115.8 588.4h0.9v0.9h-0.9z M1003.3 592.4h0.9v0.9h-0.9z M970.5 586.3h0.9v0.9h-0.9z M1028.5 573.8h0.9v0.9h-0.9z M1110.9 588.8h0.9v0.9h-0.9z M1041.5 597.8h0.9v0.9h-0.9z M1021.3 595.9h0.9v0.9h-0.9z M1015.8 594.0h0.9v0.9h-0.9z M1041.9 572.8h0.9v0.9h-0.9z M1047.5 595.6h0.9v0.9h-0.9z M997.1 593.3h0.9v0.9h-0.9z M976.0 579.8h0.9v0.9h-0.9z M1045.7 589.9h0.9v0.9h-0.9z M1104.5 587.4h0.9v0.9h-0.9z M1114.2 592.5h0.9v0.9h-0.9z M1021.3 590.2h0.9v0.9h-0.9z M1008.0 595.6h0.9v0.9h-0.9z M1038.7 588.3h0.9v0.9h-0.9z M1107.6 582.4h0.9v0.9h-0.9z M1070.1 581.3h0.9v0.9h-0.9z M1015.2 592.9h0.9v0.9h-0.9z M1038.4 574.5h0.9v0.9h-0.9z M1107.2 588.3h0.9v0.9h-0.9z M1042.7 582.5h0.9v0.9h-0.9z M990.9 595.6h0.9v0.9h-0.9z M973.3 579.0h0.9v0.9h-0.9z M1048.0 589.4h0.9v0.9h-0.9z M1095.4 582.6h0.9v0.9h-0.9z M978.2 582.1h0.9v0.9h-0.9z M1075.6 582.2h0.9v0.9h-0.9z M1089.8 594.5h0.9v0.9h-0.9z M985.0 583.6h0.9v0.9h-0.9z M968.4 585.9h0.9v0.9h-0.9z M1072.6 579.8h0.9v0.9h-0.9z M1058.1 581.2h0.9v0.9h-0.9z M1115.5 595.4h0.9v0.9h-0.9z M1099.6 574.1h0.9v0.9h-0.9z M1058.2 593.9h0.9v0.9h-0.9z M1093.3 590.7h0.9v0.9h-0.9z M1107.9 576.0h0.9v0.9h-0.9z M993.4 591.0h0.9v0.9h-0.9z M1079.4 574.7h0.9v0.9h-0.9z M1027.9 594.2h0.9v0.9h-0.9z M1086.6 594.2h0.9v0.9h-0.9z M1027.4 585.0h0.9v0.9h-0.9z M1017.8 594.9h0.9v0.9h-0.9z M1074.8 575.4h0.9v0.9h-0.9z M1078.3 582.7h0.9v0.9h-0.9z M1107.4 579.3h0.9v0.9h-0.9z M999.0 589.9h0.9v0.9h-0.9z M1107.0 573.3h0.9v0.9h-0.9z M967.1 587.0h0.9v0.9h-0.9z M1002.4 583.2h0.9v0.9h-0.9z M999.1 591.2h0.9v0.9h-0.9z M1085.9 589.8h0.9v0.9h-0.9z M1096.2 575.1h0.9v0.9h-0.9z M1000.3 594.4h0.9v0.9h-0.9z M1002.9 574.9h0.9v0.9h-0.9z M1009.5 572.4h0.9v0.9h-0.9z M1113.9 596.6h0.9v0.9h-0.9z M1024.5 579.3h0.9v0.9h-0.9z M1064.9 595.1h0.9v0.9h-0.9z M1025.0 595.7h0.9v0.9h-0.9z M1074.8 592.3h0.9v0.9h-0.9z M1058.5 585.2h0.9v0.9h-0.9z M1058.9 595.9h0.9v0.9h-0.9z M1013.6 581.2h0.9v0.9h-0.9z M1053.0 595.5h0.9v0.9h-0.9z M978.5 572.1h0.9v0.9h-0.9z M1045.2 574.8h0.9v0.9h-0.9z M1111.5 577.4h0.9v0.9h-0.9z M1036.1 592.1h0.9v0.9h-0.9z M1034.5 585.1h0.9v0.9h-0.9z M1115.0 587.4h0.9v0.9h-0.9z M1057.1 572.4h0.9v0.9h-0.9z M1048.3 584.1h0.9v0.9h-0.9z M1040.1 579.4h0.9v0.9h-0.9z M1108.8 597.5h0.9v0.9h-0.9z M1047.2 577.7h0.9v0.9h-0.9z M1051.1 593.7h0.9v0.9h-0.9z M1009.4 597.8h0.9v0.9h-0.9z M1054.3 590.8h0.9v0.9h-0.9z M1000.5 576.2h0.9v0.9h-0.9z M1089.8 578.7h0.9v0.9h-0.9z M1023.5 597.3h0.9v0.9h-0.9z M1008.2 573.9h0.9v0.9h-0.9z M983.7 582.0h0.9v0.9h-0.9z M1111.6 582.5h0.9v0.9h-0.9z M1067.9 595.3h0.9v0.9h-0.9z M974.9 581.5h0.9v0.9h-0.9z M1047.3 589.3h0.9v0.9h-0.9z M1004.8 588.8h0.9v0.9h-0.9z M1054.0 583.1h0.9v0.9h-0.9z M1113.8 595.3h0.9v0.9h-0.9z M1060.4 576.6h0.9v0.9h-0.9z M1060.1 574.5h0.9v0.9h-0.9z M991.7 592.0h0.9v0.9h-0.9z M978.2 595.7h0.9v0.9h-0.9z M969.1 592.5h0.9v0.9h-0.9z M1086.6 591.6h0.9v0.9h-0.9z M1084.1 576.9h0.9v0.9h-0.9z M1081.4 594.1h0.9v0.9h-0.9z M1011.6 592.7h0.9v0.9h-0.9z" fill="#666"/>
<line x1="988" y1="571.5" x2="988" y2="598.5" stroke="#7d7d7d" stroke-width="1"/>
<line x1="1015" y1="571.5" x2="1015" y2="598.5" stroke="#7d7d7d" stroke-width="1"/>
<line x1="1042" y1="571.5" x2="1042" y2="598.5" stroke="#7d7d7d" stroke-width="1"/>
<line x1="1069" y1="571.5" x2="1069" y2="598.5" stroke="#7d7d7d" stroke-width="1"/>
<line x1="1097" y1="571.5" x2="1097" y2="598.5" stroke="#7d7d7d" stroke-width="1"/>
<clipPath id="cpd2"><rect x="966.6" y="598.5" width="152" height="27.5"/></clipPath><g clip-path="url(#cpd2)">
<g fill="none" stroke="#6a6a6a" stroke-width="1.3"><ellipse cx="964.7" cy="605.2" rx="7.3" ry="3.8"/><ellipse cx="982.0" cy="604.3" rx="7.7" ry="4.6"/><ellipse cx="999.6" cy="604.6" rx="7.2" ry="4.6"/><ellipse cx="1014.9" cy="603.9" rx="6.8" ry="3.9"/><ellipse cx="1031.6" cy="605.1" rx="6.9" ry="3.8"/><ellipse cx="1047.5" cy="605.3" rx="6.7" ry="4.8"/><ellipse cx="1062.1" cy="605.7" rx="7.0" ry="3.9"/><ellipse cx="1078.0" cy="604.0" rx="7.8" ry="5.0"/><ellipse cx="1096.0" cy="604.6" rx="6.6" ry="4.3"/><ellipse cx="1110.0" cy="605.0" rx="7.9" ry="4.0"/><ellipse cx="973.7" cy="613.9" rx="7.1" ry="4.7"/><ellipse cx="991.5" cy="612.0" rx="7.8" ry="4.3"/><ellipse cx="1005.2" cy="611.8" rx="7.5" ry="4.4"/><ellipse cx="1020.7" cy="613.9" rx="7.9" ry="3.9"/><ellipse cx="1039.7" cy="612.1" rx="7.2" ry="4.9"/><ellipse cx="1056.0" cy="612.5" rx="7.2" ry="4.4"/><ellipse cx="1071.7" cy="614.2" rx="6.1" ry="4.0"/><ellipse cx="1086.0" cy="614.1" rx="6.3" ry="4.9"/><ellipse cx="1104.4" cy="612.8" rx="7.2" ry="4.9"/><ellipse cx="1119.3" cy="614.2" rx="7.5" ry="4.5"/><ellipse cx="967.5" cy="622.6" rx="6.4" ry="4.6"/><ellipse cx="984.0" cy="623.0" rx="7.5" ry="4.4"/><ellipse cx="1000.1" cy="621.8" rx="6.3" ry="4.4"/><ellipse cx="1014.1" cy="622.1" rx="7.6" ry="4.9"/><ellipse cx="1028.6" cy="621.7" rx="7.5" ry="4.1"/><ellipse cx="1047.6" cy="621.9" rx="6.5" ry="4.9"/><ellipse cx="1061.4" cy="620.0" rx="7.0" ry="4.3"/><ellipse cx="1080.4" cy="622.9" rx="7.6" ry="3.9"/><ellipse cx="1094.8" cy="621.7" rx="6.9" ry="3.8"/><ellipse cx="1110.5" cy="621.4" rx="7.9" ry="4.7"/></g>
</g>
<path d="M971 609 C978 605 985 612 992 608 C999 604 1003 610 1010 606 M1070 607 C1077 611 1084 604 1091 609 C1098 613 1104 605 1116 609" stroke="#ffff00" stroke-width="1.2" fill="none"/>
<circle cx="1042" cy="610.5" r="7" fill="#888" stroke="#4a6aff" stroke-width="1"/>
<path d="M1036 606.0H1048 M1036 607.8H1048 M1036 609.6H1048 M1036 611.4H1048 M1036 613.2H1048 M1036 615.0H1048" stroke="#666" stroke-width="0.7"/>
<rect x="966.6" y="626" width="152" height="27.5" fill="#fff"/>
<path d="M1100.6 628.7h0.9v0.9h-0.9z M988.4 640.6h0.9v0.9h-0.9z M1060.2 634.9h0.9v0.9h-0.9z M1044.0 652.3h0.9v0.9h-0.9z M1024.6 650.2h0.9v0.9h-0.9z M977.6 626.8h0.9v0.9h-0.9z M1065.1 628.4h0.9v0.9h-0.9z M1051.9 642.9h0.9v0.9h-0.9z M1086.9 640.8h0.9v0.9h-0.9z M1073.8 644.2h0.9v0.9h-0.9z M1060.0 638.6h0.9v0.9h-0.9z M1068.5 641.4h0.9v0.9h-0.9z M998.3 631.2h0.9v0.9h-0.9z M1043.6 649.0h0.9v0.9h-0.9z M998.3 645.5h0.9v0.9h-0.9z M1078.3 644.5h0.9v0.9h-0.9z M1116.0 642.8h0.9v0.9h-0.9z M979.7 640.3h0.9v0.9h-0.9z M1069.5 628.4h0.9v0.9h-0.9z M1002.9 650.2h0.9v0.9h-0.9z M1116.0 628.5h0.9v0.9h-0.9z M1008.2 634.5h0.9v0.9h-0.9z M1011.5 639.6h0.9v0.9h-0.9z M1054.1 635.2h0.9v0.9h-0.9z M995.8 628.2h0.9v0.9h-0.9z M973.2 644.8h0.9v0.9h-0.9z M1083.2 631.9h0.9v0.9h-0.9z M1025.1 653.1h0.9v0.9h-0.9z M1106.9 641.8h0.9v0.9h-0.9z M998.6 646.9h0.9v0.9h-0.9z M1080.8 628.2h0.9v0.9h-0.9z M969.9 627.6h0.9v0.9h-0.9z M1077.4 644.4h0.9v0.9h-0.9z M987.1 651.1h0.9v0.9h-0.9z M1088.3 627.5h0.9v0.9h-0.9z M1060.6 634.1h0.9v0.9h-0.9z M1005.4 629.7h0.9v0.9h-0.9z M1086.2 649.3h0.9v0.9h-0.9z M970.9 636.5h0.9v0.9h-0.9z M991.2 630.5h0.9v0.9h-0.9z M1110.4 644.0h0.9v0.9h-0.9z M1038.5 643.1h0.9v0.9h-0.9z M1081.0 646.6h0.9v0.9h-0.9z M1016.1 648.1h0.9v0.9h-0.9z M968.6 640.8h0.9v0.9h-0.9z M1018.4 641.0h0.9v0.9h-0.9z M1020.8 648.4h0.9v0.9h-0.9z M966.9 647.2h0.9v0.9h-0.9z M1002.9 635.4h0.9v0.9h-0.9z M978.6 630.4h0.9v0.9h-0.9z M972.0 649.4h0.9v0.9h-0.9z M1031.2 635.3h0.9v0.9h-0.9z M976.4 629.4h0.9v0.9h-0.9z M1036.2 631.8h0.9v0.9h-0.9z M974.7 644.2h0.9v0.9h-0.9z M1003.8 651.2h0.9v0.9h-0.9z M1108.1 640.3h0.9v0.9h-0.9z M1084.5 643.4h0.9v0.9h-0.9z M1065.0 632.0h0.9v0.9h-0.9z M1081.3 650.4h0.9v0.9h-0.9z M1075.1 637.9h0.9v0.9h-0.9z M984.6 652.1h0.9v0.9h-0.9z M1059.4 642.9h0.9v0.9h-0.9z M991.9 652.1h0.9v0.9h-0.9z M1009.8 636.8h0.9v0.9h-0.9z M1018.5 652.4h0.9v0.9h-0.9z M980.5 649.8h0.9v0.9h-0.9z M1064.0 643.0h0.9v0.9h-0.9z M1066.2 646.4h0.9v0.9h-0.9z M988.2 627.9h0.9v0.9h-0.9z M976.9 636.8h0.9v0.9h-0.9z M978.4 646.1h0.9v0.9h-0.9z M1048.0 628.0h0.9v0.9h-0.9z M977.9 641.3h0.9v0.9h-0.9z M1076.3 643.8h0.9v0.9h-0.9z M1044.1 650.1h0.9v0.9h-0.9z M1106.5 638.4h0.9v0.9h-0.9z M1103.3 633.0h0.9v0.9h-0.9z M1026.6 645.2h0.9v0.9h-0.9z M992.9 653.2h0.9v0.9h-0.9z M1100.0 649.7h0.9v0.9h-0.9z M1036.6 634.9h0.9v0.9h-0.9z M997.9 636.7h0.9v0.9h-0.9z M1085.8 628.9h0.9v0.9h-0.9z M998.3 635.6h0.9v0.9h-0.9z M1017.6 643.2h0.9v0.9h-0.9z M1095.1 628.0h0.9v0.9h-0.9z M980.2 647.5h0.9v0.9h-0.9z M1067.1 634.6h0.9v0.9h-0.9z M1006.6 627.3h0.9v0.9h-0.9z M1039.7 649.0h0.9v0.9h-0.9z M975.3 633.0h0.9v0.9h-0.9z M980.1 642.1h0.9v0.9h-0.9z M976.0 634.1h0.9v0.9h-0.9z M1007.4 651.6h0.9v0.9h-0.9z M1108.8 635.8h0.9v0.9h-0.9z M1049.0 630.8h0.9v0.9h-0.9z M1022.7 646.3h0.9v0.9h-0.9z M1022.9 630.6h0.9v0.9h-0.9z M1067.3 650.0h0.9v0.9h-0.9z M1104.7 630.6h0.9v0.9h-0.9z M1082.2 651.6h0.9v0.9h-0.9z M971.2 643.8h0.9v0.9h-0.9z M1101.3 647.0h0.9v0.9h-0.9z M1096.2 632.6h0.9v0.9h-0.9z M1102.2 633.2h0.9v0.9h-0.9z M967.7 628.7h0.9v0.9h-0.9z M1023.9 636.2h0.9v0.9h-0.9z M1009.4 639.0h0.9v0.9h-0.9z M1040.6 629.0h0.9v0.9h-0.9z M1050.9 639.5h0.9v0.9h-0.9z M1028.1 639.3h0.9v0.9h-0.9z M1106.8 651.0h0.9v0.9h-0.9z M1031.3 627.7h0.9v0.9h-0.9z M995.6 633.3h0.9v0.9h-0.9z M1034.0 632.6h0.9v0.9h-0.9z M1018.0 627.6h0.9v0.9h-0.9z M1044.0 639.3h0.9v0.9h-0.9z M999.4 642.8h0.9v0.9h-0.9z M1118.5 651.5h0.9v0.9h-0.9z M1023.7 627.6h0.9v0.9h-0.9z M1032.2 627.5h0.9v0.9h-0.9z M1045.8 640.0h0.9v0.9h-0.9z M1014.6 628.8h0.9v0.9h-0.9z M1039.1 638.9h0.9v0.9h-0.9z M1110.3 647.6h0.9v0.9h-0.9z M986.6 648.2h0.9v0.9h-0.9z M1062.4 628.7h0.9v0.9h-0.9z M1009.2 647.7h0.9v0.9h-0.9z M977.0 645.3h0.9v0.9h-0.9z M1038.7 633.1h0.9v0.9h-0.9z M1044.0 643.3h0.9v0.9h-0.9z M1089.9 650.8h0.9v0.9h-0.9z M1064.4 644.9h0.9v0.9h-0.9z M971.5 643.8h0.9v0.9h-0.9z M1084.0 644.3h0.9v0.9h-0.9z M987.8 636.0h0.9v0.9h-0.9z M1025.4 650.4h0.9v0.9h-0.9z M1015.5 627.1h0.9v0.9h-0.9z M1096.9 644.1h0.9v0.9h-0.9z M1065.5 645.2h0.9v0.9h-0.9z M969.0 638.6h0.9v0.9h-0.9z M1076.5 638.4h0.9v0.9h-0.9z M1095.7 633.8h0.9v0.9h-0.9z M1114.8 649.1h0.9v0.9h-0.9z M1012.8 634.6h0.9v0.9h-0.9z M996.9 627.8h0.9v0.9h-0.9z M970.4 630.5h0.9v0.9h-0.9z M1021.3 639.3h0.9v0.9h-0.9z M976.6 636.3h0.9v0.9h-0.9z M1096.2 646.4h0.9v0.9h-0.9z M1068.8 631.8h0.9v0.9h-0.9z M1104.2 631.3h0.9v0.9h-0.9z M1038.1 634.5h0.9v0.9h-0.9z M1085.7 633.5h0.9v0.9h-0.9z M1114.7 646.8h0.9v0.9h-0.9z M971.4 630.9h0.9v0.9h-0.9z M1029.3 645.5h0.9v0.9h-0.9z M1053.0 647.2h0.9v0.9h-0.9z M1002.8 649.0h0.9v0.9h-0.9z M990.1 648.3h0.9v0.9h-0.9z M1058.8 639.1h0.9v0.9h-0.9z M1049.8 636.6h0.9v0.9h-0.9z M1006.3 641.5h0.9v0.9h-0.9z M1008.2 637.4h0.9v0.9h-0.9z M1104.9 653.5h0.9v0.9h-0.9z M987.1 634.8h0.9v0.9h-0.9z M1081.0 630.6h0.9v0.9h-0.9z M1030.8 628.2h0.9v0.9h-0.9z M1091.1 647.7h0.9v0.9h-0.9z M1005.1 641.7h0.9v0.9h-0.9z M1000.5 630.1h0.9v0.9h-0.9z M1079.7 652.6h0.9v0.9h-0.9z M1074.8 628.6h0.9v0.9h-0.9z M1032.8 648.5h0.9v0.9h-0.9z M1113.6 650.9h0.9v0.9h-0.9z M977.3 646.7h0.9v0.9h-0.9z M993.2 629.8h0.9v0.9h-0.9z M977.7 636.4h0.9v0.9h-0.9z M1012.2 644.2h0.9v0.9h-0.9z M1073.8 642.0h0.9v0.9h-0.9z M1034.4 639.7h0.9v0.9h-0.9z M1047.2 644.7h0.9v0.9h-0.9z M1022.7 640.4h0.9v0.9h-0.9z M1051.4 638.0h0.9v0.9h-0.9z M1056.6 633.0h0.9v0.9h-0.9z M1024.6 649.6h0.9v0.9h-0.9z M1111.9 643.7h0.9v0.9h-0.9z M1029.2 652.3h0.9v0.9h-0.9z M1005.7 648.6h0.9v0.9h-0.9z M1073.1 627.6h0.9v0.9h-0.9z M1070.3 631.8h0.9v0.9h-0.9z M1016.4 651.3h0.9v0.9h-0.9z M1034.2 635.4h0.9v0.9h-0.9z M1082.2 652.3h0.9v0.9h-0.9z M1101.8 638.8h0.9v0.9h-0.9z M1015.9 652.7h0.9v0.9h-0.9z M1115.2 628.4h0.9v0.9h-0.9z M1114.1 640.9h0.9v0.9h-0.9z M1027.5 629.7h0.9v0.9h-0.9z M1080.1 636.2h0.9v0.9h-0.9z M1074.2 636.5h0.9v0.9h-0.9z M1041.7 636.0h0.9v0.9h-0.9z M1118.1 643.6h0.9v0.9h-0.9z M1100.1 629.1h0.9v0.9h-0.9z M1044.1 650.3h0.9v0.9h-0.9z M1060.2 643.8h0.9v0.9h-0.9z M1037.9 638.5h0.9v0.9h-0.9z M1017.0 640.9h0.9v0.9h-0.9z M1019.0 646.9h0.9v0.9h-0.9z M1014.4 648.3h0.9v0.9h-0.9z M1071.9 644.6h0.9v0.9h-0.9z M1085.2 636.8h0.9v0.9h-0.9z M984.4 643.3h0.9v0.9h-0.9z M1011.0 641.1h0.9v0.9h-0.9z M997.6 632.8h0.9v0.9h-0.9z M1056.6 647.1h0.9v0.9h-0.9z M1022.7 649.4h0.9v0.9h-0.9z M1065.1 630.5h0.9v0.9h-0.9z M976.4 638.5h0.9v0.9h-0.9z M1067.7 647.1h0.9v0.9h-0.9z M973.5 650.7h0.9v0.9h-0.9z M1057.1 637.3h0.9v0.9h-0.9z M1051.8 626.8h0.9v0.9h-0.9z M1087.9 649.0h0.9v0.9h-0.9z M979.6 632.8h0.9v0.9h-0.9z M993.0 630.8h0.9v0.9h-0.9z M1103.4 647.6h0.9v0.9h-0.9z M1002.5 626.7h0.9v0.9h-0.9z M979.1 628.4h0.9v0.9h-0.9z M996.7 638.9h0.9v0.9h-0.9z M977.7 635.6h0.9v0.9h-0.9z M1010.9 646.6h0.9v0.9h-0.9z M1099.5 635.2h0.9v0.9h-0.9z M1107.4 633.3h0.9v0.9h-0.9z M1006.9 627.7h0.9v0.9h-0.9z M974.5 652.8h0.9v0.9h-0.9z M986.6 649.9h0.9v0.9h-0.9z M1016.5 639.8h0.9v0.9h-0.9z M988.0 642.6h0.9v0.9h-0.9z M1116.9 648.1h0.9v0.9h-0.9z M1080.7 649.1h0.9v0.9h-0.9z M1030.8 634.1h0.9v0.9h-0.9z M969.1 634.6h0.9v0.9h-0.9z M977.6 639.0h0.9v0.9h-0.9z M976.6 630.2h0.9v0.9h-0.9z M1087.2 638.4h0.9v0.9h-0.9z M1037.8 648.4h0.9v0.9h-0.9z M1061.1 648.7h0.9v0.9h-0.9z M1038.3 638.0h0.9v0.9h-0.9z M968.6 651.7h0.9v0.9h-0.9z M999.4 649.1h0.9v0.9h-0.9z M1036.1 646.6h0.9v0.9h-0.9z M1042.7 640.4h0.9v0.9h-0.9z M1017.0 627.6h0.9v0.9h-0.9z M1001.4 626.6h0.9v0.9h-0.9z M1044.5 631.8h0.9v0.9h-0.9z M1075.6 638.5h0.9v0.9h-0.9z M995.8 631.1h0.9v0.9h-0.9z M1116.4 653.4h0.9v0.9h-0.9z M1103.1 629.6h0.9v0.9h-0.9z M976.0 638.7h0.9v0.9h-0.9z M1018.1 645.4h0.9v0.9h-0.9z M1070.1 645.3h0.9v0.9h-0.9z M1088.9 636.9h0.9v0.9h-0.9z M1046.0 634.4h0.9v0.9h-0.9z M1084.3 634.7h0.9v0.9h-0.9z M1011.2 634.9h0.9v0.9h-0.9z M1002.5 630.8h0.9v0.9h-0.9z M1062.2 632.7h0.9v0.9h-0.9z M971.2 634.8h0.9v0.9h-0.9z M1085.8 645.8h0.9v0.9h-0.9z M1098.7 644.9h0.9v0.9h-0.9z M1039.0 634.5h0.9v0.9h-0.9z M978.0 644.1h0.9v0.9h-0.9z M1061.3 638.0h0.9v0.9h-0.9z M976.7 648.1h0.9v0.9h-0.9z M1044.6 638.4h0.9v0.9h-0.9z M1096.1 651.8h0.9v0.9h-0.9z M1030.2 645.4h0.9v0.9h-0.9z M1047.9 647.4h0.9v0.9h-0.9z M1076.7 634.7h0.9v0.9h-0.9z M974.4 647.2h0.9v0.9h-0.9z M979.9 651.4h0.9v0.9h-0.9z M986.8 649.6h0.9v0.9h-0.9z M1109.9 641.3h0.9v0.9h-0.9z M976.2 644.8h0.9v0.9h-0.9z M971.9 644.1h0.9v0.9h-0.9z M1096.1 644.2h0.9v0.9h-0.9z M1018.4 640.3h0.9v0.9h-0.9z M988.6 645.2h0.9v0.9h-0.9z M1075.3 646.2h0.9v0.9h-0.9z M971.4 651.0h0.9v0.9h-0.9z M1068.4 640.6h0.9v0.9h-0.9z M1073.0 634.7h0.9v0.9h-0.9z M1090.9 642.6h0.9v0.9h-0.9z M1028.3 632.6h0.9v0.9h-0.9z M1025.4 648.2h0.9v0.9h-0.9z M1074.1 636.0h0.9v0.9h-0.9z M1102.0 638.6h0.9v0.9h-0.9z M1050.4 628.5h0.9v0.9h-0.9z M1109.8 651.8h0.9v0.9h-0.9z M1076.0 636.6h0.9v0.9h-0.9z M1001.0 631.1h0.9v0.9h-0.9z M1089.8 646.9h0.9v0.9h-0.9z M1026.3 631.6h0.9v0.9h-0.9z M1086.2 646.6h0.9v0.9h-0.9z M1105.7 639.5h0.9v0.9h-0.9z M1098.4 640.1h0.9v0.9h-0.9z M1088.4 626.8h0.9v0.9h-0.9z M1044.5 648.4h0.9v0.9h-0.9z M1072.2 652.8h0.9v0.9h-0.9z M1060.1 634.6h0.9v0.9h-0.9z M1077.4 649.3h0.9v0.9h-0.9z M1070.3 644.1h0.9v0.9h-0.9z M975.2 626.0h0.9v0.9h-0.9z M1001.8 635.5h0.9v0.9h-0.9z M1086.2 633.0h0.9v0.9h-0.9z M972.6 627.0h0.9v0.9h-0.9z M1118.1 632.3h0.9v0.9h-0.9z M1014.9 650.2h0.9v0.9h-0.9z M1110.8 634.3h0.9v0.9h-0.9z M1060.4 636.8h0.9v0.9h-0.9z M1009.7 651.9h0.9v0.9h-0.9z M968.5 644.6h0.9v0.9h-0.9z M1081.5 647.2h0.9v0.9h-0.9z M1052.7 651.1h0.9v0.9h-0.9z M1090.7 643.7h0.9v0.9h-0.9z M974.5 650.5h0.9v0.9h-0.9z M992.6 630.1h0.9v0.9h-0.9z M1013.2 639.9h0.9v0.9h-0.9z M1016.1 638.0h0.9v0.9h-0.9z M1013.3 632.6h0.9v0.9h-0.9z M1074.9 644.4h0.9v0.9h-0.9z M974.9 650.6h0.9v0.9h-0.9z M992.8 634.8h0.9v0.9h-0.9z M1084.2 649.6h0.9v0.9h-0.9z M1111.6 650.0h0.9v0.9h-0.9z M1049.0 651.1h0.9v0.9h-0.9z M1087.1 649.2h0.9v0.9h-0.9z M1115.3 652.0h0.9v0.9h-0.9z M1038.0 638.7h0.9v0.9h-0.9z M1080.4 649.0h0.9v0.9h-0.9z M1077.4 635.9h0.9v0.9h-0.9z M976.3 629.3h0.9v0.9h-0.9z M1101.3 650.8h0.9v0.9h-0.9z M970.5 636.2h0.9v0.9h-0.9z M1060.0 639.7h0.9v0.9h-0.9z M974.6 649.6h0.9v0.9h-0.9z M1063.8 634.6h0.9v0.9h-0.9z M1039.0 636.4h0.9v0.9h-0.9z M1063.6 650.4h0.9v0.9h-0.9z M1054.2 634.8h0.9v0.9h-0.9z M1019.0 649.1h0.9v0.9h-0.9z M1078.9 635.7h0.9v0.9h-0.9z M1105.5 642.5h0.9v0.9h-0.9z M1118.2 650.6h0.9v0.9h-0.9z M977.0 638.3h0.9v0.9h-0.9z M968.4 652.3h0.9v0.9h-0.9z M1001.1 631.7h0.9v0.9h-0.9z M1049.0 651.5h0.9v0.9h-0.9z M1066.7 649.7h0.9v0.9h-0.9z M1066.1 641.6h0.9v0.9h-0.9z M1036.7 641.7h0.9v0.9h-0.9z M970.2 629.6h0.9v0.9h-0.9z M1118.3 631.1h0.9v0.9h-0.9z M1010.8 640.2h0.9v0.9h-0.9z M1079.8 628.8h0.9v0.9h-0.9z M1087.2 642.6h0.9v0.9h-0.9z M975.4 636.1h0.9v0.9h-0.9z M1109.7 646.3h0.9v0.9h-0.9z M990.6 643.5h0.9v0.9h-0.9z M978.3 637.5h0.9v0.9h-0.9z M1016.3 653.3h0.9v0.9h-0.9z M1044.9 652.7h0.9v0.9h-0.9z M1041.2 646.7h0.9v0.9h-0.9z M968.2 650.0h0.9v0.9h-0.9z M1058.5 636.4h0.9v0.9h-0.9z M1092.9 650.8h0.9v0.9h-0.9z M991.5 626.5h0.9v0.9h-0.9z M1065.2 650.2h0.9v0.9h-0.9z M983.7 641.7h0.9v0.9h-0.9z M974.7 627.5h0.9v0.9h-0.9z M1043.3 650.8h0.9v0.9h-0.9z M1095.9 645.6h0.9v0.9h-0.9z M1074.8 631.9h0.9v0.9h-0.9z M1036.8 630.2h0.9v0.9h-0.9z M999.0 630.2h0.9v0.9h-0.9z M1033.2 626.8h0.9v0.9h-0.9z M987.3 644.9h0.9v0.9h-0.9z M1058.4 632.4h0.9v0.9h-0.9z M999.5 643.3h0.9v0.9h-0.9z M974.8 647.3h0.9v0.9h-0.9z M1088.5 650.8h0.9v0.9h-0.9z M991.7 647.5h0.9v0.9h-0.9z M1048.4 632.4h0.9v0.9h-0.9z M1091.4 632.4h0.9v0.9h-0.9z M993.2 650.0h0.9v0.9h-0.9z M1114.9 645.8h0.9v0.9h-0.9z M983.3 638.7h0.9v0.9h-0.9z M1056.9 631.9h0.9v0.9h-0.9z M1093.6 637.7h0.9v0.9h-0.9z M1044.2 639.4h0.9v0.9h-0.9z M966.9 649.9h0.9v0.9h-0.9z M1098.5 650.7h0.9v0.9h-0.9z M1051.6 637.4h0.9v0.9h-0.9z M1015.2 630.7h0.9v0.9h-0.9z M999.5 640.9h0.9v0.9h-0.9z M1028.6 645.8h0.9v0.9h-0.9z M1118.0 632.3h0.9v0.9h-0.9z M1098.6 635.8h0.9v0.9h-0.9z M1032.8 634.5h0.9v0.9h-0.9z M1063.1 638.3h0.9v0.9h-0.9z M988.3 642.2h0.9v0.9h-0.9z M985.5 634.1h0.9v0.9h-0.9z M1030.0 649.1h0.9v0.9h-0.9z M1083.4 642.3h0.9v0.9h-0.9z M1038.5 633.6h0.9v0.9h-0.9z M1045.4 639.0h0.9v0.9h-0.9z M1043.9 639.8h0.9v0.9h-0.9z M1002.0 635.7h0.9v0.9h-0.9z M1024.8 627.9h0.9v0.9h-0.9z M981.9 646.2h0.9v0.9h-0.9z M1017.6 645.4h0.9v0.9h-0.9z M1094.2 643.8h0.9v0.9h-0.9z M1037.3 649.0h0.9v0.9h-0.9z M1049.8 627.1h0.9v0.9h-0.9z M1085.8 639.1h0.9v0.9h-0.9z M1043.9 645.6h0.9v0.9h-0.9z M1069.6 652.2h0.9v0.9h-0.9z M1060.7 630.3h0.9v0.9h-0.9z M1065.7 646.5h0.9v0.9h-0.9z M967.2 644.9h0.9v0.9h-0.9z M1061.8 644.6h0.9v0.9h-0.9z M1027.2 635.0h0.9v0.9h-0.9z M1053.4 632.0h0.9v0.9h-0.9z M1088.3 630.3h0.9v0.9h-0.9z M1050.4 643.9h0.9v0.9h-0.9z M1010.0 629.7h0.9v0.9h-0.9z M1104.0 652.8h0.9v0.9h-0.9z M1060.2 648.2h0.9v0.9h-0.9z M1033.6 633.6h0.9v0.9h-0.9z M1045.8 626.5h0.9v0.9h-0.9z M1050.0 647.8h0.9v0.9h-0.9z M1016.0 651.8h0.9v0.9h-0.9z M984.3 633.0h0.9v0.9h-0.9z M1059.2 641.5h0.9v0.9h-0.9z M1096.8 626.5h0.9v0.9h-0.9z M1088.1 627.8h0.9v0.9h-0.9z M1089.7 643.3h0.9v0.9h-0.9z M968.4 650.5h0.9v0.9h-0.9z M1010.3 639.6h0.9v0.9h-0.9z M1109.3 636.4h0.9v0.9h-0.9z M978.1 631.8h0.9v0.9h-0.9z M1078.5 629.9h0.9v0.9h-0.9z M1013.9 632.0h0.9v0.9h-0.9z M1032.9 629.4h0.9v0.9h-0.9z M1114.1 650.9h0.9v0.9h-0.9z M982.9 630.0h0.9v0.9h-0.9z M1050.3 652.8h0.9v0.9h-0.9z M1084.0 630.1h0.9v0.9h-0.9z M1093.8 627.1h0.9v0.9h-0.9z M1042.1 646.1h0.9v0.9h-0.9z M1030.7 643.3h0.9v0.9h-0.9z M1074.3 630.9h0.9v0.9h-0.9z M985.8 634.3h0.9v0.9h-0.9z M979.4 630.4h0.9v0.9h-0.9z M972.5 635.0h0.9v0.9h-0.9z M1072.1 630.6h0.9v0.9h-0.9z M1037.0 628.9h0.9v0.9h-0.9z M996.6 635.8h0.9v0.9h-0.9z M1109.6 631.4h0.9v0.9h-0.9z M985.0 649.6h0.9v0.9h-0.9z M1016.0 637.2h0.9v0.9h-0.9z M1034.4 639.3h0.9v0.9h-0.9z M970.3 644.5h0.9v0.9h-0.9z M1103.3 630.6h0.9v0.9h-0.9z M1102.2 647.8h0.9v0.9h-0.9z M1061.7 644.0h0.9v0.9h-0.9z M1034.3 643.1h0.9v0.9h-0.9z M1104.1 647.5h0.9v0.9h-0.9z M1049.7 650.3h0.9v0.9h-0.9z M968.7 638.1h0.9v0.9h-0.9z M970.1 643.4h0.9v0.9h-0.9z M1066.9 640.1h0.9v0.9h-0.9z M989.0 627.3h0.9v0.9h-0.9z M1086.1 640.2h0.9v0.9h-0.9z M1042.1 644.9h0.9v0.9h-0.9z M990.4 643.8h0.9v0.9h-0.9z M1042.6 651.4h0.9v0.9h-0.9z M1073.2 651.8h0.9v0.9h-0.9z M1094.9 636.0h0.9v0.9h-0.9z M1073.8 631.2h0.9v0.9h-0.9z M1024.4 644.2h0.9v0.9h-0.9z M1017.3 639.2h0.9v0.9h-0.9z M1054.7 652.9h0.9v0.9h-0.9z M991.1 650.6h0.9v0.9h-0.9z M995.6 653.3h0.9v0.9h-0.9z M998.6 644.3h0.9v0.9h-0.9z M1060.0 626.1h0.9v0.9h-0.9z M1054.7 635.0h0.9v0.9h-0.9z M1064.2 641.4h0.9v0.9h-0.9z M1088.3 635.3h0.9v0.9h-0.9z M1053.7 641.0h0.9v0.9h-0.9z M1111.2 649.6h0.9v0.9h-0.9z M1116.8 639.5h0.9v0.9h-0.9z M1092.5 627.3h0.9v0.9h-0.9z M1031.6 628.3h0.9v0.9h-0.9z M1029.5 634.1h0.9v0.9h-0.9z M1043.7 645.4h0.9v0.9h-0.9z M967.3 642.2h0.9v0.9h-0.9z M986.9 636.4h0.9v0.9h-0.9z M1099.7 642.7h0.9v0.9h-0.9z M1032.7 650.3h0.9v0.9h-0.9z M1089.6 628.2h0.9v0.9h-0.9z M1034.8 636.1h0.9v0.9h-0.9z M972.0 648.9h0.9v0.9h-0.9z M1012.1 627.8h0.9v0.9h-0.9z M1005.8 647.5h0.9v0.9h-0.9z M997.8 640.0h0.9v0.9h-0.9z M1042.7 640.5h0.9v0.9h-0.9z M1083.4 645.0h0.9v0.9h-0.9z M1065.0 633.6h0.9v0.9h-0.9z M1064.3 634.7h0.9v0.9h-0.9z M1070.4 645.2h0.9v0.9h-0.9z M1112.2 627.3h0.9v0.9h-0.9z M1093.6 648.3h0.9v0.9h-0.9z M1011.4 642.6h0.9v0.9h-0.9z M1098.0 646.3h0.9v0.9h-0.9z M1109.0 635.7h0.9v0.9h-0.9z M1095.9 649.6h0.9v0.9h-0.9z M1006.1 639.9h0.9v0.9h-0.9z M1034.2 626.7h0.9v0.9h-0.9z M979.0 647.8h0.9v0.9h-0.9z M1100.8 631.9h0.9v0.9h-0.9z M1057.9 650.1h0.9v0.9h-0.9z M978.8 634.0h0.9v0.9h-0.9z M1094.2 642.7h0.9v0.9h-0.9z M1111.9 643.7h0.9v0.9h-0.9z M1081.7 643.7h0.9v0.9h-0.9z M1093.9 633.2h0.9v0.9h-0.9z M991.5 650.9h0.9v0.9h-0.9z M1000.5 649.6h0.9v0.9h-0.9z M1000.6 633.1h0.9v0.9h-0.9z M975.9 630.4h0.9v0.9h-0.9z M1118.0 634.3h0.9v0.9h-0.9z M1117.5 627.7h0.9v0.9h-0.9z M1024.8 643.2h0.9v0.9h-0.9z M1113.6 631.8h0.9v0.9h-0.9z M1029.8 638.9h0.9v0.9h-0.9z M1014.1 627.7h0.9v0.9h-0.9z M1024.9 643.9h0.9v0.9h-0.9z M1039.6 640.6h0.9v0.9h-0.9z M996.4 633.1h0.9v0.9h-0.9z M1045.7 629.3h0.9v0.9h-0.9z M1014.9 650.5h0.9v0.9h-0.9z M1105.6 650.7h0.9v0.9h-0.9z M1037.9 651.7h0.9v0.9h-0.9z M1052.2 628.7h0.9v0.9h-0.9z M1042.2 652.8h0.9v0.9h-0.9z M1016.5 635.4h0.9v0.9h-0.9z M981.1 636.4h0.9v0.9h-0.9z M983.6 652.7h0.9v0.9h-0.9z M1042.3 633.8h0.9v0.9h-0.9z M1016.8 641.9h0.9v0.9h-0.9z M993.7 647.2h0.9v0.9h-0.9z M1014.9 638.6h0.9v0.9h-0.9z M1111.9 638.5h0.9v0.9h-0.9z M1022.7 647.4h0.9v0.9h-0.9z M1109.1 645.1h0.9v0.9h-0.9z M1039.6 651.6h0.9v0.9h-0.9z M996.6 652.3h0.9v0.9h-0.9z M1067.6 630.8h0.9v0.9h-0.9z M995.2 631.2h0.9v0.9h-0.9z M1011.1 645.5h0.9v0.9h-0.9z M1074.3 642.1h0.9v0.9h-0.9z M1030.5 631.8h0.9v0.9h-0.9z M977.4 640.2h0.9v0.9h-0.9z M1067.2 646.7h0.9v0.9h-0.9z M1002.6 629.0h0.9v0.9h-0.9z M1010.1 628.8h0.9v0.9h-0.9z M995.9 642.0h0.9v0.9h-0.9z M1068.0 633.3h0.9v0.9h-0.9z M1114.7 628.4h0.9v0.9h-0.9z M1009.2 650.6h0.9v0.9h-0.9z M1071.9 640.2h0.9v0.9h-0.9z M1019.8 645.5h0.9v0.9h-0.9z M1047.5 631.0h0.9v0.9h-0.9z M1053.7 653.2h0.9v0.9h-0.9z M1104.2 632.2h0.9v0.9h-0.9z M998.6 629.3h0.9v0.9h-0.9z M1055.5 646.3h0.9v0.9h-0.9z M1111.9 644.6h0.9v0.9h-0.9z M1025.0 653.3h0.9v0.9h-0.9z M970.7 642.4h0.9v0.9h-0.9z M1072.6 637.7h0.9v0.9h-0.9z M1092.6 650.5h0.9v0.9h-0.9z M1044.7 637.8h0.9v0.9h-0.9z M1098.9 626.6h0.9v0.9h-0.9z M970.7 627.5h0.9v0.9h-0.9z M1031.5 640.6h0.9v0.9h-0.9z M1025.1 636.2h0.9v0.9h-0.9z M1022.1 629.7h0.9v0.9h-0.9z M1106.2 636.2h0.9v0.9h-0.9z M1049.2 630.5h0.9v0.9h-0.9z M989.6 629.0h0.9v0.9h-0.9z M1087.6 629.4h0.9v0.9h-0.9z M1013.6 641.6h0.9v0.9h-0.9z M981.2 639.7h0.9v0.9h-0.9z M1037.0 646.6h0.9v0.9h-0.9z M1077.1 632.5h0.9v0.9h-0.9z M987.9 651.5h0.9v0.9h-0.9z M967.5 650.6h0.9v0.9h-0.9z M1020.9 647.3h0.9v0.9h-0.9z M1093.4 642.2h0.9v0.9h-0.9z M1031.8 639.1h0.9v0.9h-0.9z M972.9 652.8h0.9v0.9h-0.9z M1117.4 627.3h0.9v0.9h-0.9z M1116.6 632.6h0.9v0.9h-0.9z M972.3 651.4h0.9v0.9h-0.9z M996.7 633.1h0.9v0.9h-0.9z M1084.2 646.7h0.9v0.9h-0.9z M1018.1 628.2h0.9v0.9h-0.9z M1081.2 628.0h0.9v0.9h-0.9z M1084.9 638.3h0.9v0.9h-0.9z M1070.8 630.7h0.9v0.9h-0.9z M1032.2 651.6h0.9v0.9h-0.9z M982.7 640.1h0.9v0.9h-0.9z M1107.6 642.1h0.9v0.9h-0.9z M1042.2 653.2h0.9v0.9h-0.9z M1078.2 646.4h0.9v0.9h-0.9z M1091.0 647.7h0.9v0.9h-0.9z M1009.9 627.1h0.9v0.9h-0.9z M973.9 640.3h0.9v0.9h-0.9z M1080.2 631.3h0.9v0.9h-0.9z M1028.0 632.3h0.9v0.9h-0.9z M998.4 633.1h0.9v0.9h-0.9z M1035.5 632.6h0.9v0.9h-0.9z M1037.5 645.3h0.9v0.9h-0.9z M1067.1 628.8h0.9v0.9h-0.9z M1028.6 640.7h0.9v0.9h-0.9z M1010.3 636.0h0.9v0.9h-0.9z M1004.3 644.2h0.9v0.9h-0.9z M1016.8 627.0h0.9v0.9h-0.9z M1029.9 649.2h0.9v0.9h-0.9z M977.1 628.3h0.9v0.9h-0.9z M975.2 631.3h0.9v0.9h-0.9z M1006.6 643.3h0.9v0.9h-0.9z M1024.7 644.7h0.9v0.9h-0.9z M1005.0 628.7h0.9v0.9h-0.9z" fill="#666"/>
<line x1="988" y1="626" x2="988" y2="653.5" stroke="#7d7d7d" stroke-width="1"/>
<line x1="1015" y1="626" x2="1015" y2="653.5" stroke="#7d7d7d" stroke-width="1"/>
<line x1="1042" y1="626" x2="1042" y2="653.5" stroke="#7d7d7d" stroke-width="1"/>
<line x1="1069" y1="626" x2="1069" y2="653.5" stroke="#7d7d7d" stroke-width="1"/>
<line x1="1097" y1="626" x2="1097" y2="653.5" stroke="#7d7d7d" stroke-width="1"/>
<line x1="966.6" y1="571.5" x2="1118.5" y2="571.5" stroke="#00e600" stroke-width="1.3"/>
<line x1="966.6" y1="598.5" x2="1118.5" y2="598.5" stroke="#00e600" stroke-width="1.3"/>
<line x1="966.6" y1="626" x2="1118.5" y2="626" stroke="#ff2020" stroke-width="1.3"/>
<line x1="966.6" y1="653.5" x2="1118.5" y2="653.5" stroke="#ff2020" stroke-width="1.3"/>
<line x1="966.6" y1="530" x2="1118.5" y2="530" stroke="#1f1fff" stroke-width="1.3" stroke-dasharray="7 2.5 1.5 2.5"/>
<line x1="966.6" y1="530" x2="966.6" y2="659" stroke="#1f1fff" stroke-width="1.3" stroke-dasharray="7 2.5 1.5 2.5"/>
<line x1="1118.5" y1="530" x2="1118.5" y2="659" stroke="#1f1fff" stroke-width="1.3" stroke-dasharray="7 2.5 1.5 2.5"/>
<rect x="1034" y="548" width="17" height="5" stroke="#ff00ff" stroke-width="1" fill="none"/>
<text x="1036" y="552.1" font-size="3.5" fill="#00e600" font-family="Liberation Sans" font-weight="bold" textLength="13" lengthAdjust="spacingAndGlyphs">74UE6</text>
<rect x="1034" y="582" width="17" height="5" stroke="#ff00ff" stroke-width="1" fill="none"/>
<text x="1036" y="586.1" font-size="3.5" fill="#00e600" font-family="Liberation Sans" font-weight="bold" textLength="13" lengthAdjust="spacingAndGlyphs">IKE63</text>
<rect x="988" y="616" width="17" height="5" stroke="#ff00ff" stroke-width="1" fill="none"/>
<text x="990" y="620.1" font-size="3.5" fill="#00e600" font-family="Liberation Sans" font-weight="bold" textLength="13" lengthAdjust="spacingAndGlyphs">IBMCE</text>
<rect x="1034" y="636" width="17" height="5" stroke="#ff00ff" stroke-width="1" fill="none"/>
<text x="1036" y="640.1" font-size="3.5" fill="#00e600" font-family="Liberation Sans" font-weight="bold" textLength="13" lengthAdjust="spacingAndGlyphs">HWRDP</text>
<text x="1034" y="624.1" font-size="4.4" fill="#00e600" font-family="Liberation Sans" font-weight="bold" textLength="21" lengthAdjust="spacingAndGlyphs">TYLZ2TL4</text>
<line x1="942" y1="571.5" x2="942" y2="654" stroke="#7d7d7d" stroke-width="0.9"/>
<line x1="939" y1="571.5" x2="961" y2="571.5" stroke="#7d7d7d" stroke-width="0.9"/>
<path d="M940 573.5 L944 569.5" stroke="#1f1fff" stroke-width="1"/>
<line x1="939" y1="598.5" x2="961" y2="598.5" stroke="#7d7d7d" stroke-width="0.9"/>
<path d="M940 600.5 L944 596.5" stroke="#1f1fff" stroke-width="1"/>
<line x1="939" y1="626" x2="961" y2="626" stroke="#7d7d7d" stroke-width="0.9"/>
<path d="M940 628 L944 624" stroke="#1f1fff" stroke-width="1"/>
<line x1="939" y1="653.5" x2="961" y2="653.5" stroke="#7d7d7d" stroke-width="0.9"/>
<path d="M940 655.5 L944 651.5" stroke="#1f1fff" stroke-width="1"/>
<text transform="translate(941.6 584.5) rotate(-90)" font-size="5.2" fill="#00e600" font-family="Liberation Sans" font-weight="bold" text-anchor="middle" textLength="9" lengthAdjust="spacingAndGlyphs">720</text>
<text transform="translate(941.6 611.5) rotate(-90)" font-size="5.2" fill="#00e600" font-family="Liberation Sans" font-weight="bold" text-anchor="middle" textLength="9" lengthAdjust="spacingAndGlyphs">218</text>
<text transform="translate(941.6 638.5) rotate(-90)" font-size="5.2" fill="#00e600" font-family="Liberation Sans" font-weight="bold" text-anchor="middle" textLength="9" lengthAdjust="spacingAndGlyphs">632</text>
<path d="M1104 548 L1146 548" stroke="#7d7d7d" stroke-width="0.9" fill="none"/>
<text x="1148" y="549.2" font-size="4.5" fill="#00e600" font-family="Liberation Sans" font-weight="bold" textLength="42" lengthAdjust="spacingAndGlyphs">SHH0FPAKCYFVW4NV9</text>
<text x="1148" y="553.7" font-size="4.5" fill="#00e600" font-family="Liberation Sans" font-weight="bold" textLength="43" lengthAdjust="spacingAndGlyphs">O6XIZY8PT8I8B23MC</text>
<path d="M1104 585 L1146 585" stroke="#7d7d7d" stroke-width="0.9" fill="none"/>
<text x="1148" y="586.2" font-size="4.5" fill="#00e600" font-family="Liberation Sans" font-weight="bold" textLength="19" lengthAdjust="spacingAndGlyphs">UTH4Z96</text>
<text x="1148" y="590.7" font-size="4.5" fill="#00e600" font-family="Liberation Sans" font-weight="bold" textLength="41" lengthAdjust="spacingAndGlyphs">R80UU1CS6WO4YV5ZF</text>
<path d="M1104 617 L1146 617" stroke="#7d7d7d" stroke-width="0.9" fill="none"/>
<text x="1148" y="618.2" font-size="4.5" fill="#00e600" font-family="Liberation Sans" font-weight="bold" textLength="43" lengthAdjust="spacingAndGlyphs">ZOP3SZBTDXZ2C39VP</text>
<text x="1148" y="622.7" font-size="4.5" fill="#00e600" font-family="Liberation Sans" font-weight="bold" textLength="43" lengthAdjust="spacingAndGlyphs">XX6GM7GZNT7CIX24U</text>
<path d="M1104 640 L1146 640" stroke="#7d7d7d" stroke-width="0.9" fill="none"/>
<text x="1148" y="641.2" font-size="4.5" fill="#00e600" font-family="Liberation Sans" font-weight="bold" textLength="19" lengthAdjust="spacingAndGlyphs">2KWKMLY</text>
<text x="1148" y="645.7" font-size="4.5" fill="#00e600" font-family="Liberation Sans" font-weight="bold" textLength="41" lengthAdjust="spacingAndGlyphs">TDRXCMD33NKZ8HHT4</text>
<circle cx="983.2" cy="680.6" r="10" fill="#fff" stroke="#1f1fff" stroke-width="1.4"/>
<line x1="973.2" y1="680.6" x2="1030.2" y2="680.6" stroke="#1f1fff" stroke-width="1.5"/>
<text x="983.2" y="679.4" font-size="8.5" fill="#1f1fff" text-anchor="middle" font-family="Liberation Sans" font-weight="bold">4</text>
<text x="976.2" y="685.8" font-size="5.2" fill="#00e600" font-family="Liberation Sans" font-weight="bold" textLength="14" lengthAdjust="spacingAndGlyphs">81SB1</text>
<text x="998.7" y="679.6" font-size="9" fill="#1f1fff" font-family="Liberation Sans" font-weight="bold" textLength="20" lengthAdjust="spacingAndGlyphs">DETAIL</text>
<text x="998.7" y="685.8" font-size="4.9" fill="#00e600" font-family="Liberation Sans" font-weight="bold" textLength="17.0" lengthAdjust="spacingAndGlyphs">0M0AZHW</text>
<path d="M966.8 725.5 C980 724 990 727 1005 725 C1020 723 1030 727 1050 725 L1075 725" stroke="#888" stroke-width="1.2" fill="none"/>
<line x1="1075" y1="725.3" x2="1200" y2="725.3" stroke="#7d7d7d" stroke-width="1" stroke-dasharray="7 3 2 3"/>
<line x1="966.8" y1="720" x2="966.8" y2="852" stroke="#1f1fff" stroke-width="1.3" stroke-dasharray="7 2.5 1.5 2.5"/>
<line x1="1177" y1="780" x2="1177" y2="852" stroke="#1f1fff" stroke-width="1.3" stroke-dasharray="7 2.5 1.5 2.5"/>
<line x1="996" y1="725" x2="996" y2="753" stroke="#7d7d7d" stroke-width="0.9"/>
<line x1="1025" y1="725" x2="1025" y2="753" stroke="#7d7d7d" stroke-width="0.9"/>
<line x1="1050" y1="725" x2="1050" y2="753" stroke="#7d7d7d" stroke-width="0.9"/>
<line x1="966.8" y1="753" x2="1050" y2="753" stroke="#ff2020" stroke-width="1.4"/>
<line x1="966.8" y1="756" x2="1050" y2="756" stroke="#ff2020" stroke-width="0.8"/>
<line x1="966.8" y1="762" x2="1050" y2="762" stroke="#00e600" stroke-width="1.2"/>
<path d="M967.5 762V816 M975.9 762V816 M984.3 762V816 M992.7 762V816 M1001.1 762V816 M1009.5 762V816 M1017.9 762V816 M1026.3 762V816 M1034.7 762V816 M1043.1 762V816" stroke="#8a8a8a" stroke-width="0.9"/>
<text x="995" y="794" font-size="4" fill="#00e600" font-family="Liberation Sans" font-weight="bold" text-anchor="start"></text>
<text x="993" y="794.9" font-size="4.0" fill="#00e600" font-family="Liberation Sans" font-weight="bold" textLength="28" lengthAdjust="spacingAndGlyphs">XICNOBPUGNR</text>
<path d="M1050 732 L1072 725 V816 H1050 Z" fill="#fff" stroke="#777" stroke-width="2"/>
<clipPath id="cpw"><path d="M1054 736 L1069 731 V815 H1054 Z"/></clipPath><g clip-path="url(#cpw)">
<path d="M1050 735 L1075 710 M1050 740 L1075 715 M1050 745 L1075 720 M1050 750 L1075 725 M1050 755 L1075 730 M1050 760 L1075 735 M1050 765 L1075 740 M1050 770 L1075 745 M1050 775 L1075 750 M1050 780 L1075 755 M1050 785 L1075 760 M1050 790 L1075 765 M1050 795 L1075 770 M1050 800 L1075 775 M1050 805 L1075 780 M1050 810 L1075 785 M1050 815 L1075 790 M1050 820 L1075 795 M1050 825 L1075 800 M1050 830 L1075 805 M1050 835 L1075 810 M1050 840 L1075 815" stroke="#666" stroke-width="0.8"/></g>
<path d="M1054 736 L1069 731 V815 M1054 736 V816" stroke="#00e600" stroke-width="1" fill="none"/>
<path d="M1048 732 L1072 723" stroke="#ff2020" stroke-width="1.4"/>
<line x1="1075" y1="740" x2="1075" y2="810" stroke="#ff2020" stroke-width="1.2"/>
<rect x="1103" y="780" width="27" height="36" stroke="#777" stroke-width="2" fill="#fff"/>
<clipPath id="cpw2"><rect x="1106" y="785" width="21" height="31"/></clipPath><g clip-path="url(#cpw2)">
<path d="M1100 790 L1135 755 M1100 796 L1135 761 M1100 802 L1135 767 M1100 808 L1135 773 M1100 814 L1135 779 M1100 820 L1135 785 M1100 826 L1135 791 M1100 832 L1135 797 M1100 838 L1135 803 M1100 844 L1135 809 M1100 850 L1135 815 M1100 856 L1135 821" stroke="#666" stroke-width="0.8"/></g>
<rect x="1106" y="785" width="21" height="31" stroke="#00e600" stroke-width="1" fill="none"/>
<path d="M1100 781 V816 M1133 781 V816" stroke="#ff2020" stroke-width="1.3"/>
<line x1="1131" y1="780" x2="1177" y2="780" stroke="#ff2020" stroke-width="1.4"/>
<line x1="1131" y1="802" x2="1177" y2="802" stroke="#ff2020" stroke-width="1.4"/>
<line x1="1075" y1="810" x2="1103" y2="810" stroke="#777" stroke-width="1.4"/>
<line x1="966.8" y1="816.6" x2="1177" y2="816.6" stroke="#1f1fff" stroke-width="1.5"/>
<path d="M1016.0 829.3h1v1h-1z M1087.7 823.8h1v1h-1z M974.6 823.8h1v1h-1z M1102.3 829.6h1v1h-1z M1074.1 819.6h1v1h-1z M1011.7 823.5h1v1h-1z M1054.5 824.6h1v1h-1z M1156.5 819.4h1v1h-1z M1174.1 822.0h1v1h-1z M1146.9 822.1h1v1h-1z M1090.3 824.9h1v1h-1z M975.0 833.7h1v1h-1z M1137.2 822.7h1v1h-1z M1130.0 827.1h1v1h-1z M1174.3 818.1h1v1h-1z M1046.9 821.8h1v1h-1z M1098.2 833.3h1v1h-1z M1143.9 828.5h1v1h-1z M1048.3 833.8h1v1h-1z M989.0 822.5h1v1h-1z M1125.1 826.2h1v1h-1z M1175.5 818.9h1v1h-1z M1064.0 821.5h1v1h-1z M967.4 819.0h1v1h-1z M986.1 824.7h1v1h-1z M1057.8 827.7h1v1h-1z M1027.8 831.7h1v1h-1z M1075.4 837.6h1v1h-1z M1002.5 827.7h1v1h-1z M1070.7 824.8h1v1h-1z M1147.9 821.4h1v1h-1z M1151.3 824.5h1v1h-1z M1037.5 829.9h1v1h-1z M1085.3 823.0h1v1h-1z M984.7 837.1h1v1h-1z M1044.6 819.4h1v1h-1z M1104.9 828.2h1v1h-1z M1035.8 823.9h1v1h-1z M1144.5 824.1h1v1h-1z M1054.7 837.1h1v1h-1z M1042.8 825.4h1v1h-1z M1001.0 830.9h1v1h-1z M1106.6 826.4h1v1h-1z M1052.2 821.9h1v1h-1z M1132.9 826.6h1v1h-1z M1141.7 824.9h1v1h-1z M1121.0 817.6h1v1h-1z M1013.1 837.2h1v1h-1z M1110.3 831.2h1v1h-1z M1071.4 826.9h1v1h-1z M1008.5 820.6h1v1h-1z M1102.5 831.6h1v1h-1z M1021.3 830.5h1v1h-1z M995.6 829.9h1v1h-1z M1003.0 827.7h1v1h-1z M1032.9 828.6h1v1h-1z M995.1 827.2h1v1h-1z M1096.5 819.8h1v1h-1z M1031.8 831.3h1v1h-1z M1081.7 830.0h1v1h-1z M1130.8 829.0h1v1h-1z M1013.7 826.3h1v1h-1z M1141.3 828.9h1v1h-1z M1125.2 824.6h1v1h-1z M1061.2 837.4h1v1h-1z M1139.7 830.7h1v1h-1z M989.4 829.8h1v1h-1z M974.0 836.6h1v1h-1z M1171.1 832.3h1v1h-1z M1023.2 834.8h1v1h-1z M1004.2 834.4h1v1h-1z M1076.3 817.3h1v1h-1z M1154.0 826.2h1v1h-1z M1141.3 831.5h1v1h-1z M1078.9 835.1h1v1h-1z M1009.6 835.9h1v1h-1z M1038.2 817.5h1v1h-1z M1037.7 818.4h1v1h-1z M982.2 830.1h1v1h-1z M992.4 820.4h1v1h-1z M1028.4 822.9h1v1h-1z M1160.2 836.0h1v1h-1z M1149.7 837.8h1v1h-1z M1059.4 833.7h1v1h-1z M1026.0 836.5h1v1h-1z M1137.2 832.4h1v1h-1z M1014.8 818.9h1v1h-1z M1161.3 828.6h1v1h-1z M1095.6 835.1h1v1h-1z M997.1 831.7h1v1h-1z M1064.4 833.5h1v1h-1z M1062.7 821.1h1v1h-1z M1167.8 822.9h1v1h-1z M1123.4 834.5h1v1h-1z M1019.0 831.6h1v1h-1z M1050.2 821.7h1v1h-1z M1012.6 837.0h1v1h-1z M1044.3 827.7h1v1h-1z M1072.3 817.6h1v1h-1z M1125.2 832.6h1v1h-1z M1150.9 824.5h1v1h-1z M1011.0 824.3h1v1h-1z M1120.8 830.8h1v1h-1z M1052.3 828.0h1v1h-1z M999.4 836.3h1v1h-1z M1066.1 827.6h1v1h-1z M1132.3 821.2h1v1h-1z M1118.7 824.4h1v1h-1z M1137.6 819.0h1v1h-1z M1025.0 830.3h1v1h-1z M1068.3 824.9h1v1h-1z M1088.5 821.6h1v1h-1z M1058.8 817.0h1v1h-1z M1134.7 822.3h1v1h-1z M1141.4 828.6h1v1h-1z M1093.3 830.1h1v1h-1z M993.3 833.3h1v1h-1z M1028.3 835.1h1v1h-1z M1132.1 831.2h1v1h-1z M1138.2 826.2h1v1h-1z" fill="#666"/>
<path d="M966.8 838 H1094 V905 H1148.8 V838 H1177" stroke="#1f1fff" stroke-width="1.5" fill="none"/>
<path d="M1130.4 901.8h1v1h-1z M1104.2 844.7h1v1h-1z M1116.2 872.1h1v1h-1z M1102.1 852.8h1v1h-1z M1140.8 864.0h1v1h-1z M1102.0 850.3h1v1h-1z M1125.2 850.7h1v1h-1z M1119.7 874.0h1v1h-1z M1117.7 871.7h1v1h-1z M1139.2 839.1h1v1h-1z M1144.2 851.3h1v1h-1z M1096.1 889.4h1v1h-1z M1124.8 874.0h1v1h-1z M1105.8 890.3h1v1h-1z M1110.5 886.7h1v1h-1z M1106.3 876.4h1v1h-1z M1129.0 862.9h1v1h-1z M1119.9 842.4h1v1h-1z M1128.7 884.3h1v1h-1z M1102.3 874.9h1v1h-1z M1133.6 844.8h1v1h-1z M1139.3 896.3h1v1h-1z M1096.7 854.6h1v1h-1z M1098.5 854.9h1v1h-1z M1098.7 870.8h1v1h-1z M1107.5 858.1h1v1h-1z M1118.9 862.9h1v1h-1z M1136.6 886.4h1v1h-1z M1100.2 853.0h1v1h-1z M1094.4 860.1h1v1h-1z M1099.8 884.7h1v1h-1z M1136.1 904.7h1v1h-1z M1105.3 840.5h1v1h-1z M1134.9 865.6h1v1h-1z M1144.3 864.3h1v1h-1z M1110.9 842.9h1v1h-1z M1145.2 872.3h1v1h-1z M1117.8 867.3h1v1h-1z M1135.5 893.7h1v1h-1z M1119.7 849.9h1v1h-1z M1115.9 897.7h1v1h-1z M1116.0 882.3h1v1h-1z M1124.2 868.9h1v1h-1z M1125.0 854.4h1v1h-1z M1124.1 895.9h1v1h-1z M1098.3 862.7h1v1h-1z M1141.6 903.5h1v1h-1z M1094.7 880.0h1v1h-1z M1128.1 894.5h1v1h-1z M1119.4 846.8h1v1h-1z M1110.2 885.8h1v1h-1z M1133.3 851.7h1v1h-1z M1128.7 882.0h1v1h-1z M1129.5 839.5h1v1h-1z M1117.8 859.8h1v1h-1z M1126.2 860.6h1v1h-1z M1100.9 882.9h1v1h-1z M1109.5 891.0h1v1h-1z M1110.5 874.6h1v1h-1z M1137.6 845.7h1v1h-1z M1133.5 842.6h1v1h-1z M1144.6 839.7h1v1h-1z M1133.1 862.7h1v1h-1z M1103.7 864.5h1v1h-1z M1121.1 865.8h1v1h-1z M1100.6 873.0h1v1h-1z M1110.2 902.8h1v1h-1z M1114.7 867.2h1v1h-1z M1106.3 902.9h1v1h-1z M1111.4 881.3h1v1h-1z M1139.0 864.3h1v1h-1z M1134.8 856.7h1v1h-1z M1099.9 840.8h1v1h-1z M1118.2 896.6h1v1h-1z M1105.0 867.5h1v1h-1z M1135.2 856.5h1v1h-1z M1102.2 872.8h1v1h-1z M1117.0 900.9h1v1h-1z M1142.5 853.9h1v1h-1z M1124.3 865.9h1v1h-1z M1095.8 867.8h1v1h-1z M1143.4 858.3h1v1h-1z M1125.7 885.6h1v1h-1z M1097.4 899.9h1v1h-1z M1099.9 858.2h1v1h-1z M1132.7 839.3h1v1h-1z M1114.3 846.5h1v1h-1z M1119.6 839.1h1v1h-1z M1102.2 852.9h1v1h-1z M1098.4 844.1h1v1h-1z" fill="#666"/>
<path d="M1085 817 V850 C1085 855 1090 855 1092 850 M1098 817 V848" stroke="#8c4646" stroke-width="1" stroke-dasharray="3 2" fill="none"/>
<line x1="1121" y1="750" x2="1121" y2="817" stroke="#888" stroke-width="1" stroke-dasharray="8 3 2 3"/>
<line x1="1121" y1="817" x2="1121" y2="905" stroke="#888" stroke-width="1"/>
<line x1="1121" y1="905" x2="1121" y2="920" stroke="#888" stroke-width="1" stroke-dasharray="4 2"/>
<line x1="1094" y1="735" x2="1200" y2="735" stroke="#7d7d7d" stroke-width="0.8"/>
<line x1="1033" y1="725" x2="1200" y2="725" stroke="#7d7d7d" stroke-width="0.8"/>
<line x1="1049" y1="703.5" x2="1131" y2="703.5" stroke="#7d7d7d" stroke-width="0.9"/>
<line x1="1049" y1="700" x2="1049" y2="707" stroke="#7d7d7d" stroke-width="0.8"/>
<path d="M1047 705 L1051 701" stroke="#1f1fff" stroke-width="1"/>
<line x1="1076" y1="700" x2="1076" y2="707" stroke="#7d7d7d" stroke-width="0.8"/>
<path d="M1074 705 L1078 701" stroke="#1f1fff" stroke-width="1"/>
<line x1="1103" y1="700" x2="1103" y2="707" stroke="#7d7d7d" stroke-width="0.8"/>
<path d="M1101 705 L1105 701" stroke="#1f1fff" stroke-width="1"/>
<line x1="1131" y1="700" x2="1131" y2="707" stroke="#7d7d7d" stroke-width="0.8"/>
<path d="M1129 705 L1133 701" stroke="#1f1fff" stroke-width="1"/>
<text x="1058" y="702.2" font-size="4.5" fill="#00e600" font-family="Liberation Sans" font-weight="bold" textLength="8" lengthAdjust="spacingAndGlyphs">N9E</text>
<text x="1085" y="702.2" font-size="4.5" fill="#00e600" font-family="Liberation Sans" font-weight="bold" textLength="8" lengthAdjust="spacingAndGlyphs">IU2</text>
<text x="1112" y="702.2" font-size="4.5" fill="#00e600" font-family="Liberation Sans" font-weight="bold" textLength="8" lengthAdjust="spacingAndGlyphs">4SR</text>
<line x1="942" y1="725" x2="942" y2="816" stroke="#7d7d7d" stroke-width="0.9"/>
<line x1="939" y1="725" x2="960" y2="725" stroke="#7d7d7d" stroke-width="0.9"/>
<path d="M940 727 L944 723" stroke="#1f1fff" stroke-width="1"/>
<line x1="939" y1="752" x2="960" y2="752" stroke="#7d7d7d" stroke-width="0.9"/>
<path d="M940 754 L944 750" stroke="#1f1fff" stroke-width="1"/>
<line x1="939" y1="779" x2="960" y2="779" stroke="#7d7d7d" stroke-width="0.9"/>
<path d="M940 781 L944 777" stroke="#1f1fff" stroke-width="1"/>
<line x1="939" y1="808" x2="960" y2="808" stroke="#7d7d7d" stroke-width="0.9"/>
<path d="M940 810 L944 806" stroke="#1f1fff" stroke-width="1"/>
<text transform="translate(941.6 737.5) rotate(-90)" font-size="5.2" fill="#00e600" font-family="Liberation Sans" font-weight="bold" text-anchor="middle" textLength="9" lengthAdjust="spacingAndGlyphs">509</text>
<text transform="translate(941.6 765.5) rotate(-90)" font-size="5.2" fill="#00e600" font-family="Liberation Sans" font-weight="bold" text-anchor="middle" textLength="9" lengthAdjust="spacingAndGlyphs">186</text>
<text transform="translate(941.6 793.5) rotate(-90)" font-size="5.2" fill="#00e600" font-family="Liberation Sans" font-weight="bold" text-anchor="middle" textLength="9" lengthAdjust="spacingAndGlyphs">490</text>
<line x1="1198" y1="725" x2="1198" y2="810" stroke="#7d7d7d" stroke-width="0.9"/>
<line x1="1180" y1="725" x2="1202" y2="725" stroke="#7d7d7d" stroke-width="0.9"/>
<line x1="1180" y1="779" x2="1202" y2="779" stroke="#7d7d7d" stroke-width="0.9"/>
<line x1="1180" y1="801" x2="1202" y2="801" stroke="#7d7d7d" stroke-width="0.9"/>
<line x1="1180" y1="808" x2="1202" y2="808" stroke="#7d7d7d" stroke-width="0.9"/>
<text transform="translate(1196.1 753.0) rotate(-90)" font-size="5.2" fill="#00e600" font-family="Liberation Sans" font-weight="bold" text-anchor="middle" textLength="8" lengthAdjust="spacingAndGlyphs">116</text>
<text transform="translate(1196.1 792.0) rotate(-90)" font-size="5.2" fill="#00e600" font-family="Liberation Sans" font-weight="bold" text-anchor="middle" textLength="8" lengthAdjust="spacingAndGlyphs">193</text>
<path d="M1030 694 L1146 694" stroke="#7d7d7d" stroke-width="0.9" fill="none"/>
<text x="1148" y="695.2" font-size="4.5" fill="#00e600" font-family="Liberation Sans" font-weight="bold" textLength="29" lengthAdjust="spacingAndGlyphs">T7UM3BU5WVT8</text>
<text x="1148" y="699.7" font-size="4.5" fill="#00e600" font-family="Liberation Sans" font-weight="bold" textLength="43" lengthAdjust="spacingAndGlyphs">FG97XPZHW88UVZR28</text>
<path d="M1063 713 L1146 713" stroke="#7d7d7d" stroke-width="0.9" fill="none"/>
<text x="1148" y="714.2" font-size="4.5" fill="#00e600" font-family="Liberation Sans" font-weight="bold" textLength="15" lengthAdjust="spacingAndGlyphs">TR35SO</text>
<text x="1148" y="718.7" font-size="4.5" fill="#00e600" font-family="Liberation Sans" font-weight="bold" textLength="43" lengthAdjust="spacingAndGlyphs">IIAFSMZSN15MGVGM6</text>
<path d="M1076 743 L1146 743" stroke="#7d7d7d" stroke-width="0.9" fill="none"/>
<text x="1148" y="744.2" font-size="4.5" fill="#00e600" font-family="Liberation Sans" font-weight="bold" textLength="43" lengthAdjust="spacingAndGlyphs">92CN113NZU1181N0K</text>
<path d="M1090 757 L1146 757" stroke="#7d7d7d" stroke-width="0.9" fill="none"/>
<text x="1148" y="758.2" font-size="4.5" fill="#00e600" font-family="Liberation Sans" font-weight="bold" textLength="15" lengthAdjust="spacingAndGlyphs">8X5CFR</text>
<path d="M1127 766 L1146 766" stroke="#7d7d7d" stroke-width="0.9" fill="none"/>
<text x="1148" y="767.2" font-size="4.5" fill="#00e600" font-family="Liberation Sans" font-weight="bold" textLength="15" lengthAdjust="spacingAndGlyphs">EMZT56</text>
<text x="1148" y="771.7" font-size="4.5" fill="#00e600" font-family="Liberation Sans" font-weight="bold" textLength="43" lengthAdjust="spacingAndGlyphs">XVZMMLFK9O6XG9KKP</text>
<path d="M1030 694 L1030 753" stroke="#7d7d7d" stroke-width="0.9" fill="none"/>
<path d="M1000 723 A5 3.5 0 0 0 1010 723 Z" fill="#1f1fff"/>
<path d="M1002 725.5 L1005 727.5 L1008 725.5 Z" fill="#ffff00"/>
<text x="1001" y="721.0" font-size="4.2" fill="#00e600" font-family="Liberation Sans" font-weight="bold" textLength="8" lengthAdjust="spacingAndGlyphs">XUV</text>
<path d="M1000 750 A5 3.5 0 0 0 1010 750 Z" fill="#1f1fff"/>
<path d="M1002 752.5 L1005 754.5 L1008 752.5 Z" fill="#ffff00"/>
<text x="1001" y="748.0" font-size="4.2" fill="#00e600" font-family="Liberation Sans" font-weight="bold" textLength="8" lengthAdjust="spacingAndGlyphs">FTO</text>
<path d="M1110 776 A5 3.5 0 0 0 1120 776 Z" fill="#1f1fff"/>
<path d="M1112 778.5 L1115 780.5 L1118 778.5 Z" fill="#ffff00"/>
<text x="1111" y="774.0" font-size="4.2" fill="#00e600" font-family="Liberation Sans" font-weight="bold" textLength="8" lengthAdjust="spacingAndGlyphs">1A3</text>
<path d="M1045 812 A5 3.5 0 0 0 1055 812 Z" fill="#1f1fff"/>
<path d="M1047 814.5 L1050 816.5 L1053 814.5 Z" fill="#ffff00"/>
<text x="1046" y="810.0" font-size="4.2" fill="#00e600" font-family="Liberation Sans" font-weight="bold" textLength="8" lengthAdjust="spacingAndGlyphs">P05</text>
<circle cx="983.6" cy="894.5" r="10" fill="#fff" stroke="#1f1fff" stroke-width="1.4"/>
<line x1="973.6" y1="894.5" x2="1030.6" y2="894.5" stroke="#1f1fff" stroke-width="1.5"/>
<text x="983.6" y="893.3" font-size="8.5" fill="#1f1fff" text-anchor="middle" font-family="Liberation Sans" font-weight="bold">5</text>
<text x="976.6" y="899.7" font-size="5.2" fill="#00e600" font-family="Liberation Sans" font-weight="bold" textLength="14" lengthAdjust="spacingAndGlyphs">A40AG</text>
<text x="999.1" y="893.5" font-size="9" fill="#1f1fff" font-family="Liberation Sans" font-weight="bold" textLength="20" lengthAdjust="spacingAndGlyphs">DETAIL</text>
<text x="999.1" y="899.7" font-size="4.9" fill="#00e600" font-family="Liberation Sans" font-weight="bold" textLength="17.0" lengthAdjust="spacingAndGlyphs">P1SRBG5</text>
<rect x="258.5" y="556.6" width="537.1" height="302.79999999999995" stroke="#1f1fff" stroke-width="1.4" fill="none" stroke-dasharray="7 2.5 1.5 2.5"/>
<line x1="291.4" y1="556" x2="291.4" y2="877" stroke="#8c4646" stroke-width="1.1" stroke-dasharray="9 3 2 3"/>
<line x1="431.3" y1="556" x2="431.3" y2="877" stroke="#8c4646" stroke-width="1.1" stroke-dasharray="9 3 2 3"/>
<line x1="510.7" y1="556" x2="510.7" y2="877" stroke="#8c4646" stroke-width="1.1" stroke-dasharray="9 3 2 3"/>
<line x1="650.5" y1="556" x2="650.5" y2="877" stroke="#8c4646" stroke-width="1.1" stroke-dasharray="9 3 2 3"/>
<line x1="730.4" y1="556" x2="730.4" y2="877" stroke="#8c4646" stroke-width="1.1"/>
<line x1="239" y1="767.7" x2="812" y2="767.7" stroke="#8c4646" stroke-width="1.1" stroke-dasharray="9 3 2 3"/>
<line x1="257" y1="734.8" x2="840" y2="734.8" stroke="#1f1fff" stroke-width="1.3" stroke-dasharray="8 3 2 3"/>
<line x1="634.5" y1="530" x2="634.5" y2="860" stroke="#1f1fff" stroke-width="1.3" stroke-dasharray="5 3 2 3"/>
<path d="M252 600.6H722M252 606H722M252.0 600.6V606M258.2 600.6V606M264.4 600.6V606M270.6 600.6V606M276.8 600.6V606M283.0 600.6V606M289.2 600.6V606M295.4 600.6V606M301.6 600.6V606M307.8 600.6V606M314.0 600.6V606M320.2 600.6V606M326.4 600.6V606M332.6 600.6V606M338.8 600.6V606M345.0 600.6V606M351.2 600.6V606M357.4 600.6V606M363.6 600.6V606M369.8 600.6V606M376.0 600.6V606M382.2 600.6V606M388.4 600.6V606M394.6 600.6V606M400.8 600.6V606M407.0 600.6V606M413.2 600.6V606M419.4 600.6V606M425.6 600.6V606M431.8 600.6V606M438.0 600.6V606M444.2 600.6V606M450.4 600.6V606M456.6 600.6V606M462.8 600.6V606M469.0 600.6V606M475.2 600.6V606M481.4 600.6V606M487.6 600.6V606M493.8 600.6V606M500.0 600.6V606M506.2 600.6V606M512.4 600.6V606M518.6 600.6V606M524.8 600.6V606M531.0 600.6V606M537.2 600.6V606M543.4 600.6V606M549.6 600.6V606M555.8 600.6V606M562.0 600.6V606M568.2 600.6V606M574.4 600.6V606M580.6 600.6V606M586.8 600.6V606M593.0 600.6V606M599.2 600.6V606M605.4 600.6V606M611.6 600.6V606M617.8 600.6V606M624.0 600.6V606M630.2 600.6V606M636.4 600.6V606M642.6 600.6V606M648.8 600.6V606M655.0 600.6V606M661.2 600.6V606M667.4 600.6V606M673.6 600.6V606M679.8 600.6V606M686.0 600.6V606M692.2 600.6V606M698.4 600.6V606M704.6 600.6V606M710.8 600.6V606M717.0 600.6V606" stroke="#8a8a8a" stroke-width="0.8" fill="none"/>
<line x1="252" y1="600.6" x2="722" y2="600.6" stroke="#00e600" stroke-width="1.3"/>
<line x1="252" y1="606" x2="722" y2="606" stroke="#00e600" stroke-width="1.3"/>
<line x1="243" y1="603.3" x2="722" y2="603.3" stroke="#777" stroke-width="0.9" stroke-dasharray="8 3 2 3"/>
<path d="M258 619.5H733M258 625.2H733M258.0 619.5V625.2M263.6 619.5V625.2M269.2 619.5V625.2M274.8 619.5V625.2M280.4 619.5V625.2M286.0 619.5V625.2M291.6 619.5V625.2M297.2 619.5V625.2M302.8 619.5V625.2M308.4 619.5V625.2M314.0 619.5V625.2M319.6 619.5V625.2M325.2 619.5V625.2M330.8 619.5V625.2M336.4 619.5V625.2M342.0 619.5V625.2M347.6 619.5V625.2M353.2 619.5V625.2M358.8 619.5V625.2M364.4 619.5V625.2M370.0 619.5V625.2M375.6 619.5V625.2M381.2 619.5V625.2M386.8 619.5V625.2M392.4 619.5V625.2M398.0 619.5V625.2M403.6 619.5V625.2M409.2 619.5V625.2M414.8 619.5V625.2M420.4 619.5V625.2M426.0 619.5V625.2M431.6 619.5V625.2M437.2 619.5V625.2M442.8 619.5V625.2M448.4 619.5V625.2M454.0 619.5V625.2M459.6 619.5V625.2M465.2 619.5V625.2M470.8 619.5V625.2M476.4 619.5V625.2M482.0 619.5V625.2M487.6 619.5V625.2M493.2 619.5V625.2M498.8 619.5V625.2M504.4 619.5V625.2M510.0 619.5V625.2M515.6 619.5V625.2M521.2 619.5V625.2M526.8 619.5V625.2M532.4 619.5V625.2M538.0 619.5V625.2M543.6 619.5V625.2M549.2 619.5V625.2M554.8 619.5V625.2M560.4 619.5V625.2M566.0 619.5V625.2M571.6 619.5V625.2M577.2 619.5V625.2M582.8 619.5V625.2M588.4 619.5V625.2M594.0 619.5V625.2M599.6 619.5V625.2M605.2 619.5V625.2M610.8 619.5V625.2M616.4 619.5V625.2M622.0 619.5V625.2M627.6 619.5V625.2M633.2 619.5V625.2M638.8 619.5V625.2M644.4 619.5V625.2M650.0 619.5V625.2M655.6 619.5V625.2M661.2 619.5V625.2M666.8 619.5V625.2M672.4 619.5V625.2M678.0 619.5V625.2M683.6 619.5V625.2M689.2 619.5V625.2M694.8 619.5V625.2M700.4 619.5V625.2M706.0 619.5V625.2M711.6 619.5V625.2M717.2 619.5V625.2M722.8 619.5V625.2M728.4 619.5V625.2" stroke="#8a8a8a" stroke-width="0.8" fill="none"/>
<line x1="258" y1="619.5" x2="733" y2="619.5" stroke="#ff2020" stroke-width="1.2"/>
<line x1="258" y1="625.2" x2="733" y2="625.2" stroke="#ff2020" stroke-width="1.1"/>
<line x1="258" y1="628" x2="655" y2="628" stroke="#7d7d7d" stroke-width="1"/>
<rect x="292.4" y="655.4" width="428" height="6.5" fill="#7d7d7d"/>
<rect x="292.4" y="655.4" width="6" height="169" fill="#7d7d7d"/>
<rect x="292.4" y="818.5" width="428" height="6.3" fill="#7d7d7d"/>
<line x1="292" y1="655" x2="720" y2="655" stroke="#ff2020" stroke-width="0.8"/>
<line x1="292" y1="655" x2="292" y2="825" stroke="#ff2020" stroke-width="0.8" stroke-dasharray="3 2"/>
<path d="M298 667H722M298 672.5H722M298.0 667V672.5M303.8 667V672.5M309.6 667V672.5M315.4 667V672.5M321.2 667V672.5M327.0 667V672.5M332.8 667V672.5M338.6 667V672.5M344.4 667V672.5M350.2 667V672.5M356.0 667V672.5M361.8 667V672.5M367.6 667V672.5M373.4 667V672.5M379.2 667V672.5M385.0 667V672.5M390.8 667V672.5M396.6 667V672.5M402.4 667V672.5M408.2 667V672.5M414.0 667V672.5M419.8 667V672.5M425.6 667V672.5M431.4 667V672.5M437.2 667V672.5M443.0 667V672.5M448.8 667V672.5M454.6 667V672.5M460.4 667V672.5M466.2 667V672.5M472.0 667V672.5M477.8 667V672.5M483.6 667V672.5M489.4 667V672.5M495.2 667V672.5M501.0 667V672.5M506.8 667V672.5M512.6 667V672.5M518.4 667V672.5M524.2 667V672.5M530.0 667V672.5M535.8 667V672.5M541.6 667V672.5M547.4 667V672.5M553.2 667V672.5M559.0 667V672.5M564.8 667V672.5M570.6 667V672.5M576.4 667V672.5M582.2 667V672.5M588.0 667V672.5M593.8 667V672.5M599.6 667V672.5M605.4 667V672.5M611.2 667V672.5M617.0 667V672.5M622.8 667V672.5M628.6 667V672.5M634.4 667V672.5M640.2 667V672.5M646.0 667V672.5M651.8 667V672.5M657.6 667V672.5M663.4 667V672.5M669.2 667V672.5M675.0 667V672.5M680.8 667V672.5M686.6 667V672.5M692.4 667V672.5M698.2 667V672.5M704.0 667V672.5M709.8 667V672.5M715.6 667V672.5M721.4 667V672.5" stroke="#8a8a8a" stroke-width="0.8" fill="none"/>
<line x1="298" y1="667" x2="722" y2="667" stroke="#00e600" stroke-width="1.2"/>
<line x1="298" y1="672.5" x2="722" y2="672.5" stroke="#00e600" stroke-width="1.2"/>
<path d="M298 808H722M298 813.5H722M298.0 808V813.5M303.8 808V813.5M309.6 808V813.5M315.4 808V813.5M321.2 808V813.5M327.0 808V813.5M332.8 808V813.5M338.6 808V813.5M344.4 808V813.5M350.2 808V813.5M356.0 808V813.5M361.8 808V813.5M367.6 808V813.5M373.4 808V813.5M379.2 808V813.5M385.0 808V813.5M390.8 808V813.5M396.6 808V813.5M402.4 808V813.5M408.2 808V813.5M414.0 808V813.5M419.8 808V813.5M425.6 808V813.5M431.4 808V813.5M437.2 808V813.5M443.0 808V813.5M448.8 808V813.5M454.6 808V813.5M460.4 808V813.5M466.2 808V813.5M472.0 808V813.5M477.8 808V813.5M483.6 808V813.5M489.4 808V813.5M495.2 808V813.5M501.0 808V813.5M506.8 808V813.5M512.6 808V813.5M518.4 808V813.5M524.2 808V813.5M530.0 808V813.5M535.8 808V813.5M541.6 808V813.5M547.4 808V813.5M553.2 808V813.5M559.0 808V813.5M564.8 808V813.5M570.6 808V813.5M576.4 808V813.5M582.2 808V813.5M588.0 808V813.5M593.8 808V813.5M599.6 808V813.5M605.4 808V813.5M611.2 808V813.5M617.0 808V813.5M622.8 808V813.5M628.6 808V813.5M634.4 808V813.5M640.2 808V813.5M646.0 808V813.5M651.8 808V813.5M657.6 808V813.5M663.4 808V813.5M669.2 808V813.5M675.0 808V813.5M680.8 808V813.5M686.6 808V813.5M692.4 808V813.5M698.2 808V813.5M704.0 808V813.5M709.8 808V813.5M715.6 808V813.5M721.4 808V813.5" stroke="#8a8a8a" stroke-width="0.8" fill="none"/>
<line x1="298" y1="808" x2="722" y2="808" stroke="#00e600" stroke-width="1.2"/>
<line x1="298" y1="813.5" x2="722" y2="813.5" stroke="#00e600" stroke-width="1.2"/>
<path d="M301 672.0H309 M301 677.7H309 M301 683.4H309 M301 689.1H309 M301 694.8H309 M301 700.5H309 M301 706.2H309 M301 711.9H309 M301 717.6H309 M301 723.3H309 M301 729.0H309 M301 734.7H309 M301 740.4H309 M301 746.1H309 M301 751.8H309 M301 757.5H309 M301 763.2H309 M301 768.9H309 M301 774.6H309 M301 780.3H309 M301 786.0H309 M301 791.7H309 M301 797.4H309 M301 803.1H309" stroke="#8a8a8a" stroke-width="0.8"/>
<line x1="301" y1="672" x2="301" y2="808" stroke="#00e600" stroke-width="1.2"/>
<line x1="309" y1="672" x2="309" y2="808" stroke="#00e600" stroke-width="1.2"/>
<clipPath id="tri1"><path d="M309 672 L380 672 L309 725 Z"/></clipPath><g clip-path="url(#tri1)">
<rect x="309" y="672" width="71" height="53" fill="#9c9c9c"/>
<path d="M359.4 702.8h1v1h-1z M344.8 685.0h1v1h-1z M329.4 723.4h1v1h-1z M335.4 724.4h1v1h-1z M372.0 678.6h1v1h-1z M369.2 673.1h1v1h-1z M359.5 714.9h1v1h-1z M358.4 701.1h1v1h-1z M366.7 680.2h1v1h-1z M347.3 686.1h1v1h-1z M337.3 682.1h1v1h-1z M359.3 702.4h1v1h-1z M364.3 705.3h1v1h-1z M351.5 720.9h1v1h-1z M366.7 702.0h1v1h-1z M332.2 721.2h1v1h-1z M335.3 677.4h1v1h-1z M332.7 709.4h1v1h-1z M375.1 706.2h1v1h-1z M356.0 721.7h1v1h-1z M364.2 695.6h1v1h-1z M341.8 712.3h1v1h-1z M331.6 677.8h1v1h-1z M353.0 714.9h1v1h-1z M326.6 708.2h1v1h-1z M372.4 678.8h1v1h-1z M318.6 698.1h1v1h-1z M332.7 722.3h1v1h-1z M379.8 695.6h1v1h-1z M365.3 705.5h1v1h-1z M321.3 723.5h1v1h-1z M321.4 676.0h1v1h-1z M341.1 672.9h1v1h-1z M343.1 693.8h1v1h-1z M376.8 693.9h1v1h-1z M369.3 713.3h1v1h-1z M350.6 684.6h1v1h-1z M330.6 698.0h1v1h-1z M337.1 706.2h1v1h-1z M344.9 689.1h1v1h-1z M352.1 724.8h1v1h-1z M323.4 689.8h1v1h-1z M309.9 677.0h1v1h-1z M312.9 694.4h1v1h-1z M368.4 709.0h1v1h-1z M377.6 716.4h1v1h-1z M350.6 702.8h1v1h-1z M309.9 692.3h1v1h-1z M327.6 704.9h1v1h-1z M313.6 700.7h1v1h-1z M335.7 698.1h1v1h-1z M337.7 677.4h1v1h-1z M360.9 714.4h1v1h-1z M351.5 678.1h1v1h-1z M351.5 718.2h1v1h-1z M379.0 712.2h1v1h-1z M312.2 718.6h1v1h-1z M356.2 686.7h1v1h-1z M374.3 715.8h1v1h-1z M372.6 685.1h1v1h-1z M350.0 692.1h1v1h-1z M330.0 712.3h1v1h-1z M352.8 689.6h1v1h-1z M347.6 721.2h1v1h-1z M349.2 720.4h1v1h-1z M349.2 724.6h1v1h-1z M311.1 696.4h1v1h-1z M348.2 710.5h1v1h-1z M377.8 705.0h1v1h-1z M342.9 705.6h1v1h-1z M346.9 709.4h1v1h-1z M376.2 672.7h1v1h-1z M331.7 718.4h1v1h-1z M313.2 713.9h1v1h-1z M311.2 706.4h1v1h-1z M365.8 684.6h1v1h-1z M336.1 684.0h1v1h-1z M359.0 700.0h1v1h-1z M352.0 689.3h1v1h-1z M350.7 722.6h1v1h-1z M364.3 722.4h1v1h-1z M326.6 699.3h1v1h-1z M336.4 690.3h1v1h-1z M366.0 681.3h1v1h-1z M348.7 713.0h1v1h-1z M375.4 673.0h1v1h-1z M328.2 698.1h1v1h-1z M375.5 680.6h1v1h-1z M368.7 693.1h1v1h-1z M347.9 721.2h1v1h-1z M313.6 689.5h1v1h-1z M320.1 679.1h1v1h-1z M330.6 709.1h1v1h-1z M350.2 678.5h1v1h-1z M365.9 698.9h1v1h-1z M319.2 715.5h1v1h-1z M367.3 683.5h1v1h-1z M375.7 714.9h1v1h-1z M325.3 672.1h1v1h-1z M370.6 715.8h1v1h-1z M315.9 712.6h1v1h-1z M363.9 705.6h1v1h-1z M368.1 724.2h1v1h-1z M332.3 716.2h1v1h-1z M374.4 688.6h1v1h-1z M357.5 708.3h1v1h-1z M369.3 702.0h1v1h-1z M328.6 685.3h1v1h-1z M347.5 679.2h1v1h-1z M370.0 719.1h1v1h-1z M326.2 709.0h1v1h-1z M356.8 678.5h1v1h-1z M364.3 712.6h1v1h-1z M330.7 677.2h1v1h-1z M329.0 712.9h1v1h-1z M342.1 715.2h1v1h-1z M320.3 677.6h1v1h-1z M333.8 718.6h1v1h-1z M320.5 675.9h1v1h-1z M362.5 676.8h1v1h-1z M356.4 676.4h1v1h-1z M326.5 707.2h1v1h-1z M371.0 693.7h1v1h-1z M340.9 673.6h1v1h-1z M333.2 684.8h1v1h-1z M365.0 709.9h1v1h-1z M364.7 700.2h1v1h-1z M358.7 678.7h1v1h-1z M336.3 687.5h1v1h-1z M329.0 711.2h1v1h-1z M324.2 689.2h1v1h-1z M329.1 717.8h1v1h-1z M354.3 697.5h1v1h-1z M336.0 720.8h1v1h-1z M375.7 695.8h1v1h-1z M349.2 717.7h1v1h-1z M327.2 685.7h1v1h-1z M316.3 698.6h1v1h-1z M363.6 680.3h1v1h-1z M339.7 724.5h1v1h-1z M343.2 692.3h1v1h-1z M368.6 719.3h1v1h-1z M335.7 678.5h1v1h-1z M354.2 711.2h1v1h-1z M374.5 707.0h1v1h-1z M330.8 699.3h1v1h-1z M329.4 695.6h1v1h-1z M342.2 720.3h1v1h-1z M373.3 721.1h1v1h-1z M342.9 723.1h1v1h-1z M318.9 720.8h1v1h-1z M354.5 718.2h1v1h-1z M338.3 724.5h1v1h-1z M310.8 716.9h1v1h-1z M367.2 691.8h1v1h-1z M367.8 683.3h1v1h-1z M362.4 696.8h1v1h-1z M338.2 682.4h1v1h-1z M365.8 710.7h1v1h-1z M315.3 723.8h1v1h-1z M324.7 691.9h1v1h-1z M338.4 702.6h1v1h-1z M372.2 722.1h1v1h-1z M354.0 691.4h1v1h-1z M316.6 675.6h1v1h-1z M345.8 702.9h1v1h-1z M340.8 724.1h1v1h-1z M338.4 690.6h1v1h-1z M338.7 681.1h1v1h-1z M375.7 703.3h1v1h-1z M347.5 694.6h1v1h-1z M326.8 688.7h1v1h-1z M344.0 695.7h1v1h-1z M378.5 701.8h1v1h-1z M323.7 674.8h1v1h-1z M320.3 690.3h1v1h-1z M364.6 719.1h1v1h-1z M325.8 713.4h1v1h-1z M340.4 700.5h1v1h-1z M346.8 674.3h1v1h-1z M313.7 707.4h1v1h-1z M357.9 692.2h1v1h-1z M374.3 715.5h1v1h-1z M330.4 675.5h1v1h-1z M348.3 706.7h1v1h-1z M324.9 674.3h1v1h-1z M343.6 673.8h1v1h-1z M361.3 705.2h1v1h-1z M328.8 695.6h1v1h-1z M325.5 681.9h1v1h-1z M321.9 715.2h1v1h-1z M341.2 709.9h1v1h-1z M333.7 714.8h1v1h-1z M351.3 706.7h1v1h-1z M336.9 701.8h1v1h-1z M322.5 723.6h1v1h-1z M356.7 700.2h1v1h-1z M354.3 677.3h1v1h-1z M332.7 684.2h1v1h-1z M368.9 672.7h1v1h-1z M340.6 718.0h1v1h-1z M364.6 710.1h1v1h-1z M330.4 684.3h1v1h-1z M359.0 687.8h1v1h-1z M360.3 690.5h1v1h-1z M363.0 702.4h1v1h-1z M366.9 724.2h1v1h-1z M335.9 724.3h1v1h-1z M309.7 718.5h1v1h-1z M311.1 700.9h1v1h-1z M336.6 712.8h1v1h-1z M331.4 683.0h1v1h-1z M364.7 701.2h1v1h-1z M362.7 697.9h1v1h-1z M311.6 712.9h1v1h-1z M324.5 697.0h1v1h-1z M309.0 685.7h1v1h-1z M356.3 712.5h1v1h-1z M354.2 695.5h1v1h-1z M361.0 707.5h1v1h-1z M323.6 700.4h1v1h-1z M351.4 710.6h1v1h-1z M323.0 688.5h1v1h-1z M333.4 677.1h1v1h-1z M333.7 710.7h1v1h-1z M350.0 681.2h1v1h-1z M360.9 678.2h1v1h-1z M362.3 679.8h1v1h-1z M315.8 685.3h1v1h-1z M345.6 686.3h1v1h-1z M371.8 721.7h1v1h-1z M329.1 711.7h1v1h-1z M358.4 701.7h1v1h-1z M327.1 722.3h1v1h-1z M376.9 672.7h1v1h-1z M332.4 689.0h1v1h-1z M323.1 694.8h1v1h-1z M372.8 673.3h1v1h-1z M368.3 688.4h1v1h-1z M310.0 719.7h1v1h-1z M328.3 683.2h1v1h-1z M317.3 691.5h1v1h-1z M317.5 681.5h1v1h-1z M326.8 702.7h1v1h-1z M340.7 688.2h1v1h-1z M346.3 713.0h1v1h-1z M360.4 690.2h1v1h-1z M374.2 713.9h1v1h-1z M348.9 697.2h1v1h-1z M332.4 679.1h1v1h-1z M371.9 704.2h1v1h-1z M316.0 721.1h1v1h-1z M372.0 673.8h1v1h-1z M358.7 684.6h1v1h-1z M347.0 716.2h1v1h-1z M333.9 698.4h1v1h-1z M356.2 682.2h1v1h-1z M353.5 694.5h1v1h-1z M378.8 681.9h1v1h-1z M359.5 674.2h1v1h-1z M328.5 678.2h1v1h-1z M319.6 700.0h1v1h-1z M321.4 714.1h1v1h-1z M315.8 705.0h1v1h-1z M370.1 678.7h1v1h-1z M324.4 712.5h1v1h-1z M342.4 721.4h1v1h-1z M333.0 693.1h1v1h-1z M377.0 690.2h1v1h-1z M377.6 719.2h1v1h-1z M323.2 700.9h1v1h-1z M375.8 678.2h1v1h-1z M369.3 713.0h1v1h-1z M362.2 703.8h1v1h-1z M316.1 722.8h1v1h-1z M316.3 713.5h1v1h-1z M360.3 688.8h1v1h-1z M357.6 693.8h1v1h-1z M362.3 674.3h1v1h-1z M375.3 692.4h1v1h-1z M366.0 697.0h1v1h-1z M366.7 688.0h1v1h-1z M347.7 673.3h1v1h-1z M343.7 676.2h1v1h-1z M370.0 707.9h1v1h-1z M339.2 723.6h1v1h-1z M376.2 722.7h1v1h-1z M314.9 709.3h1v1h-1z M360.7 704.1h1v1h-1z M310.1 721.0h1v1h-1z M340.1 703.5h1v1h-1z M366.8 686.6h1v1h-1z M311.1 720.9h1v1h-1z M328.2 674.2h1v1h-1z M318.7 724.7h1v1h-1z M361.5 683.1h1v1h-1z M319.4 719.6h1v1h-1z M356.2 702.9h1v1h-1z M318.3 693.9h1v1h-1z M376.2 672.2h1v1h-1z M338.8 675.0h1v1h-1z M379.8 677.5h1v1h-1z M376.7 716.6h1v1h-1z M361.0 674.2h1v1h-1z M358.4 698.1h1v1h-1z M343.9 679.7h1v1h-1z M345.4 714.5h1v1h-1z M318.3 718.4h1v1h-1z M338.8 686.1h1v1h-1z M326.0 696.4h1v1h-1z M355.0 702.2h1v1h-1z M372.2 699.1h1v1h-1z M345.4 724.4h1v1h-1z M324.3 672.9h1v1h-1z M332.3 688.6h1v1h-1z M317.8 694.2h1v1h-1z M311.5 720.8h1v1h-1z M343.4 718.6h1v1h-1z M358.5 710.7h1v1h-1z M362.9 688.0h1v1h-1z M360.8 682.9h1v1h-1z M348.4 703.6h1v1h-1z M364.1 680.9h1v1h-1z M333.4 715.7h1v1h-1z M366.1 723.8h1v1h-1z M317.4 683.1h1v1h-1z M316.6 710.4h1v1h-1z M361.9 706.3h1v1h-1z M364.3 699.3h1v1h-1z M348.9 720.8h1v1h-1z M355.0 706.8h1v1h-1z M350.8 698.2h1v1h-1z M362.7 702.3h1v1h-1z M318.2 694.6h1v1h-1z M338.9 694.9h1v1h-1z M348.8 691.2h1v1h-1z M336.8 694.6h1v1h-1z M335.4 723.5h1v1h-1z M315.4 672.9h1v1h-1z M360.2 692.9h1v1h-1z M340.9 703.4h1v1h-1z M335.1 684.7h1v1h-1z M310.1 718.3h1v1h-1z M375.7 687.2h1v1h-1z M342.0 689.2h1v1h-1z M313.1 719.3h1v1h-1z M368.4 684.8h1v1h-1z M327.1 709.0h1v1h-1z M365.6 696.9h1v1h-1z M336.5 684.4h1v1h-1z M365.7 717.8h1v1h-1z M369.9 678.1h1v1h-1z M351.2 724.2h1v1h-1z M359.8 696.3h1v1h-1z M319.3 675.2h1v1h-1z M361.0 675.6h1v1h-1z M366.4 707.3h1v1h-1z M342.6 719.3h1v1h-1z M375.2 704.7h1v1h-1z M316.1 703.2h1v1h-1z M338.9 685.2h1v1h-1z M374.9 710.7h1v1h-1z M317.6 684.1h1v1h-1z M333.3 702.4h1v1h-1z M332.1 695.3h1v1h-1z M366.7 681.6h1v1h-1z M360.1 689.5h1v1h-1z M376.1 722.4h1v1h-1z M332.2 704.1h1v1h-1z M316.9 693.8h1v1h-1z M353.3 705.8h1v1h-1z M333.3 673.8h1v1h-1z M317.8 701.7h1v1h-1z M321.2 688.2h1v1h-1z M352.9 719.7h1v1h-1z M345.6 685.5h1v1h-1z M350.6 686.6h1v1h-1z M364.5 680.3h1v1h-1z M327.6 695.2h1v1h-1z M373.5 680.8h1v1h-1z M322.7 679.0h1v1h-1z M324.2 689.6h1v1h-1z M337.1 712.3h1v1h-1z M337.7 697.2h1v1h-1z M337.1 713.0h1v1h-1z M373.1 694.6h1v1h-1z M374.4 685.3h1v1h-1z M378.4 699.8h1v1h-1z M357.4 692.2h1v1h-1z M328.3 679.2h1v1h-1z M371.9 691.1h1v1h-1z M358.6 696.4h1v1h-1z M346.4 683.0h1v1h-1z M321.6 689.8h1v1h-1z M357.4 700.8h1v1h-1z M309.2 709.7h1v1h-1z M339.8 675.7h1v1h-1z M327.5 683.2h1v1h-1z M367.4 701.2h1v1h-1z M332.2 685.2h1v1h-1z M329.7 686.8h1v1h-1z M333.6 713.9h1v1h-1z M365.0 709.0h1v1h-1z M371.8 706.7h1v1h-1z M317.1 674.4h1v1h-1z M320.7 685.7h1v1h-1z M346.5 715.6h1v1h-1z M350.6 694.8h1v1h-1z M326.2 724.0h1v1h-1z M362.5 690.1h1v1h-1z M312.3 724.0h1v1h-1z M327.2 716.9h1v1h-1z M317.3 706.6h1v1h-1z M334.3 719.1h1v1h-1z M330.1 677.3h1v1h-1z M323.1 714.7h1v1h-1z M378.5 706.1h1v1h-1z M357.4 687.0h1v1h-1z M328.3 676.6h1v1h-1z M378.9 674.3h1v1h-1z M352.5 690.5h1v1h-1z M322.3 695.1h1v1h-1z M375.1 685.1h1v1h-1z M320.7 705.4h1v1h-1z M355.7 699.1h1v1h-1z M321.8 718.3h1v1h-1z M316.9 681.2h1v1h-1z M326.2 699.2h1v1h-1z M342.8 701.3h1v1h-1z M360.6 719.4h1v1h-1z M342.3 674.2h1v1h-1z M368.0 673.0h1v1h-1z M331.6 679.6h1v1h-1z M351.8 713.4h1v1h-1z M318.1 687.6h1v1h-1z M369.4 708.5h1v1h-1z M316.7 708.4h1v1h-1z M365.4 693.7h1v1h-1z M320.0 706.9h1v1h-1z M331.7 679.1h1v1h-1z M320.7 693.3h1v1h-1z M318.0 692.4h1v1h-1z M348.2 701.3h1v1h-1z M337.7 714.4h1v1h-1z M315.2 689.5h1v1h-1z M375.3 717.8h1v1h-1z M374.4 712.6h1v1h-1z M347.0 713.7h1v1h-1z M349.6 678.2h1v1h-1z M327.1 677.2h1v1h-1z M371.1 689.1h1v1h-1z M337.9 700.5h1v1h-1z M316.2 709.4h1v1h-1z M365.5 714.2h1v1h-1z M371.6 688.8h1v1h-1z M319.3 712.4h1v1h-1z M358.2 691.7h1v1h-1z M333.4 680.1h1v1h-1z M368.1 696.4h1v1h-1z M366.7 690.0h1v1h-1z M331.8 699.2h1v1h-1z M361.9 718.8h1v1h-1z M334.1 708.8h1v1h-1z M337.7 717.7h1v1h-1z M363.0 701.4h1v1h-1z M334.7 686.5h1v1h-1z M371.8 714.4h1v1h-1z M330.7 676.5h1v1h-1z M322.9 723.1h1v1h-1z M311.8 714.9h1v1h-1z M346.6 701.4h1v1h-1z M347.3 693.7h1v1h-1z M348.6 676.8h1v1h-1z M374.3 677.5h1v1h-1z M318.9 707.6h1v1h-1z M354.5 714.8h1v1h-1z M358.2 721.3h1v1h-1z M312.7 672.6h1v1h-1z M325.8 713.3h1v1h-1z M319.8 700.2h1v1h-1z M363.7 680.3h1v1h-1z M346.5 719.7h1v1h-1z M362.1 693.1h1v1h-1z M343.0 686.7h1v1h-1z M377.2 713.5h1v1h-1z M357.3 688.1h1v1h-1z M361.0 697.8h1v1h-1z M365.7 691.3h1v1h-1z M371.6 708.3h1v1h-1z M341.0 701.8h1v1h-1z M366.1 700.0h1v1h-1z M377.2 672.4h1v1h-1z M372.7 709.8h1v1h-1z M343.7 717.0h1v1h-1z M319.6 689.9h1v1h-1z M359.7 715.6h1v1h-1z M335.5 724.7h1v1h-1z M355.1 674.4h1v1h-1z M317.7 676.0h1v1h-1z M349.5 689.1h1v1h-1z M327.5 695.7h1v1h-1z M314.5 720.2h1v1h-1z M368.5 701.6h1v1h-1z M340.6 688.3h1v1h-1z M351.8 690.4h1v1h-1z M378.3 722.7h1v1h-1z M360.6 715.8h1v1h-1z M314.3 678.6h1v1h-1z M333.5 678.7h1v1h-1z M339.0 724.3h1v1h-1z M368.2 722.8h1v1h-1z M324.7 683.8h1v1h-1z M310.7 686.5h1v1h-1z M313.0 700.0h1v1h-1z M330.3 707.7h1v1h-1z M348.8 703.7h1v1h-1z M330.3 710.9h1v1h-1z M357.9 709.9h1v1h-1z M342.4 696.6h1v1h-1z M329.3 674.1h1v1h-1z M342.1 704.7h1v1h-1z M322.2 717.6h1v1h-1z M371.4 717.2h1v1h-1z M366.9 697.9h1v1h-1z M321.5 686.4h1v1h-1z M361.4 724.2h1v1h-1z M316.9 672.3h1v1h-1z M334.1 690.5h1v1h-1z M351.4 678.0h1v1h-1z M368.9 689.9h1v1h-1z M373.5 689.5h1v1h-1z M330.7 681.3h1v1h-1z M377.6 703.2h1v1h-1z M367.6 675.3h1v1h-1z M347.5 710.9h1v1h-1z M378.9 721.6h1v1h-1z M316.4 691.8h1v1h-1z M379.9 700.3h1v1h-1z M376.9 685.4h1v1h-1z M310.8 722.1h1v1h-1z M327.7 701.7h1v1h-1z M334.6 702.6h1v1h-1z M375.3 722.2h1v1h-1z M371.3 685.6h1v1h-1z M367.3 673.0h1v1h-1z M338.6 722.0h1v1h-1z M327.1 691.5h1v1h-1z M350.3 684.5h1v1h-1z M359.3 706.6h1v1h-1z M315.7 720.8h1v1h-1z M314.1 708.9h1v1h-1z M333.7 679.6h1v1h-1z M314.5 724.9h1v1h-1z M365.8 696.3h1v1h-1z M365.4 723.4h1v1h-1z M374.8 700.2h1v1h-1z M328.5 699.5h1v1h-1z M378.7 710.7h1v1h-1z M356.6 716.7h1v1h-1z M338.0 701.6h1v1h-1z M369.3 682.6h1v1h-1z M370.0 673.3h1v1h-1z M347.1 702.5h1v1h-1z M319.4 720.9h1v1h-1z M340.2 681.8h1v1h-1z M338.2 703.3h1v1h-1z M339.5 672.2h1v1h-1z M315.6 709.8h1v1h-1z M318.4 685.5h1v1h-1z M366.3 717.7h1v1h-1z M371.6 681.2h1v1h-1z M309.4 712.0h1v1h-1z M351.5 691.3h1v1h-1z M310.3 694.9h1v1h-1z M325.8 703.2h1v1h-1z M378.6 683.1h1v1h-1z M314.3 708.8h1v1h-1z M316.6 683.8h1v1h-1z M340.2 724.3h1v1h-1z M332.0 688.7h1v1h-1z M342.7 680.6h1v1h-1z M337.6 709.1h1v1h-1z M332.0 714.2h1v1h-1z M322.1 677.4h1v1h-1z M353.5 696.0h1v1h-1z M374.2 677.6h1v1h-1z M362.0 707.5h1v1h-1z M335.3 678.8h1v1h-1z M352.4 712.2h1v1h-1z M342.6 697.0h1v1h-1z M357.7 704.3h1v1h-1z M339.1 681.9h1v1h-1z M341.9 701.1h1v1h-1z M372.6 724.7h1v1h-1z M348.5 689.4h1v1h-1z M324.8 705.4h1v1h-1z M361.4 685.1h1v1h-1z M358.0 725.0h1v1h-1z M336.8 721.8h1v1h-1z M340.0 706.6h1v1h-1z M370.5 682.8h1v1h-1z M333.5 724.2h1v1h-1z M313.6 688.2h1v1h-1z M342.8 711.5h1v1h-1z M353.8 721.3h1v1h-1z M356.5 672.1h1v1h-1z M314.1 673.9h1v1h-1z M339.6 673.4h1v1h-1z M346.3 705.5h1v1h-1z M323.4 717.4h1v1h-1z M338.4 722.9h1v1h-1z M334.4 704.9h1v1h-1z M347.5 685.9h1v1h-1z M364.4 672.2h1v1h-1z M326.7 689.0h1v1h-1z M371.6 698.5h1v1h-1z M311.6 687.8h1v1h-1z M352.3 714.9h1v1h-1z M316.7 713.3h1v1h-1z M336.7 699.8h1v1h-1z M338.9 695.2h1v1h-1z M379.3 720.7h1v1h-1z M374.2 711.0h1v1h-1z M358.7 679.5h1v1h-1z M311.5 716.0h1v1h-1z M356.8 705.4h1v1h-1z M331.2 686.2h1v1h-1z M374.4 700.2h1v1h-1z M310.4 690.0h1v1h-1z M333.8 675.6h1v1h-1z M378.4 719.9h1v1h-1z M366.8 672.2h1v1h-1z M338.6 677.9h1v1h-1z M360.5 714.9h1v1h-1z M365.0 714.0h1v1h-1z M317.6 672.7h1v1h-1z M315.6 716.6h1v1h-1z M367.9 699.4h1v1h-1z M325.7 717.4h1v1h-1z M317.5 689.2h1v1h-1z M309.1 724.1h1v1h-1z M338.5 712.9h1v1h-1z M365.9 702.8h1v1h-1z M379.1 713.0h1v1h-1z M374.8 723.1h1v1h-1z M314.8 711.8h1v1h-1z M325.1 689.2h1v1h-1z M333.2 724.4h1v1h-1z M313.3 695.0h1v1h-1z M318.1 724.9h1v1h-1z M344.2 709.2h1v1h-1z M345.9 712.7h1v1h-1z M332.9 693.9h1v1h-1z M361.9 709.2h1v1h-1z M372.0 688.4h1v1h-1z M369.2 711.1h1v1h-1z M349.7 693.6h1v1h-1z M349.3 676.1h1v1h-1z M315.9 688.5h1v1h-1z M317.8 674.6h1v1h-1z M359.9 710.8h1v1h-1z M352.7 682.9h1v1h-1z M360.3 715.8h1v1h-1z M353.0 684.1h1v1h-1z M349.1 692.9h1v1h-1z M328.1 679.9h1v1h-1z M370.4 705.5h1v1h-1z M375.2 681.1h1v1h-1z M327.8 699.0h1v1h-1z M313.2 688.0h1v1h-1z M347.3 697.5h1v1h-1z M373.6 702.6h1v1h-1z M354.3 703.0h1v1h-1z M364.8 691.4h1v1h-1z M309.0 724.0h1v1h-1z M365.3 678.7h1v1h-1z M316.9 683.8h1v1h-1z M355.7 678.9h1v1h-1z M310.4 698.2h1v1h-1z M309.4 685.7h1v1h-1z M336.1 682.9h1v1h-1z M309.2 685.8h1v1h-1z M326.3 689.2h1v1h-1z M338.4 691.1h1v1h-1z M332.0 673.0h1v1h-1z M368.4 711.1h1v1h-1z M344.0 672.2h1v1h-1z M325.6 719.7h1v1h-1z M341.5 682.9h1v1h-1z M367.2 719.2h1v1h-1z M317.7 698.6h1v1h-1z M348.8 678.2h1v1h-1z M331.7 704.8h1v1h-1z M356.8 705.3h1v1h-1z M353.0 692.0h1v1h-1z M313.9 672.9h1v1h-1z M368.5 717.8h1v1h-1z M373.3 676.0h1v1h-1z M363.6 681.1h1v1h-1z M333.6 682.6h1v1h-1z" fill="#4a4a4a"/>
</g>
<clipPath id="tri2"><path d="M309 755 L382 808 L309 808 Z"/></clipPath><g clip-path="url(#tri2)">
<rect x="309" y="755" width="73" height="53" fill="#9c9c9c"/>
<path d="M371.8 798.4h1v1h-1z M369.8 775.2h1v1h-1z M377.3 768.8h1v1h-1z M350.9 790.7h1v1h-1z M326.1 775.2h1v1h-1z M316.3 797.2h1v1h-1z M322.5 762.2h1v1h-1z M329.3 788.9h1v1h-1z M355.5 782.8h1v1h-1z M371.3 794.9h1v1h-1z M324.3 783.3h1v1h-1z M321.4 767.8h1v1h-1z M319.7 759.1h1v1h-1z M334.6 802.0h1v1h-1z M356.9 759.6h1v1h-1z M325.0 786.4h1v1h-1z M347.7 756.4h1v1h-1z M315.9 785.0h1v1h-1z M352.9 759.3h1v1h-1z M365.4 767.7h1v1h-1z M352.0 783.1h1v1h-1z M333.8 805.2h1v1h-1z M337.9 777.4h1v1h-1z M348.4 799.5h1v1h-1z M381.1 795.8h1v1h-1z M348.3 793.0h1v1h-1z M355.6 805.8h1v1h-1z M379.9 795.3h1v1h-1z M324.8 785.1h1v1h-1z M341.1 767.3h1v1h-1z M366.0 766.7h1v1h-1z M360.8 780.9h1v1h-1z M340.2 792.5h1v1h-1z M361.9 807.5h1v1h-1z M381.9 797.4h1v1h-1z M328.3 790.5h1v1h-1z M345.2 804.8h1v1h-1z M341.6 773.9h1v1h-1z M310.9 779.9h1v1h-1z M347.9 771.3h1v1h-1z M316.7 780.7h1v1h-1z M314.2 764.1h1v1h-1z M341.4 773.5h1v1h-1z M345.5 783.1h1v1h-1z M337.4 762.1h1v1h-1z M310.3 784.6h1v1h-1z M379.8 769.9h1v1h-1z M334.7 771.9h1v1h-1z M363.2 781.1h1v1h-1z M367.1 755.3h1v1h-1z M318.7 765.9h1v1h-1z M335.9 776.2h1v1h-1z M337.1 806.2h1v1h-1z M341.1 785.5h1v1h-1z M379.3 789.0h1v1h-1z M352.4 798.9h1v1h-1z M333.4 756.9h1v1h-1z M378.9 783.3h1v1h-1z M351.5 758.5h1v1h-1z M363.4 774.8h1v1h-1z M355.9 770.0h1v1h-1z M376.0 774.5h1v1h-1z M329.1 802.4h1v1h-1z M325.3 769.4h1v1h-1z M344.5 807.0h1v1h-1z M317.4 766.2h1v1h-1z M367.1 759.0h1v1h-1z M339.2 796.5h1v1h-1z M361.0 797.0h1v1h-1z M317.6 802.2h1v1h-1z M335.1 798.2h1v1h-1z M343.4 802.2h1v1h-1z M343.9 768.7h1v1h-1z M320.0 781.3h1v1h-1z M312.6 763.7h1v1h-1z M372.8 785.4h1v1h-1z M372.0 763.0h1v1h-1z M344.1 779.8h1v1h-1z M316.9 769.0h1v1h-1z M376.3 793.3h1v1h-1z M346.2 787.3h1v1h-1z M371.8 805.6h1v1h-1z M352.4 757.7h1v1h-1z M372.6 763.7h1v1h-1z M326.5 762.3h1v1h-1z M346.4 785.9h1v1h-1z M342.6 779.9h1v1h-1z M319.3 793.1h1v1h-1z M348.2 771.4h1v1h-1z M369.9 804.8h1v1h-1z M376.3 807.2h1v1h-1z M314.0 775.6h1v1h-1z M341.8 768.6h1v1h-1z M363.3 803.0h1v1h-1z M319.1 781.8h1v1h-1z M379.6 802.1h1v1h-1z M341.9 760.5h1v1h-1z M342.3 782.4h1v1h-1z M366.4 764.9h1v1h-1z M329.4 807.2h1v1h-1z M309.9 787.4h1v1h-1z M315.9 794.8h1v1h-1z M339.9 804.0h1v1h-1z M325.3 801.5h1v1h-1z M325.6 757.5h1v1h-1z M315.3 759.0h1v1h-1z M337.4 806.5h1v1h-1z M334.9 793.0h1v1h-1z M311.5 782.3h1v1h-1z M348.4 760.2h1v1h-1z M351.3 778.6h1v1h-1z M332.9 799.0h1v1h-1z M359.5 761.4h1v1h-1z M316.7 757.8h1v1h-1z M328.2 788.7h1v1h-1z M379.7 806.3h1v1h-1z M372.1 761.6h1v1h-1z M366.8 795.4h1v1h-1z M343.5 807.8h1v1h-1z M352.7 761.3h1v1h-1z M324.8 761.9h1v1h-1z M353.6 788.1h1v1h-1z M371.6 755.5h1v1h-1z M309.7 806.6h1v1h-1z M328.1 769.0h1v1h-1z M372.3 760.9h1v1h-1z M366.9 802.5h1v1h-1z M350.0 787.3h1v1h-1z M309.4 787.2h1v1h-1z M353.8 795.9h1v1h-1z M346.8 761.0h1v1h-1z M325.2 789.6h1v1h-1z M314.8 760.7h1v1h-1z M327.3 797.2h1v1h-1z M348.9 773.9h1v1h-1z M379.4 785.8h1v1h-1z M326.4 785.0h1v1h-1z M371.4 774.5h1v1h-1z M340.7 785.6h1v1h-1z M381.1 788.8h1v1h-1z M322.2 785.8h1v1h-1z M332.5 780.1h1v1h-1z M361.0 756.1h1v1h-1z M346.1 771.6h1v1h-1z M352.7 798.5h1v1h-1z M343.1 788.4h1v1h-1z M330.1 768.6h1v1h-1z M346.2 783.2h1v1h-1z M325.3 795.5h1v1h-1z M345.5 773.8h1v1h-1z M327.5 799.4h1v1h-1z M374.8 804.7h1v1h-1z M327.1 758.8h1v1h-1z M355.1 756.3h1v1h-1z M371.5 791.0h1v1h-1z M333.6 778.4h1v1h-1z M358.9 763.5h1v1h-1z M335.6 796.7h1v1h-1z M358.7 786.0h1v1h-1z M316.5 766.5h1v1h-1z M327.7 756.7h1v1h-1z M355.7 785.4h1v1h-1z M376.5 784.4h1v1h-1z M376.0 779.9h1v1h-1z M346.8 769.9h1v1h-1z M342.9 804.7h1v1h-1z M344.6 755.1h1v1h-1z M334.8 765.5h1v1h-1z M354.5 782.0h1v1h-1z M343.7 804.1h1v1h-1z M364.7 759.6h1v1h-1z M311.2 792.1h1v1h-1z M352.6 789.6h1v1h-1z M345.5 756.9h1v1h-1z M342.0 799.3h1v1h-1z M352.9 757.3h1v1h-1z M318.1 802.9h1v1h-1z M348.8 763.7h1v1h-1z M360.6 804.0h1v1h-1z M372.2 789.2h1v1h-1z M367.9 759.6h1v1h-1z M342.8 797.9h1v1h-1z M333.9 762.6h1v1h-1z M372.2 792.3h1v1h-1z M309.5 758.4h1v1h-1z M349.7 805.6h1v1h-1z M354.1 801.4h1v1h-1z M316.7 785.5h1v1h-1z M322.3 772.6h1v1h-1z M319.9 779.6h1v1h-1z M312.4 789.8h1v1h-1z M356.2 803.0h1v1h-1z M365.1 759.0h1v1h-1z M372.4 783.8h1v1h-1z M377.3 781.1h1v1h-1z M314.9 792.3h1v1h-1z M321.6 807.2h1v1h-1z M348.4 802.8h1v1h-1z M345.0 772.3h1v1h-1z M357.3 792.6h1v1h-1z M342.6 769.6h1v1h-1z M339.7 792.9h1v1h-1z M325.7 763.4h1v1h-1z M344.3 789.9h1v1h-1z M313.9 769.4h1v1h-1z M379.9 769.2h1v1h-1z M365.3 771.2h1v1h-1z M315.3 780.8h1v1h-1z M372.5 796.2h1v1h-1z M312.5 792.3h1v1h-1z M354.3 780.6h1v1h-1z M357.5 782.7h1v1h-1z M322.4 791.9h1v1h-1z M318.4 771.4h1v1h-1z M371.2 785.1h1v1h-1z M346.3 792.6h1v1h-1z M345.0 775.4h1v1h-1z M349.3 756.2h1v1h-1z M334.7 757.1h1v1h-1z M381.7 803.1h1v1h-1z M356.7 763.4h1v1h-1z M371.4 770.0h1v1h-1z M367.7 789.5h1v1h-1z M353.2 794.3h1v1h-1z M328.5 799.2h1v1h-1z M348.6 795.1h1v1h-1z M370.3 768.5h1v1h-1z M339.0 774.2h1v1h-1z M314.6 801.4h1v1h-1z M359.1 781.0h1v1h-1z M348.8 801.6h1v1h-1z M314.1 774.0h1v1h-1z M359.1 783.3h1v1h-1z M345.3 768.7h1v1h-1z M325.3 790.5h1v1h-1z M333.9 804.7h1v1h-1z M374.8 806.4h1v1h-1z M329.2 782.3h1v1h-1z M316.6 774.0h1v1h-1z M314.4 781.6h1v1h-1z M378.9 795.4h1v1h-1z M335.6 769.6h1v1h-1z M377.0 757.8h1v1h-1z M370.7 800.4h1v1h-1z M314.0 805.4h1v1h-1z M356.2 775.6h1v1h-1z M340.0 787.3h1v1h-1z M347.5 801.0h1v1h-1z M374.4 772.3h1v1h-1z M309.6 796.3h1v1h-1z M356.3 789.7h1v1h-1z M314.4 759.0h1v1h-1z M374.6 774.3h1v1h-1z M343.5 806.6h1v1h-1z M323.2 788.7h1v1h-1z M313.5 784.7h1v1h-1z M362.9 763.3h1v1h-1z M364.5 806.3h1v1h-1z M369.3 796.9h1v1h-1z M378.2 793.0h1v1h-1z M349.0 798.7h1v1h-1z M367.9 788.3h1v1h-1z M357.8 764.5h1v1h-1z M333.7 772.2h1v1h-1z M371.7 796.4h1v1h-1z M330.2 807.7h1v1h-1z M313.3 758.3h1v1h-1z M332.9 759.1h1v1h-1z M378.3 774.0h1v1h-1z M337.3 800.3h1v1h-1z M347.9 788.4h1v1h-1z M341.1 779.4h1v1h-1z M378.9 769.7h1v1h-1z M347.4 780.4h1v1h-1z M319.3 762.8h1v1h-1z M346.0 797.3h1v1h-1z M340.5 758.1h1v1h-1z M377.3 762.3h1v1h-1z M373.6 757.4h1v1h-1z M356.4 762.7h1v1h-1z M328.0 777.3h1v1h-1z M364.1 778.1h1v1h-1z M339.5 776.3h1v1h-1z M347.0 769.9h1v1h-1z M378.6 765.1h1v1h-1z M318.7 784.1h1v1h-1z M334.6 793.2h1v1h-1z M311.9 790.9h1v1h-1z M335.6 804.1h1v1h-1z M330.9 777.9h1v1h-1z M332.2 783.3h1v1h-1z M329.5 790.5h1v1h-1z M339.0 792.5h1v1h-1z M330.3 779.2h1v1h-1z M349.7 793.1h1v1h-1z M356.6 777.7h1v1h-1z M315.3 760.9h1v1h-1z M319.7 764.7h1v1h-1z M322.4 790.1h1v1h-1z M333.9 803.1h1v1h-1z M326.1 768.0h1v1h-1z M322.4 762.7h1v1h-1z M358.8 785.7h1v1h-1z M327.3 797.9h1v1h-1z M358.3 777.7h1v1h-1z M353.4 789.8h1v1h-1z M341.2 759.9h1v1h-1z M335.6 805.1h1v1h-1z M336.3 788.9h1v1h-1z M315.5 796.0h1v1h-1z M372.1 774.8h1v1h-1z M336.2 782.2h1v1h-1z M327.4 766.1h1v1h-1z M318.4 791.4h1v1h-1z M346.2 805.7h1v1h-1z M379.3 801.3h1v1h-1z M378.0 799.4h1v1h-1z M310.8 761.9h1v1h-1z M380.2 801.3h1v1h-1z M354.0 787.8h1v1h-1z M340.9 777.5h1v1h-1z M319.6 784.0h1v1h-1z M329.1 761.5h1v1h-1z M372.5 785.5h1v1h-1z M373.0 770.6h1v1h-1z M351.1 769.7h1v1h-1z M369.6 766.1h1v1h-1z M356.3 784.4h1v1h-1z M332.8 759.2h1v1h-1z M344.5 782.7h1v1h-1z M368.7 765.8h1v1h-1z M322.5 771.2h1v1h-1z M367.6 767.3h1v1h-1z M355.3 756.7h1v1h-1z M315.0 792.5h1v1h-1z M345.3 761.0h1v1h-1z M343.5 804.8h1v1h-1z M337.6 784.5h1v1h-1z M339.7 781.8h1v1h-1z M312.2 801.8h1v1h-1z M351.3 773.4h1v1h-1z M329.8 764.9h1v1h-1z M377.2 799.6h1v1h-1z M336.6 787.0h1v1h-1z M349.3 765.6h1v1h-1z M311.4 794.0h1v1h-1z M320.9 784.9h1v1h-1z M310.3 756.2h1v1h-1z M321.0 789.6h1v1h-1z M353.7 807.5h1v1h-1z M357.2 782.7h1v1h-1z M310.0 805.8h1v1h-1z M344.7 800.5h1v1h-1z M312.1 799.3h1v1h-1z M343.7 766.5h1v1h-1z M338.6 759.0h1v1h-1z M351.4 766.6h1v1h-1z M360.2 764.2h1v1h-1z M359.4 787.7h1v1h-1z M361.0 805.4h1v1h-1z M330.6 791.2h1v1h-1z M338.0 802.4h1v1h-1z M369.2 795.5h1v1h-1z M352.8 768.9h1v1h-1z M375.3 806.3h1v1h-1z M378.3 772.9h1v1h-1z M369.0 791.0h1v1h-1z M370.3 797.5h1v1h-1z M342.2 775.9h1v1h-1z M367.1 789.7h1v1h-1z M348.4 801.3h1v1h-1z M311.3 755.7h1v1h-1z M342.9 760.2h1v1h-1z M370.5 759.7h1v1h-1z M373.4 766.9h1v1h-1z M318.8 794.9h1v1h-1z M358.5 776.8h1v1h-1z M352.5 784.3h1v1h-1z M378.2 781.9h1v1h-1z M348.4 779.5h1v1h-1z M339.1 791.6h1v1h-1z M317.1 791.7h1v1h-1z M376.8 795.3h1v1h-1z M348.6 773.7h1v1h-1z M316.1 759.9h1v1h-1z M348.4 801.6h1v1h-1z M372.2 764.7h1v1h-1z M363.7 797.8h1v1h-1z M344.0 800.5h1v1h-1z M322.6 772.8h1v1h-1z M346.5 793.5h1v1h-1z M341.8 771.0h1v1h-1z M372.3 775.8h1v1h-1z M339.6 766.9h1v1h-1z M344.3 792.4h1v1h-1z M335.4 790.1h1v1h-1z M345.0 755.6h1v1h-1z M379.3 770.3h1v1h-1z M348.8 805.8h1v1h-1z M324.1 758.4h1v1h-1z M324.0 763.1h1v1h-1z M371.1 782.4h1v1h-1z M312.1 769.4h1v1h-1z M346.3 764.2h1v1h-1z M331.4 802.9h1v1h-1z M341.5 767.4h1v1h-1z M352.6 761.0h1v1h-1z M347.0 789.3h1v1h-1z M315.5 784.1h1v1h-1z M331.6 794.5h1v1h-1z M354.0 803.2h1v1h-1z M353.3 764.7h1v1h-1z M322.5 792.3h1v1h-1z M368.2 758.3h1v1h-1z M339.4 770.0h1v1h-1z M343.1 801.2h1v1h-1z M349.9 794.4h1v1h-1z M364.8 769.7h1v1h-1z M354.2 774.9h1v1h-1z M343.6 783.1h1v1h-1z M357.7 763.9h1v1h-1z M370.2 763.5h1v1h-1z M331.9 800.0h1v1h-1z M380.9 774.4h1v1h-1z M378.5 757.0h1v1h-1z M378.7 765.7h1v1h-1z M311.6 795.4h1v1h-1z M320.8 794.9h1v1h-1z M309.5 761.6h1v1h-1z M335.1 759.5h1v1h-1z M343.4 773.3h1v1h-1z M362.9 781.1h1v1h-1z M379.5 799.7h1v1h-1z M321.5 803.6h1v1h-1z M374.3 784.9h1v1h-1z M347.5 764.0h1v1h-1z M332.4 766.7h1v1h-1z M323.3 787.5h1v1h-1z M332.7 795.7h1v1h-1z M350.8 798.8h1v1h-1z M315.4 799.9h1v1h-1z M346.1 788.5h1v1h-1z M326.4 791.9h1v1h-1z M338.6 793.2h1v1h-1z M351.6 762.4h1v1h-1z M330.9 794.9h1v1h-1z M310.2 788.5h1v1h-1z M348.8 792.9h1v1h-1z M333.0 780.3h1v1h-1z M343.8 794.7h1v1h-1z M314.3 782.0h1v1h-1z M328.0 786.2h1v1h-1z M327.9 765.9h1v1h-1z M325.9 802.4h1v1h-1z M335.5 801.6h1v1h-1z M362.7 769.3h1v1h-1z M349.4 755.5h1v1h-1z M377.1 788.4h1v1h-1z M317.2 782.5h1v1h-1z M345.1 790.5h1v1h-1z M330.1 803.2h1v1h-1z M354.5 758.9h1v1h-1z M368.8 801.9h1v1h-1z M331.2 792.7h1v1h-1z M371.8 801.7h1v1h-1z M314.1 799.4h1v1h-1z M327.1 797.5h1v1h-1z M359.1 779.7h1v1h-1z M374.8 797.6h1v1h-1z M381.6 805.8h1v1h-1z M350.8 794.0h1v1h-1z M357.9 776.2h1v1h-1z M345.4 781.9h1v1h-1z M324.7 768.8h1v1h-1z M370.7 799.8h1v1h-1z M359.9 791.5h1v1h-1z M346.2 785.4h1v1h-1z M357.7 755.4h1v1h-1z M341.4 806.4h1v1h-1z M324.0 779.8h1v1h-1z M314.7 768.5h1v1h-1z M369.2 756.7h1v1h-1z M367.3 797.3h1v1h-1z M372.4 768.6h1v1h-1z M377.0 774.7h1v1h-1z M341.9 805.4h1v1h-1z M348.8 791.1h1v1h-1z M317.1 755.3h1v1h-1z M328.3 760.6h1v1h-1z M369.1 768.2h1v1h-1z M378.9 791.0h1v1h-1z M323.0 792.7h1v1h-1z M332.2 782.9h1v1h-1z M314.5 799.1h1v1h-1z M366.5 785.8h1v1h-1z M359.4 773.0h1v1h-1z M318.3 772.2h1v1h-1z M363.0 784.8h1v1h-1z M318.8 767.8h1v1h-1z M343.7 755.8h1v1h-1z M312.3 778.8h1v1h-1z M318.8 802.1h1v1h-1z M318.4 794.7h1v1h-1z M367.0 771.7h1v1h-1z M348.6 807.6h1v1h-1z M354.0 775.5h1v1h-1z M380.2 768.8h1v1h-1z M378.7 771.4h1v1h-1z M339.8 771.7h1v1h-1z M356.6 801.8h1v1h-1z M359.3 764.6h1v1h-1z M381.3 793.3h1v1h-1z M346.0 800.0h1v1h-1z M316.8 786.7h1v1h-1z M366.4 796.2h1v1h-1z M358.1 758.3h1v1h-1z M343.9 769.2h1v1h-1z M353.4 776.0h1v1h-1z M342.3 783.5h1v1h-1z M351.9 802.2h1v1h-1z M329.6 769.6h1v1h-1z M322.5 761.0h1v1h-1z M371.0 803.7h1v1h-1z M318.2 774.1h1v1h-1z M375.0 800.8h1v1h-1z M380.4 807.6h1v1h-1z M331.2 758.5h1v1h-1z M327.2 781.6h1v1h-1z M310.1 768.4h1v1h-1z M343.5 791.1h1v1h-1z M320.3 761.5h1v1h-1z M333.1 759.8h1v1h-1z M317.9 760.5h1v1h-1z M367.4 801.6h1v1h-1z M312.1 797.6h1v1h-1z M370.6 789.5h1v1h-1z M330.9 798.5h1v1h-1z M314.9 757.5h1v1h-1z M378.7 766.7h1v1h-1z M375.8 795.0h1v1h-1z M312.4 760.0h1v1h-1z M356.2 762.7h1v1h-1z M357.6 790.6h1v1h-1z M325.9 780.3h1v1h-1z M324.5 801.2h1v1h-1z M355.0 791.6h1v1h-1z M354.4 758.2h1v1h-1z M373.7 796.3h1v1h-1z M346.6 786.3h1v1h-1z M344.9 795.0h1v1h-1z M347.9 769.7h1v1h-1z M346.7 766.3h1v1h-1z M309.4 782.6h1v1h-1z M372.5 793.1h1v1h-1z M324.3 781.9h1v1h-1z M351.6 785.7h1v1h-1z M342.6 782.0h1v1h-1z M359.2 801.7h1v1h-1z M346.6 796.6h1v1h-1z M358.6 761.3h1v1h-1z M327.9 771.6h1v1h-1z M334.9 781.0h1v1h-1z M330.5 807.9h1v1h-1z M362.6 774.7h1v1h-1z M360.1 804.0h1v1h-1z M320.7 788.3h1v1h-1z M379.0 774.9h1v1h-1z M373.1 797.6h1v1h-1z M332.4 762.7h1v1h-1z M367.9 777.0h1v1h-1z M334.6 779.6h1v1h-1z M362.2 802.4h1v1h-1z M375.9 795.6h1v1h-1z M321.8 774.6h1v1h-1z M309.5 765.6h1v1h-1z M333.8 764.4h1v1h-1z M343.8 762.0h1v1h-1z M356.7 776.8h1v1h-1z M327.0 791.4h1v1h-1z M332.9 756.3h1v1h-1z M370.2 795.0h1v1h-1z M373.1 770.6h1v1h-1z M328.3 791.9h1v1h-1z M319.7 806.2h1v1h-1z M356.7 784.1h1v1h-1z M312.8 770.0h1v1h-1z M339.9 807.0h1v1h-1z M319.6 786.4h1v1h-1z M314.7 806.5h1v1h-1z M363.5 798.1h1v1h-1z M363.7 764.5h1v1h-1z M326.6 757.1h1v1h-1z M349.3 759.3h1v1h-1z M322.7 764.2h1v1h-1z M376.2 796.8h1v1h-1z M329.9 806.5h1v1h-1z M320.6 762.4h1v1h-1z M336.8 797.7h1v1h-1z M316.2 796.8h1v1h-1z M348.7 797.3h1v1h-1z M333.6 757.2h1v1h-1z M316.2 793.3h1v1h-1z M346.0 795.5h1v1h-1z M323.5 769.8h1v1h-1z M324.4 800.1h1v1h-1z M360.3 763.2h1v1h-1z M362.0 757.1h1v1h-1z M343.1 768.6h1v1h-1z M364.8 793.1h1v1h-1z M358.9 765.5h1v1h-1z M312.1 788.9h1v1h-1z M359.7 755.5h1v1h-1z M370.2 802.6h1v1h-1z M335.4 782.5h1v1h-1z M356.5 804.1h1v1h-1z M356.4 782.3h1v1h-1z M365.1 781.0h1v1h-1z M311.4 784.0h1v1h-1z M339.2 772.8h1v1h-1z M337.8 766.7h1v1h-1z M331.8 794.6h1v1h-1z M373.6 779.2h1v1h-1z M370.7 761.7h1v1h-1z M346.7 794.5h1v1h-1z M366.0 775.5h1v1h-1z M321.3 805.9h1v1h-1z M353.5 789.6h1v1h-1z M334.3 761.0h1v1h-1z M350.6 776.4h1v1h-1z M374.0 790.2h1v1h-1z M364.2 785.2h1v1h-1z M364.0 762.1h1v1h-1z M381.7 785.8h1v1h-1z M352.6 765.1h1v1h-1z M315.7 792.4h1v1h-1z M362.0 790.3h1v1h-1z M327.6 780.8h1v1h-1z M365.1 789.0h1v1h-1z M375.4 759.7h1v1h-1z M365.6 755.7h1v1h-1z M354.6 783.3h1v1h-1z M314.4 777.2h1v1h-1z M357.8 801.0h1v1h-1z M314.6 782.0h1v1h-1z M367.1 761.2h1v1h-1z M374.2 804.8h1v1h-1z M334.0 766.1h1v1h-1z M319.6 766.6h1v1h-1z M339.6 792.5h1v1h-1z M377.4 784.6h1v1h-1z M378.6 777.6h1v1h-1z M357.0 755.0h1v1h-1z M339.6 756.2h1v1h-1z M318.6 797.9h1v1h-1z M317.4 770.9h1v1h-1z M347.4 782.8h1v1h-1z M311.2 760.9h1v1h-1z M358.4 776.5h1v1h-1z M315.7 780.4h1v1h-1z M336.2 808.0h1v1h-1z M312.5 764.6h1v1h-1z M314.5 784.2h1v1h-1z M379.1 796.2h1v1h-1z M317.2 783.6h1v1h-1z M335.1 806.8h1v1h-1z M360.6 787.0h1v1h-1z M327.7 778.1h1v1h-1z M347.4 775.1h1v1h-1z M350.2 759.8h1v1h-1z M339.7 807.3h1v1h-1z M338.1 781.8h1v1h-1z M364.0 798.1h1v1h-1z M362.8 775.2h1v1h-1z M361.0 765.6h1v1h-1z M354.0 755.8h1v1h-1z M323.1 764.3h1v1h-1z M334.7 794.1h1v1h-1z M310.5 801.4h1v1h-1z M315.7 805.4h1v1h-1z M378.3 787.6h1v1h-1z M370.4 804.9h1v1h-1z M341.7 800.4h1v1h-1z M311.5 796.4h1v1h-1z M356.3 796.2h1v1h-1z M319.9 759.4h1v1h-1z M347.2 787.1h1v1h-1z M359.2 764.5h1v1h-1z M350.5 806.3h1v1h-1z M327.5 798.4h1v1h-1z M379.1 790.7h1v1h-1z M341.1 777.2h1v1h-1z M343.1 761.6h1v1h-1z M314.4 769.8h1v1h-1z M321.7 802.7h1v1h-1z M335.4 801.4h1v1h-1z M350.1 802.6h1v1h-1z M374.5 792.7h1v1h-1z M341.7 767.9h1v1h-1z M350.2 771.5h1v1h-1z M369.5 757.3h1v1h-1z" fill="#4a4a4a"/>
</g>
<rect x="340" y="672" width="40" height="3" fill="#999"/>
<rect x="335" y="812" width="50" height="3" fill="#999"/>
<rect x="720" y="606" width="13" height="219" fill="#fff"/>
<line x1="720.5" y1="625" x2="720.5" y2="825" stroke="#ff2020" stroke-width="1.3"/>
<line x1="733" y1="606" x2="733" y2="825" stroke="#ff2020" stroke-width="1.3"/>
<path d="M722 630.0H731 M722 638.0H731 M722 646.0H731 M722 654.0H731 M722 662.0H731 M722 670.0H731 M722 678.0H731 M722 686.0H731 M722 694.0H731 M722 702.0H731 M722 710.0H731 M722 718.0H731 M722 726.0H731 M722 734.0H731 M722 742.0H731 M722 750.0H731 M722 758.0H731 M722 766.0H731 M722 774.0H731 M722 782.0H731 M722 790.0H731 M722 798.0H731 M722 806.0H731 M722 814.0H731" stroke="#8a8a8a" stroke-width="0.9"/>
<line x1="708" y1="672" x2="708" y2="808" stroke="#00e600" stroke-width="1.1"/>
<line x1="716" y1="672" x2="716" y2="808" stroke="#00e600" stroke-width="1.1"/>
<path d="M708 676.0H716 M708 681.5H716 M708 687.0H716 M708 692.5H716 M708 698.0H716 M708 703.5H716 M708 709.0H716 M708 714.5H716 M708 720.0H716 M708 725.5H716 M708 731.0H716 M708 736.5H716 M708 742.0H716 M708 747.5H716 M708 753.0H716 M708 758.5H716 M708 764.0H716 M708 769.5H716 M708 775.0H716 M708 780.5H716 M708 786.0H716 M708 791.5H716 M708 797.0H716 M708 802.5H716 M708 808.0H716" stroke="#8a8a8a" stroke-width="0.8"/>
<rect x="722.4" y="597.8" width="15.6" height="10.4" fill="#f28c28"/>
<rect x="722.4" y="597.8" width="15.6" height="10.4" stroke="#1f1fff" stroke-width="1.2" fill="none"/>
<rect x="722" y="817.7" width="16" height="10.3" fill="#f28c28"/>
<rect x="722" y="817.7" width="16" height="10.3" stroke="#1f1fff" stroke-width="1.2" fill="none"/>
<rect x="671" y="708" width="9" height="10" fill="#f28c28"/>
<rect x="671" y="763" width="9" height="10" fill="#f28c28"/>
<rect x="721" y="708" width="9" height="10" fill="#f28c28"/>
<rect x="721" y="763" width="9" height="10" fill="#f28c28"/>
<line x1="730.4" y1="556" x2="730.4" y2="598" stroke="#7d7d7d" stroke-width="1"/>
<line x1="726" y1="556" x2="726" y2="598" stroke="#8c4646" stroke-width="1"/>
<line x1="734" y1="556" x2="734" y2="598" stroke="#7d7d7d" stroke-width="1"/>
<rect x="706" y="828" width="24" height="30" stroke="#ff2020" stroke-width="1.1" fill="none"/>
<path d="M706 834.0H730 M706 840.0H730 M706 846.0H730 M706 852.0H730 M706 858.0H730" stroke="#8a8a8a" stroke-width="0.8"/>
<path d="M712.0 828V858 M718.0 828V858 M724.0 828V858 M730.0 828V858" stroke="#8a8a8a" stroke-width="0.8"/>
<rect x="708" y="842" width="20" height="5" stroke="#ff00ff" stroke-width="1" fill="none"/>
<text x="710" y="846.1" font-size="3.5" fill="#00e600" font-family="Liberation Sans" font-weight="bold" textLength="16" lengthAdjust="spacingAndGlyphs">XS2K9Y</text>
<rect x="334.8" y="722.9" width="22.7" height="22.5" fill="#fff"/>
<rect x="334.8" y="722.9" width="22.7" height="22.5" stroke="#ff2020" stroke-width="1.2" fill="none"/>
<path d="M334.8 728.5H357.5 M334.8 734.1H357.5 M334.8 739.7H357.5" stroke="#8a8a8a" stroke-width="0.8"/>
<path d="M340.4 722.9V745.4 M346.0 722.9V745.4 M351.6 722.9V745.4" stroke="#8a8a8a" stroke-width="0.8"/>
<rect x="444" y="722.9" width="22.7" height="22.5" fill="#fff"/>
<rect x="444" y="722.9" width="22.7" height="22.5" stroke="#ff2020" stroke-width="1.2" fill="none"/>
<path d="M444 728.5H466.7 M444 734.1H466.7 M444 739.7H466.7" stroke="#8a8a8a" stroke-width="0.8"/>
<path d="M449.6 722.9V745.4 M455.2 722.9V745.4 M460.8 722.9V745.4" stroke="#8a8a8a" stroke-width="0.8"/>
<rect x="553.5" y="722.9" width="22.7" height="22.5" fill="#fff"/>
<rect x="553.5" y="722.9" width="22.7" height="22.5" stroke="#ff2020" stroke-width="1.2" fill="none"/>
<path d="M553.5 728.5H576.2 M553.5 734.1H576.2 M553.5 739.7H576.2" stroke="#8a8a8a" stroke-width="0.8"/>
<path d="M559.1 722.9V745.4 M564.7 722.9V745.4 M570.3 722.9V745.4" stroke="#8a8a8a" stroke-width="0.8"/>
<path d="M655 628 V688 M655 640 H718 M712 636 L720 640 L712 644" stroke="#ff2020" stroke-width="1.3" fill="none"/>
<path d="M657 628 L718 640 L657 655" stroke="#777" stroke-width="0.9" fill="none"/>
<line x1="784" y1="556" x2="784" y2="715" stroke="#00e600" stroke-width="1.1"/>
<line x1="788" y1="556" x2="788" y2="715" stroke="#00e600" stroke-width="1.1"/>
<line x1="786" y1="556" x2="786" y2="715" stroke="#7d7d7d" stroke-width="0.8"/>
<line x1="807" y1="603" x2="807" y2="860" stroke="#7d7d7d" stroke-width="1"/>
<line x1="746" y1="603" x2="820" y2="603" stroke="#8c4646" stroke-width="1.1" stroke-dasharray="9 3 2 3"/>
<line x1="746" y1="822.5" x2="820" y2="822.5" stroke="#8c4646" stroke-width="1.1" stroke-dasharray="9 3 2 3"/>
<line x1="308" y1="753.75" x2="715" y2="753.75" stroke="#7d7d7d" stroke-width="0.9"/>
<line x1="308" y1="750" x2="308" y2="757" stroke="#7d7d7d" stroke-width="0.8"/>
<line x1="333" y1="750" x2="333" y2="757" stroke="#7d7d7d" stroke-width="0.8"/>
<line x1="358" y1="750" x2="358" y2="757" stroke="#7d7d7d" stroke-width="0.8"/>
<line x1="392" y1="750" x2="392" y2="757" stroke="#7d7d7d" stroke-width="0.8"/>
<line x1="444" y1="750" x2="444" y2="757" stroke="#7d7d7d" stroke-width="0.8"/>
<line x1="467" y1="750" x2="467" y2="757" stroke="#7d7d7d" stroke-width="0.8"/>
<line x1="490" y1="750" x2="490" y2="757" stroke="#7d7d7d" stroke-width="0.8"/>
<line x1="553" y1="750" x2="553" y2="757" stroke="#7d7d7d" stroke-width="0.8"/>
<line x1="577" y1="750" x2="577" y2="757" stroke="#7d7d7d" stroke-width="0.8"/>
<line x1="650" y1="750" x2="650" y2="757" stroke="#7d7d7d" stroke-width="0.8"/>
<line x1="715" y1="750" x2="715" y2="757" stroke="#7d7d7d" stroke-width="0.8"/>
<text x="320" y="751.6" font-size="4.4" fill="#00e600" font-family="Liberation Sans" font-weight="bold" textLength="8" lengthAdjust="spacingAndGlyphs">29K</text>
<text x="340" y="751.6" font-size="4.4" fill="#00e600" font-family="Liberation Sans" font-weight="bold" textLength="8" lengthAdjust="spacingAndGlyphs">9YN</text>
<text x="400" y="751.6" font-size="4.4" fill="#00e600" font-family="Liberation Sans" font-weight="bold" textLength="12" lengthAdjust="spacingAndGlyphs">7X2XC</text>
<text x="450" y="751.6" font-size="4.4" fill="#00e600" font-family="Liberation Sans" font-weight="bold" textLength="8" lengthAdjust="spacingAndGlyphs">OI5</text>
<text x="505" y="751.6" font-size="4.4" fill="#00e600" font-family="Liberation Sans" font-weight="bold" textLength="12" lengthAdjust="spacingAndGlyphs">DFM0I</text>
<text x="560" y="751.6" font-size="4.4" fill="#00e600" font-family="Liberation Sans" font-weight="bold" textLength="8" lengthAdjust="spacingAndGlyphs">3ZD</text>
<text x="600" y="751.6" font-size="4.4" fill="#00e600" font-family="Liberation Sans" font-weight="bold" textLength="12" lengthAdjust="spacingAndGlyphs">SPORW</text>
<line x1="307" y1="830" x2="650" y2="830" stroke="#7d7d7d" stroke-width="0.9"/>
<line x1="251" y1="600" x2="251" y2="825" stroke="#7d7d7d" stroke-width="0.9"/>
<line x1="246" y1="600" x2="292" y2="600" stroke="#7d7d7d" stroke-width="0.8" stroke-dasharray="4 2"/>
<line x1="246" y1="619" x2="292" y2="619" stroke="#7d7d7d" stroke-width="0.8" stroke-dasharray="4 2"/>
<line x1="246" y1="628" x2="292" y2="628" stroke="#7d7d7d" stroke-width="0.8" stroke-dasharray="4 2"/>
<line x1="246" y1="655" x2="292" y2="655" stroke="#7d7d7d" stroke-width="0.8" stroke-dasharray="4 2"/>
<line x1="246" y1="662" x2="292" y2="662" stroke="#7d7d7d" stroke-width="0.8" stroke-dasharray="4 2"/>
<line x1="246" y1="667" x2="292" y2="667" stroke="#7d7d7d" stroke-width="0.8" stroke-dasharray="4 2"/>
<line x1="246" y1="808" x2="292" y2="808" stroke="#7d7d7d" stroke-width="0.8" stroke-dasharray="4 2"/>
<line x1="246" y1="813" x2="292" y2="813" stroke="#7d7d7d" stroke-width="0.8" stroke-dasharray="4 2"/>
<line x1="246" y1="818" x2="292" y2="818" stroke="#7d7d7d" stroke-width="0.8" stroke-dasharray="4 2"/>
<line x1="246" y1="825" x2="292" y2="825" stroke="#7d7d7d" stroke-width="0.8" stroke-dasharray="4 2"/>
<text transform="translate(251.1 612.5) rotate(-90)" font-size="5.2" fill="#00e600" font-family="Liberation Sans" font-weight="bold" text-anchor="middle" textLength="9" lengthAdjust="spacingAndGlyphs">089</text>
<text transform="translate(251.1 644.5) rotate(-90)" font-size="5.2" fill="#00e600" font-family="Liberation Sans" font-weight="bold" text-anchor="middle" textLength="9" lengthAdjust="spacingAndGlyphs">176</text>
<text transform="translate(251.1 704.5) rotate(-90)" font-size="5.2" fill="#00e600" font-family="Liberation Sans" font-weight="bold" text-anchor="middle" textLength="9" lengthAdjust="spacingAndGlyphs">505</text>
<text transform="translate(251.1 794.5) rotate(-90)" font-size="5.2" fill="#00e600" font-family="Liberation Sans" font-weight="bold" text-anchor="middle" textLength="9" lengthAdjust="spacingAndGlyphs">687</text>
<line x1="291.4" y1="877.5" x2="730.4" y2="877.5" stroke="#7d7d7d" stroke-width="1"/>
<line x1="291.4" y1="874.5" x2="291.4" y2="880.5" stroke="#7d7d7d" stroke-width="0.9"/>
<path d="M289.4 879.5 L293.4 875.5" stroke="#1f1fff" stroke-width="1"/>
<line x1="431.3" y1="874.5" x2="431.3" y2="880.5" stroke="#7d7d7d" stroke-width="0.9"/>
<path d="M429.3 879.5 L433.3 875.5" stroke="#1f1fff" stroke-width="1"/>
<line x1="510.7" y1="874.5" x2="510.7" y2="880.5" stroke="#7d7d7d" stroke-width="0.9"/>
<path d="M508.7 879.5 L512.7 875.5" stroke="#1f1fff" stroke-width="1"/>
<line x1="650.5" y1="874.5" x2="650.5" y2="880.5" stroke="#7d7d7d" stroke-width="0.9"/>
<path d="M648.5 879.5 L652.5 875.5" stroke="#1f1fff" stroke-width="1"/>
<line x1="730.4" y1="874.5" x2="730.4" y2="880.5" stroke="#7d7d7d" stroke-width="0.9"/>
<path d="M728.4 879.5 L732.4 875.5" stroke="#1f1fff" stroke-width="1"/>
<text x="358" y="876.2" font-size="4.5" fill="#00e600" font-family="Liberation Sans" font-weight="bold" textLength="9" lengthAdjust="spacingAndGlyphs">XNX</text>
<text x="466" y="876.2" font-size="4.5" fill="#00e600" font-family="Liberation Sans" font-weight="bold" textLength="9" lengthAdjust="spacingAndGlyphs">MPW</text>
<text x="575" y="876.2" font-size="4.5" fill="#00e600" font-family="Liberation Sans" font-weight="bold" textLength="9" lengthAdjust="spacingAndGlyphs">7Z7</text>
<text x="686" y="876.2" font-size="4.5" fill="#00e600" font-family="Liberation Sans" font-weight="bold" textLength="9" lengthAdjust="spacingAndGlyphs">H2P</text>
<circle cx="291.4" cy="891.7" r="8.5" fill="none" stroke="#ffff00" stroke-width="1.3"/>
<text x="291.4" y="895.7" font-size="11" fill="#1f1fff" text-anchor="middle" font-family="Liberation Sans" textLength="6" lengthAdjust="spacingAndGlyphs">C</text>
<circle cx="431.3" cy="891.7" r="8.5" fill="none" stroke="#ffff00" stroke-width="1.3"/>
<text x="431.3" y="895.7" font-size="11" fill="#1f1fff" text-anchor="middle" font-family="Liberation Sans" textLength="6" lengthAdjust="spacingAndGlyphs">D</text>
<circle cx="510.7" cy="891.7" r="8.5" fill="none" stroke="#ffff00" stroke-width="1.3"/>
<text x="510.7" y="895.7" font-size="11" fill="#1f1fff" text-anchor="middle" font-family="Liberation Sans" textLength="6" lengthAdjust="spacingAndGlyphs">E</text>
<circle cx="650.5" cy="891.7" r="8.5" fill="none" stroke="#ffff00" stroke-width="1.3"/>
<text x="650.5" y="895.7" font-size="11" fill="#1f1fff" text-anchor="middle" font-family="Liberation Sans" textLength="6" lengthAdjust="spacingAndGlyphs">F</text>
<circle cx="730.4" cy="891.7" r="8.5" fill="none" stroke="#ffff00" stroke-width="1.3"/>
<text x="730.4" y="895.7" font-size="11" fill="#1f1fff" text-anchor="middle" font-family="Liberation Sans" textLength="6" lengthAdjust="spacingAndGlyphs">G</text>
<circle cx="826" cy="603" r="8.5" fill="none" stroke="#ffff00" stroke-width="1.3"/>
<text x="826" y="607" font-size="11" fill="#1f1fff" text-anchor="middle" font-family="Liberation Sans" textLength="6" lengthAdjust="spacingAndGlyphs">8</text>
<circle cx="826" cy="767.5" r="8.5" fill="none" stroke="#ffff00" stroke-width="1.3"/>
<text x="826" y="771.5" font-size="11" fill="#1f1fff" text-anchor="middle" font-family="Liberation Sans" textLength="6" lengthAdjust="spacingAndGlyphs">9</text>
<circle cx="826" cy="822.5" r="8.5" fill="none" stroke="#ffff00" stroke-width="1.3"/>
<text x="826" y="826.5" font-size="9.5" fill="#1f1fff" text-anchor="middle" font-family="Liberation Sans" textLength="11" lengthAdjust="spacingAndGlyphs">10</text>
<circle cx="634.5" cy="542" r="10" fill="#fff" stroke="#1f1fff" stroke-width="1.3"/>
<line x1="624.5" y1="542" x2="644.5" y2="542" stroke="#1f1fff" stroke-width="1"/>
<text x="634.5" y="540.5" font-size="8" fill="#1f1fff" text-anchor="middle" font-family="Liberation Sans">3</text>
<text x="628.5" y="547.6" font-size="5.2" fill="#00e600" font-family="Liberation Sans" font-weight="bold" textLength="12" lengthAdjust="spacingAndGlyphs">A7H51</text>
<circle cx="826.5" cy="734" r="9.5" fill="#fff" stroke="#1f1fff" stroke-width="1.3"/>
<line x1="817.0" y1="734" x2="836.0" y2="734" stroke="#1f1fff" stroke-width="1"/>
<text x="826.5" y="732.5" font-size="8" fill="#1f1fff" text-anchor="middle" font-family="Liberation Sans">2</text>
<text x="820.5" y="739.6" font-size="5.2" fill="#00e600" font-family="Liberation Sans" font-weight="bold" textLength="12" lengthAdjust="spacingAndGlyphs">7EGY9</text>
<circle cx="546.5" cy="789" r="9.5" fill="#fff" stroke="#1f1fff" stroke-width="1.3"/>
<line x1="537.0" y1="789" x2="556.0" y2="789" stroke="#1f1fff" stroke-width="1"/>
<text x="546.5" y="787.5" font-size="8" fill="#1f1fff" text-anchor="middle" font-family="Liberation Sans">4</text>
<text x="540.5" y="794.6" font-size="5.2" fill="#00e600" font-family="Liberation Sans" font-weight="bold" textLength="12" lengthAdjust="spacingAndGlyphs">LC3NT</text>
<path d="M628 531 L634.5 527 L641 531 Z M646 542 L641 537 V547 Z" fill="#8c4646"/>
<path d="M820 724 L826.5 720 L833 724 Z M838 734 L833 729 V739 Z" fill="#8c4646"/>
<path d="M235 734 L240 729 L245 734 Z" fill="#8c4646"/>
<path d="M636 843 V852 L642 847.5 Z" fill="#8c4646"/>
<rect x="324" y="576" width="18" height="5" stroke="#ff00ff" stroke-width="1" fill="none"/>
<text x="326" y="580.1" font-size="3.5" fill="#00e600" font-family="Liberation Sans" font-weight="bold" textLength="14" lengthAdjust="spacingAndGlyphs">6ZMIT</text>
<rect x="324" y="589" width="18" height="5" stroke="#ff00ff" stroke-width="1" fill="none"/>
<text x="326" y="593.1" font-size="3.5" fill="#00e600" font-family="Liberation Sans" font-weight="bold" textLength="14" lengthAdjust="spacingAndGlyphs">WXXBR</text>
<rect x="473" y="581" width="18" height="5" stroke="#ff00ff" stroke-width="1" fill="none"/>
<text x="475" y="585.1" font-size="3.5" fill="#00e600" font-family="Liberation Sans" font-weight="bold" textLength="14" lengthAdjust="spacingAndGlyphs">FVWGN</text>
<rect x="576" y="576" width="18" height="5" stroke="#ff00ff" stroke-width="1" fill="none"/>
<text x="578" y="580.1" font-size="3.5" fill="#00e600" font-family="Liberation Sans" font-weight="bold" textLength="14" lengthAdjust="spacingAndGlyphs">RD62O</text>
<rect x="576" y="589" width="18" height="5" stroke="#ff00ff" stroke-width="1" fill="none"/>
<text x="578" y="593.1" font-size="3.5" fill="#00e600" font-family="Liberation Sans" font-weight="bold" textLength="14" lengthAdjust="spacingAndGlyphs">MH4R2</text>
<rect x="525" y="643" width="18" height="5" stroke="#ff00ff" stroke-width="1" fill="none"/>
<text x="527" y="647.1" font-size="3.5" fill="#00e600" font-family="Liberation Sans" font-weight="bold" textLength="14" lengthAdjust="spacingAndGlyphs">IGUIE</text>
<rect x="474" y="707" width="18" height="5" stroke="#ff00ff" stroke-width="1" fill="none"/>
<text x="476" y="711.1" font-size="3.5" fill="#00e600" font-family="Liberation Sans" font-weight="bold" textLength="14" lengthAdjust="spacingAndGlyphs">6BK4O</text>
<rect x="532" y="707" width="18" height="5" stroke="#ff00ff" stroke-width="1" fill="none"/>
<text x="534" y="711.1" font-size="3.5" fill="#00e600" font-family="Liberation Sans" font-weight="bold" textLength="14" lengthAdjust="spacingAndGlyphs">SNV59</text>
<rect x="751" y="683" width="18" height="5" stroke="#ff00ff" stroke-width="1" fill="none"/>
<text x="753" y="687.1" font-size="3.5" fill="#00e600" font-family="Liberation Sans" font-weight="bold" textLength="14" lengthAdjust="spacingAndGlyphs">N9DWA</text>
<rect x="519" y="829" width="18" height="5" stroke="#ff00ff" stroke-width="1" fill="none"/>
<text x="521" y="833.1" font-size="3.5" fill="#00e600" font-family="Liberation Sans" font-weight="bold" textLength="14" lengthAdjust="spacingAndGlyphs">D7GIM</text>
<rect x="450" y="829" width="20" height="5" stroke="#ff00ff" stroke-width="1" fill="none"/>
<text x="452" y="833.1" font-size="3.5" fill="#00e600" font-family="Liberation Sans" font-weight="bold" textLength="16" lengthAdjust="spacingAndGlyphs">3BDSN7</text>
<rect x="672" y="722" width="18" height="5" stroke="#ff00ff" stroke-width="1" fill="none"/>
<text x="674" y="726.1" font-size="3.5" fill="#00e600" font-family="Liberation Sans" font-weight="bold" textLength="14" lengthAdjust="spacingAndGlyphs">XYGTX</text>
<rect x="748" y="842" width="18" height="5" stroke="#ff00ff" stroke-width="1" fill="none"/>
<text x="750" y="846.1" font-size="3.5" fill="#00e600" font-family="Liberation Sans" font-weight="bold" textLength="14" lengthAdjust="spacingAndGlyphs">ED8RD</text>
<text x="311" y="578.2" font-size="4.5" fill="#00e600" font-family="Liberation Sans" font-weight="bold" textLength="12" lengthAdjust="spacingAndGlyphs">YPKFU</text>
<text x="311" y="582.7" font-size="4.5" fill="#00e600" font-family="Liberation Sans" font-weight="bold" textLength="12" lengthAdjust="spacingAndGlyphs">46HAH</text>
<text x="311" y="591.2" font-size="4.5" fill="#00e600" font-family="Liberation Sans" font-weight="bold" textLength="12" lengthAdjust="spacingAndGlyphs">S4SXY</text>
<text x="311" y="595.7" font-size="4.5" fill="#00e600" font-family="Liberation Sans" font-weight="bold" textLength="12" lengthAdjust="spacingAndGlyphs">3S43P</text>
<text x="561" y="578.2" font-size="4.5" fill="#00e600" font-family="Liberation Sans" font-weight="bold" textLength="12" lengthAdjust="spacingAndGlyphs">YXD0V</text>
<text x="561" y="582.7" font-size="4.5" fill="#00e600" font-family="Liberation Sans" font-weight="bold" textLength="12" lengthAdjust="spacingAndGlyphs">ONAMT</text>
<text x="561" y="591.2" font-size="4.5" fill="#00e600" font-family="Liberation Sans" font-weight="bold" textLength="12" lengthAdjust="spacingAndGlyphs">KX5EW</text>
<text x="561" y="595.7" font-size="4.5" fill="#00e600" font-family="Liberation Sans" font-weight="bold" textLength="12" lengthAdjust="spacingAndGlyphs">I7I3T</text>
<text x="473" y="580.2" font-size="4.5" fill="#00e600" font-family="Liberation Sans" font-weight="bold" textLength="18" lengthAdjust="spacingAndGlyphs">09K99UG</text>
<text x="262" y="644.2" font-size="4.5" fill="#00e600" font-family="Liberation Sans" font-weight="bold" textLength="33" lengthAdjust="spacingAndGlyphs">DF14BKIBRT9LP</text>
<text x="262" y="648.7" font-size="4.5" fill="#00e600" font-family="Liberation Sans" font-weight="bold" textLength="33" lengthAdjust="spacingAndGlyphs">96A7C7E18XPK3</text>
<text x="420" y="632.2" font-size="4.5" fill="#00e600" font-family="Liberation Sans" font-weight="bold" textLength="40" lengthAdjust="spacingAndGlyphs">HKHWT21D9PDWCXW0</text>
<text x="420" y="636.7" font-size="4.5" fill="#00e600" font-family="Liberation Sans" font-weight="bold" textLength="40" lengthAdjust="spacingAndGlyphs">VAZL960TU116KXP8</text>
<text x="420" y="653.2" font-size="4.5" fill="#00e600" font-family="Liberation Sans" font-weight="bold" textLength="20" lengthAdjust="spacingAndGlyphs">GK2BT0FU</text>
<text x="420" y="657.7" font-size="4.5" fill="#00e600" font-family="Liberation Sans" font-weight="bold" textLength="40" lengthAdjust="spacingAndGlyphs">O5WBERXKMP7ITWW9</text>
<text x="358" y="715.2" font-size="4.5" fill="#00e600" font-family="Liberation Sans" font-weight="bold" textLength="28" lengthAdjust="spacingAndGlyphs">KTF26V0YBP7</text>
<text x="358" y="719.7" font-size="4.5" fill="#00e600" font-family="Liberation Sans" font-weight="bold" textLength="29" lengthAdjust="spacingAndGlyphs">A7L457ZHP5OX</text>
<text x="518" y="700.2" font-size="4.5" fill="#00e600" font-family="Liberation Sans" font-weight="bold" textLength="28" lengthAdjust="spacingAndGlyphs">DUT1U6UECZL</text>
<text x="518" y="704.7" font-size="4.5" fill="#00e600" font-family="Liberation Sans" font-weight="bold" textLength="29" lengthAdjust="spacingAndGlyphs">1IZP0L84U9EB</text>
<text x="651" y="725.2" font-size="4.5" fill="#00e600" font-family="Liberation Sans" font-weight="bold" textLength="16" lengthAdjust="spacingAndGlyphs">BH3V6I</text>
<text x="651" y="729.7" font-size="4.5" fill="#00e600" font-family="Liberation Sans" font-weight="bold" textLength="40" lengthAdjust="spacingAndGlyphs">K3PZ5E2I6KBUILKC</text>
<text x="736" y="640.2" font-size="4.5" fill="#00e600" font-family="Liberation Sans" font-weight="bold" textLength="40" lengthAdjust="spacingAndGlyphs">EUBGVWWAUFUZXP1Z</text>
<text x="736" y="644.7" font-size="4.5" fill="#00e600" font-family="Liberation Sans" font-weight="bold" textLength="40" lengthAdjust="spacingAndGlyphs">PN346VK6PG1S3ZZK</text>
<text x="270" y="818.2" font-size="4.5" fill="#00e600" font-family="Liberation Sans" font-weight="bold" textLength="28" lengthAdjust="spacingAndGlyphs">0MAX9VYAKCV</text>
<text x="270" y="822.7" font-size="4.5" fill="#00e600" font-family="Liberation Sans" font-weight="bold" textLength="30" lengthAdjust="spacingAndGlyphs">5UBZAX7FK6L3</text>
<text x="270" y="843.2" font-size="4.5" fill="#00e600" font-family="Liberation Sans" font-weight="bold" textLength="30" lengthAdjust="spacingAndGlyphs">7W676XO00AG0</text>
<text x="270" y="847.7" font-size="4.5" fill="#00e600" font-family="Liberation Sans" font-weight="bold" textLength="30" lengthAdjust="spacingAndGlyphs">Y3CU9EOZ1C42</text>
<text x="535" y="844.2" font-size="4.5" fill="#00e600" font-family="Liberation Sans" font-weight="bold" textLength="40" lengthAdjust="spacingAndGlyphs">HNKO758Z7537RMRC</text>
<text x="535" y="848.7" font-size="4.5" fill="#00e600" font-family="Liberation Sans" font-weight="bold" textLength="40" lengthAdjust="spacingAndGlyphs">0WVNZ7GTPAVB9EP0</text>
<text x="655" y="841.2" font-size="4.5" fill="#00e600" font-family="Liberation Sans" font-weight="bold" textLength="40" lengthAdjust="spacingAndGlyphs">7004RZ2UZXK2ODMF</text>
<text x="655" y="845.7" font-size="4.5" fill="#00e600" font-family="Liberation Sans" font-weight="bold" textLength="40" lengthAdjust="spacingAndGlyphs">8VI07PSH984MAYTM</text>
<text x="665" y="798.2" font-size="4.5" fill="#00e600" font-family="Liberation Sans" font-weight="bold" textLength="20" lengthAdjust="spacingAndGlyphs">DDWSZN0N</text>
<text x="758" y="685.2" font-size="4.5" fill="#00e600" font-family="Liberation Sans" font-weight="bold" textLength="16" lengthAdjust="spacingAndGlyphs">CE23A9</text>
<text x="484" y="611.9" font-size="4.0" fill="#00e600" font-family="Liberation Sans" font-weight="bold" textLength="18" lengthAdjust="spacingAndGlyphs">22YR2MA</text>
<text x="575" y="639.9" font-size="4.0" fill="#00e600" font-family="Liberation Sans" font-weight="bold" textLength="16" lengthAdjust="spacingAndGlyphs">L2I6OV</text>
<text x="395" y="699.9" font-size="4.0" fill="#00e600" font-family="Liberation Sans" font-weight="bold" textLength="20" lengthAdjust="spacingAndGlyphs">NSGCGVTW</text>
<text x="488" y="771.9" font-size="4.0" fill="#00e600" font-family="Liberation Sans" font-weight="bold" textLength="16" lengthAdjust="spacingAndGlyphs">9M4UEZ</text>
<text x="750" y="612.9" font-size="4.0" fill="#00e600" font-family="Liberation Sans" font-weight="bold" textLength="12" lengthAdjust="spacingAndGlyphs">EWYKU</text>
<text x="750" y="662.9" font-size="4.0" fill="#00e600" font-family="Liberation Sans" font-weight="bold" textLength="12" lengthAdjust="spacingAndGlyphs">C37GI</text>
<path d="M344 577 L356 577 L356 600" stroke="#7d7d7d" stroke-width="0.9" fill="none"/>
<path d="M344 590 L350 590 L350 619" stroke="#7d7d7d" stroke-width="0.9" fill="none"/>
<path d="M597 577 L610 577 L610 600" stroke="#7d7d7d" stroke-width="0.9" fill="none"/>
<path d="M597 590 L605 590 L605 619" stroke="#7d7d7d" stroke-width="0.9" fill="none"/>
<path d="M298 643 L336 643 L336 672" stroke="#7d7d7d" stroke-width="0.9" fill="none"/>
<path d="M460 631 L481 631 L481 655" stroke="#7d7d7d" stroke-width="0.9" fill="none"/>
<path d="M460 652 L486 652 L486 700" stroke="#7d7d7d" stroke-width="0.9" fill="none"/>
<path d="M459 629 L495 629 L495 655" stroke="#7d7d7d" stroke-width="0.9" fill="none"/>
<path d="M492 810 L512 810 L512 836" stroke="#7d7d7d" stroke-width="0.9" fill="none"/>
<circle cx="354.6" cy="905.5" r="10" fill="#fff" stroke="#1f1fff" stroke-width="1.4"/>
<line x1="344.6" y1="905.5" x2="412.1" y2="905.5" stroke="#1f1fff" stroke-width="1.5"/>
<text x="354.6" y="904.3" font-size="8.5" fill="#1f1fff" text-anchor="middle" font-family="Liberation Sans" font-weight="bold">1</text>
<text x="347.6" y="910.7" font-size="5.2" fill="#00e600" font-family="Liberation Sans" font-weight="bold" textLength="14" lengthAdjust="spacingAndGlyphs">DWXET</text>
<text x="370.1" y="904.5" font-size="9" fill="#1f1fff" font-family="Liberation Sans" font-weight="bold" textLength="42" lengthAdjust="spacingAndGlyphs">DENAH POND</text>
<text x="370.1" y="910.7" font-size="4.9" fill="#00e600" font-family="Liberation Sans" font-weight="bold" textLength="35.699999999999996" lengthAdjust="spacingAndGlyphs">KGL12DFYC5W887</text>
<rect x="493" y="802" width="38" height="32" stroke="#1f1fff" stroke-width="1.2" fill="none" stroke-dasharray="7 2.5 1.5 2.5"/>
<path d="M531 802 H536 V789" stroke="#1f1fff" stroke-width="1.2" fill="none"/>
<path d="M16.4 986.3 V899.4 L66.4 986.3 Z M16.4 978.3 H24.5 V986.3 M44.3 972 L56.8 984.5 M56.8 972 L44.3 984.5 M18.4 925.2 L24.5 931 L30.6 925.3 M24.5 931 V937.6" stroke="#2a3aff" stroke-width="1.2" fill="none" stroke-linejoin="miter"/>
<rect x="1850.8" y="188.6" width="10.6" height="3.8" fill="#e8e8e8" stroke="#2a2a2a" stroke-width="1"/>
<rect x="1873" y="182.6" width="8.4" height="8.6" fill="#f0f0f0" stroke="#2a2a2a" stroke-width="1"/>
<rect x="1870.7" y="184.7" width="8.6" height="8.8" fill="#f0f0f0" stroke="#2a2a2a" stroke-width="1"/>
<rect x="1873.4" y="187.2" width="3.3" height="3.3" fill="#7a7a7a" stroke="#2a2a2a" stroke-width="0.8"/>
<path d="M1891 184 L1899.8 192 M1899.8 184 L1891 192" stroke="#2a2a2a" stroke-width="4" stroke-linecap="square"/>
<path d="M1891 184 L1899.8 192 M1899.8 184 L1891 192" stroke="#f0f0f0" stroke-width="2.2" stroke-linecap="square"/>
<rect x="1875.5" y="433.5" width="34" height="133" rx="4" fill="#8c8c8c" stroke="#6c6c6c" stroke-width="1.5"/>
<path d="M1877 446 H1908 M1877 480.5 H1908" stroke="#9a9a9a" stroke-width="0.8"/>
<g fill="none" stroke="#7a7a7a" stroke-width="1.3"><circle cx="1902.5" cy="439.5" r="3"/><path d="M1901 438 L1904 441 M1904 438 L1901 441"/><path d="M1897 470 A8 8 0 1 1 1898 460"/><circle cx="1889.5" cy="463" r="4"/>
<path d="M1886 505 C1883 500 1882 496 1884 494 L1887 497 V486 C1887 484 1889 484 1889 486 V494 V484 C1889 482 1892 482 1892 484 V494 V485 C1892 483 1895 483 1895 485 V495 V488 C1895 486 1898 486 1898 488 V498 C1898 503 1895 507 1891 507 Z"/>
<path d="M1880 513 L1896 529 M1880 513 H1885 M1880 513 V518 M1880 529 L1888 521 M1880 529 V524 M1880 529 H1885 M1896 513 L1890 519 M1896 513 H1891 M1896 513 V518"/><circle cx="1896" cy="528" r="3.5"/><path d="M1898.5 530.5 L1902 534"/>
<path d="M1889 544 H1895 L1892 547 Z" fill="#7a7a7a" stroke="none"/><circle cx="1902.5" cy="560" r="3"/><path d="M1900.5 560 H1904.5"/></g>
<text x="1891" y="471" font-size="7" fill="#7a7a7a" font-family="Liberation Sans" font-weight="bold">2D</text>
</svg>
<svg class="a" style="left:1100px;top:915px" width="40" height="30"><path d="M21 0 V12.5" stroke="#888" stroke-width="1" stroke-dasharray="4 2"/><circle cx="21" cy="19.3" r="6.6" fill="none" stroke="#ffff00" stroke-width="1.2"/><text x="21" y="23" font-size="9" fill="#1f1fff" text-anchor="middle" font-family="Liberation Sans" textLength="9" lengthAdjust="spacingAndGlyphs">10</text></svg>
<div class="a" style="left:529px;top:918px;width:789px;height:15px;background:rgba(60,60,60,0.58);border-radius:2px"></div>
<div class="a" style="left:529px;top:938px;width:60px;height:15px;background:rgba(60,60,60,0.68);border-radius:2px"></div>
<div class="a" style="left:529px;top:958px;width:60px;height:15px;background:rgba(60,60,60,0.76);border-radius:2px"></div>
<div class="t" style="left:531px;top:920px;font-family:'Liberation Mono',monospace;white-space:pre;font-size:11.65px;line-height:14px;color:#f2f2f2">Autodesk DWG.  This file is a TrustedDWG last saved by an Autodesk application or Autodesk licensed application.</div>
<div class="t" style="left:531px;top:940px;font-family:'Liberation Mono',monospace;white-space:pre;font-size:11.65px;line-height:14px;color:#f2f2f2">Command:</div>
<div class="t" style="left:531px;top:960px;font-family:'Liberation Mono',monospace;white-space:pre;font-size:11.65px;line-height:14px;color:#f2f2f2">Command:</div>
<div class="a" style="left:470px;top:977px;width:980px;height:25px;background:rgba(250,250,250,0.72);border-top:1px solid #7a7a7a;border-right:1px solid #9a9a9a;border-radius:0 3px 0 0"></div>
<div class="a" style="left:1377px;top:978px;width:72px;height:24px;background:#d0d0d0;border-radius:0 3px 0 0"></div>
<div class="a" style="left:470px;top:977px;width:53px;height:25px;background:linear-gradient(#8c8c8c,#6e6e6e)"></div>
<svg class="a" style="left:470px;top:977px" width="980" height="25">
<g fill="#d8d8d8"><rect x="4" y="4" width="1.6" height="1.6"/><rect x="7" y="4" width="1.6" height="1.6"/><rect x="4" y="8" width="1.6" height="1.6"/><rect x="7" y="8" width="1.6" height="1.6"/><rect x="4" y="12" width="1.6" height="1.6"/><rect x="7" y="12" width="1.6" height="1.6"/><rect x="4" y="16" width="1.6" height="1.6"/><rect x="7" y="16" width="1.6" height="1.6"/><rect x="4" y="20" width="1.6" height="1.6"/><rect x="7" y="20" width="1.6" height="1.6"/></g>
<path d="M15 8 L23 16 M23 8 L15 16" stroke="#f4f4f4" stroke-width="1.6"/>
<path d="M34 8 C32 11 34 14 37 13 L44 20 L46 18 L39 11 C40 8 37 6 34 8 Z M35 8 L37 10" stroke="#f0f0f0" stroke-width="1.3" fill="none"/>
<rect x="58.5" y="5.5" width="14" height="13" rx="1" fill="#f2f2f2" stroke="#9a9a9a"/>
<path d="M61 9 L64 11.5 L61 14 M65 15 H69" stroke="#777" stroke-width="1" fill="none"/>
<path d="M77 10 H83 L80 13 Z" fill="#9a9a9a"/>
<path d="M970 14 H977 L973.5 10 Z" fill="#333"/>
</svg>
<div class="t" style="left:559px;top:982px;font-family:'Liberation Mono',monospace;font-style:italic;font-size:12px;line-height:14px;color:#b2b2b2">Type a command</div>
<div class="a" id="status"></div>
<svg class="a" style="left:0;top:1003px" width="1919" height="28">
<path d="M8 0 H70 C66 3 65 6 64 12 C63 17 61 18 57 18 H22 C18 18 16 17 15 12 C14 6 12 2 8 0 Z" fill="#4f4f4f"/>
<path d="M64 0 H139 C135 3 133 6 131 12 C130 17 128 18 124 18 H80 C76 18 74 17 73 12 C71 6 69 2 64 0 Z" fill="#676767"/>
<path d="M146 1 H162 C161 6 160 10 158 14 C156 17 154 18 150 18 H139 C141 12 142 6 146 1 Z" fill="#4a4a4a" stroke="#5a5a5a" stroke-width="0.7"/>
<path d="M151 5 V14 M146.5 9.5 H155.5" stroke="#cfcfcf" stroke-width="2"/>
<rect x="1461" y="0" width="2" height="28" fill="#2c2c2c"/>
<g fill="#4a4a4a" stroke="#5c5c5c" stroke-width="1">
<rect x="1464.5" y="1.5" width="40" height="25"/>
<rect x="1506.5" y="1.5" width="167" height="25"/>
<rect x="1675.5" y="1.5" width="73" height="25"/>
<rect x="1750.5" y="1.5" width="40" height="25"/>
<rect x="1792.5" y="1.5" width="24" height="25"/>
<rect x="1818.5" y="1.5" width="24" height="25"/>
<rect x="1844.5" y="1.5" width="24" height="25"/>
<rect x="1870.5" y="1.5" width="49" height="25"/>
</g>
<rect x="1508" y="3" width="22" height="22" fill="#5d8fcc"/>
<rect x="1636" y="3" width="22" height="22" fill="#5d8fcc"/>
<g fill="none" stroke="#dcdcdc" stroke-width="1.4">
<path d="M1512 8 V21 H1525 M1512 16 H1517 V21"/>
<circle cx="1542" cy="15" r="6"/><path d="M1540 17 L1550 7"/>
<path d="M1614 20 L1626 9 M1614 20 H1627"/>
<rect x="1641" y="9" width="12" height="12"/><rect x="1638" y="6" width="5" height="5"/>
<path d="M1680.5 10 V6.5 H1684 M1688 6.5 H1692 M1696 6.5 V10 M1680.5 14 V18 M1680.5 22 H1684 M1688 22 H1692 M1696 22 V18" stroke-width="1.3"/><rect x="1686.5" y="12.5" width="9.5" height="9.5" stroke-width="1.3"/><path d="M1681 7 L1687 13 M1681 7 H1685 M1681 7 V11" stroke-width="1.2"/>
<path d="M1797 14 H1811 M1804 7 V21"/>
<rect x="1822" y="5" width="6" height="6"/><circle cx="1836" cy="12" r="3.5"/><path d="M1826 20 L1829 15 L1832 20 Z"/>
<rect x="1875" y="8" width="15" height="12"/><path d="M1878 17 L1881 14 M1878 17 V15 M1878 17 H1880 M1887 11 L1884 14 M1887 11 V13 M1887 11 H1885" stroke-width="1.1"/>
<path d="M1894 7 H1913 M1894 14 H1913 M1894 21 H1913" stroke-width="2"/>
</g>
<path d="M1575 6 L1590 22" stroke="#e05050" stroke-width="1.3"/><path d="M1582 4 V24" stroke="#50c050" stroke-width="1.3"/><circle cx="1582" cy="14" r="2" fill="none" stroke="#ddd"/>
<path d="M1704 25 L1711 8 L1718 25 L1711 20 Z M1728 25 L1735 8 L1742 25 L1735 20 Z" fill="#dcdcdc" transform="translate(0,-2)"/><circle cx="1717" cy="8.5" r="2.6" fill="none" stroke="#ddd" stroke-width="1.1"/><path d="M1742 5 L1738 10 H1741 L1739 14" stroke="#ddd" stroke-width="1.2" fill="none"/>
<circle cx="1762.5" cy="14" r="5.5" fill="none" stroke="#dcdcdc" stroke-width="3" stroke-dasharray="2.6 1.7"/><circle cx="1762.5" cy="14" r="4.6" fill="#dcdcdc"/><circle cx="1762.5" cy="14" r="2" fill="#4a4a4a"/>
<path d="M1849 7 H1860 L1863 10 V18 H1849 Z" fill="#5ab6f2"/><path d="M1849 18 H1858 V22 H1849 Z" fill="#f2c45a"/><path d="M1849 12 H1863 M1853.5 7 V18" stroke="#fff" stroke-width="1"/><path d="M1857 19 L1860 22 L1866 15" stroke="#5fd45f" stroke-width="1.6" fill="none"/>
<g fill="#eee"><path d="M1556 12 H1563 L1559.5 16 Z"/><path d="M1597 12 H1604 L1600.5 16 Z"/><path d="M1662 12 H1669 L1665.5 16 Z"/><path d="M1778 12 H1785 L1781.5 16 Z"/></g>
</svg>
<div class="t" style="left:1467px;top:1010px;font-size:12.5px;color:#f4f4f4;font-weight:bold;transform:scaleX(0.78);transform-origin:0 0">PAPER</div>
<div class="t" style="left:23px;top:1004px;font-size:12px;color:#c0c0c0">Model</div>
<div class="t" style="left:80px;top:1004px;font-size:12px;color:#ffffff;font-weight:bold">Layout1</div>
</body></html>
